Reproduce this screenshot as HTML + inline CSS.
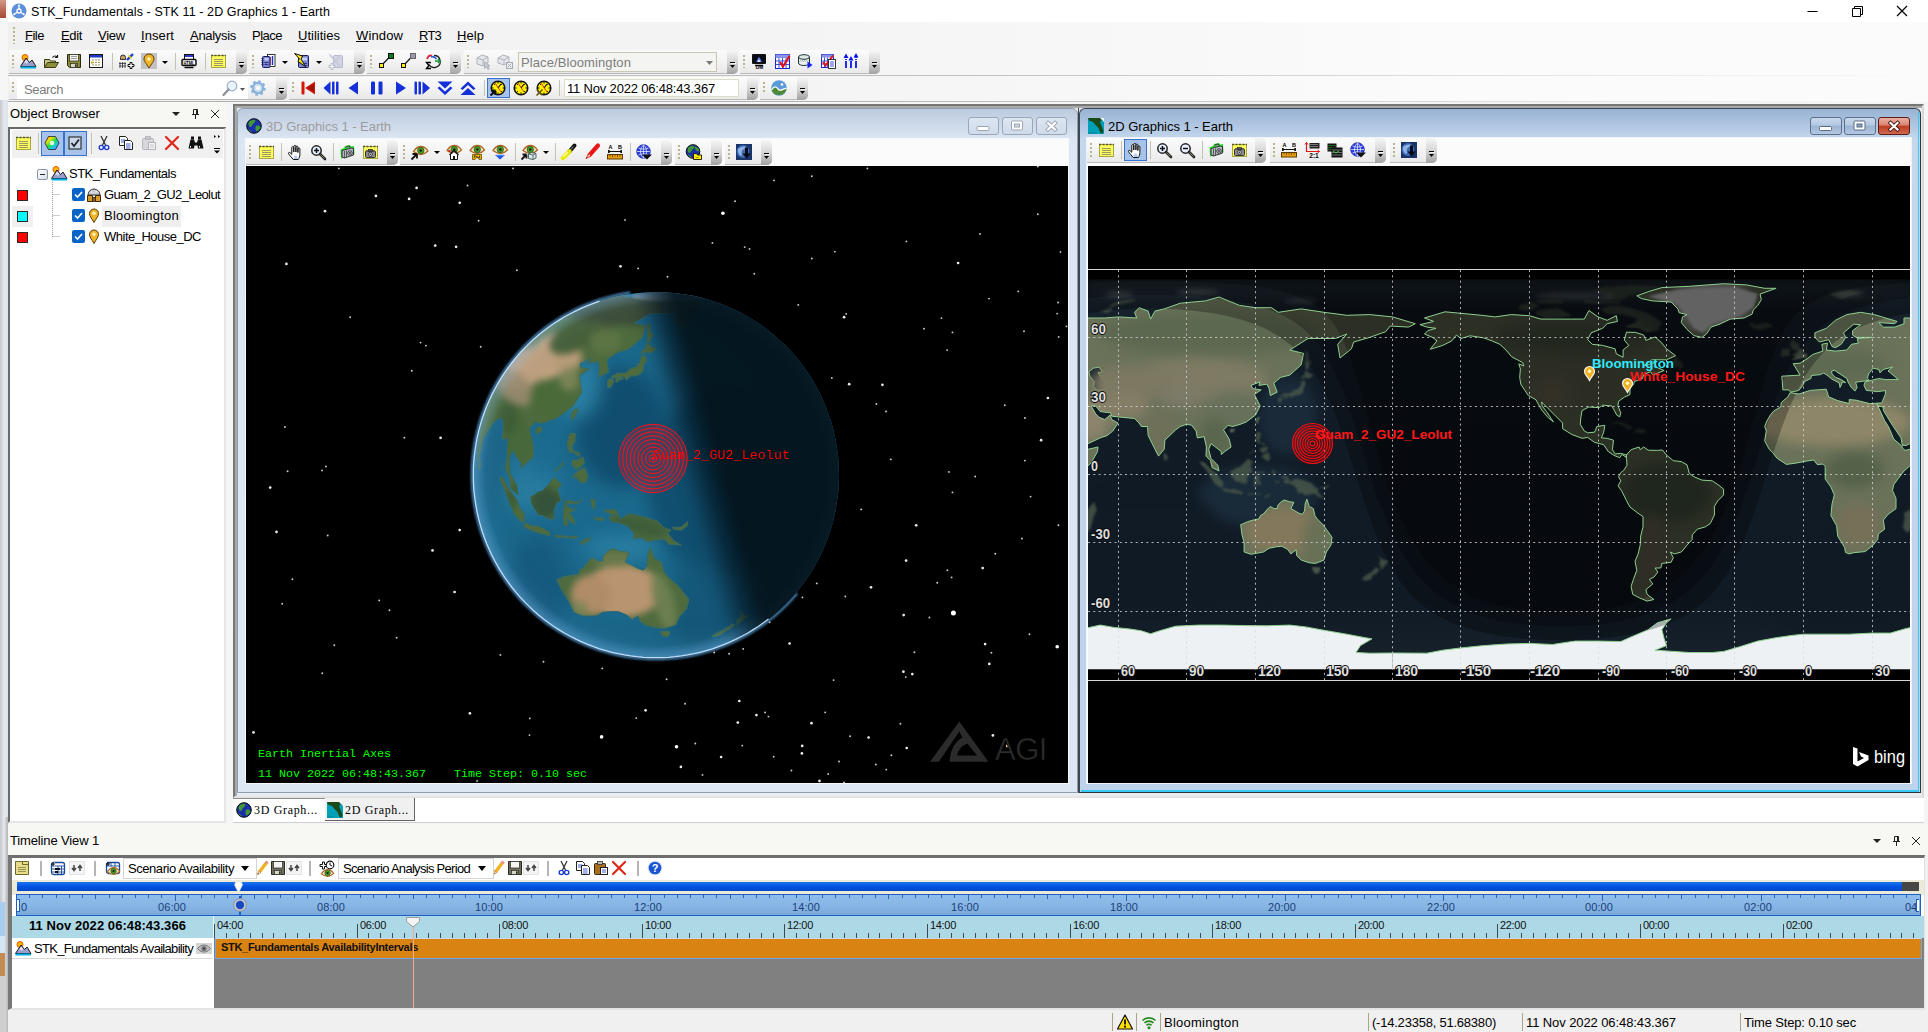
<!DOCTYPE html>
<html><head><meta charset="utf-8"><title>STK_Fundamentals - STK 11 - 2D Graphics 1 - Earth</title>
<style>
html,body{margin:0;padding:0;}
body{width:1928px;height:1032px;overflow:hidden;background:#f0f0f0;position:relative;font-family:"Liberation Sans",sans-serif;}
div,span.t,svg{position:absolute;box-sizing:border-box;}
span.t{white-space:pre;display:block;}
.tb{background:linear-gradient(#fbfbfb,#f1f1f1 60%,#e9e9e9);border-radius:0 5px 5px 0;border-bottom:1px solid #b9b9b9;}
.ov{background:linear-gradient(#f6f6f6,#d6d6d6 50%,#a2a2a2);border-radius:0 5px 5px 0;}
.sep{background:#c5c2b0;width:1px;}
.grip{width:2px;background:repeating-linear-gradient(#b7b48f 0 2px,transparent 2px 4px);}
u{text-decoration:underline;text-underline-offset:1px;}
</style></head>
<body>
<div style="left:0px;top:0px;width:8px;height:1032px;background:linear-gradient(90deg,#c4c6ca,#e4e8ee 50%,#dde3ec);"></div>
<div style="left:0px;top:0px;width:6px;height:18px;background:linear-gradient(#d09a88,#b9654f 60%,#a04a38);"></div>
<div style="left:0px;top:18px;width:8px;height:82px;background:#f6f6f6;"></div>
<div style="left:6px;top:0px;width:2px;height:18px;background:#f6f6f6;"></div>
<div style="left:0px;top:902px;width:5px;height:34px;background:#a8cdf0;"></div>
<div style="left:0px;top:936px;width:5px;height:17px;background:#d4e6f6;"></div>
<div style="left:0px;top:953px;width:5px;height:23px;background:#c48c54;"></div>
<div style="left:0px;top:976px;width:5px;height:56px;background:#cfcfcf;"></div>
<div style="left:5px;top:817px;width:3px;height:215px;background:linear-gradient(90deg,#d8d8d8,#b4b4b4);"></div>
<div style="left:8px;top:0px;width:1920px;height:22px;background:#fff;"></div>
<svg width="16" height="16" viewBox="0 0 16 16" style="left:11px;top:3px;overflow:visible"><circle cx="8" cy="8" r="7.500" fill="#5d8fdb"/><circle cx="8" cy="8" r="2" fill="none" stroke="#fff" stroke-width="1.300"/><path d="M8 6V2.500M9.700 9.200l3 2M6.300 9.200l-3 2" stroke="#fff" stroke-width="1.200"/><circle cx="8" cy="2.500" r="1" fill="#fff"/><circle cx="12.800" cy="11.300" r="1" fill="#fff"/><circle cx="3.200" cy="11.300" r="1" fill="#fff"/></svg>
<span id="title" class="t" style="left:31px;top:1.7px;line-height:20px;font-size:12.5px;color:#000;font-weight:normal;font-family:'Liberation Sans',sans-serif;letter-spacing:0.095px;">STK_Fundamentals - STK 11 - 2D Graphics 1 - Earth</span>
<svg width="140" height="22" style="left:1788px;top:0"><path d="M19.5 11.5h10" stroke="#000"/><path d="M64.5 8.5h8v8h-8zM66.5 8.5v-2h8v8h-2" fill="none" stroke="#000"/><path d="M109 6l10 10M119 6l-10 10" stroke="#000" stroke-width="1.2"/></svg>
<div style="left:8px;top:22px;width:1920px;height:27px;background:linear-gradient(90deg,#f0f0f0,#f4f4f4 40%,#fbfbfb 75%);"></div>
<div class="grip" style="left:13px;top:27px;width:2px;height:17px;"></div>
<span id="m_File" class="t" style="left:25px;top:25.5px;line-height:20px;font-size:13px;color:#000;font-weight:normal;font-family:'Liberation Sans',sans-serif;letter-spacing:-0.488px;"><u>F</u>ile</span>
<span id="m_Edit" class="t" style="left:61px;top:25.5px;line-height:20px;font-size:13px;color:#000;font-weight:normal;font-family:'Liberation Sans',sans-serif;letter-spacing:-0.356px;"><u>E</u>dit</span>
<span id="m_View" class="t" style="left:98px;top:25.5px;line-height:20px;font-size:13px;color:#000;font-weight:normal;font-family:'Liberation Sans',sans-serif;letter-spacing:-0.238px;"><u>V</u>iew</span>
<span id="m_Insert" class="t" style="left:141px;top:25.5px;line-height:20px;font-size:13px;color:#000;font-weight:normal;font-family:'Liberation Sans',sans-serif;letter-spacing:0.078px;"><u>I</u>nsert</span>
<span id="m_Analysis" class="t" style="left:190px;top:25.5px;line-height:20px;font-size:13px;color:#000;font-weight:normal;font-family:'Liberation Sans',sans-serif;letter-spacing:-0.303px;"><u>A</u>nalysis</span>
<span id="m_Place" class="t" style="left:252px;top:25.5px;line-height:20px;font-size:13px;color:#000;font-weight:normal;font-family:'Liberation Sans',sans-serif;letter-spacing:-0.509px;">P<u>l</u>ace</span>
<span id="m_Utilities" class="t" style="left:298px;top:25.5px;line-height:20px;font-size:13px;color:#000;font-weight:normal;font-family:'Liberation Sans',sans-serif;letter-spacing:0.010px;"><u>U</u>tilities</span>
<span id="m_Window" class="t" style="left:356px;top:25.5px;line-height:20px;font-size:13px;color:#000;font-weight:normal;font-family:'Liberation Sans',sans-serif;letter-spacing:0.125px;"><u>W</u>indow</span>
<span id="m_RT3" class="t" style="left:419px;top:25.5px;line-height:20px;font-size:13px;color:#000;font-weight:normal;font-family:'Liberation Sans',sans-serif;letter-spacing:-0.776px;"><u>R</u>T3</span>
<span id="m_Help" class="t" style="left:457px;top:25.5px;line-height:20px;font-size:13px;color:#000;font-weight:normal;font-family:'Liberation Sans',sans-serif;letter-spacing:0.062px;"><u>H</u>elp</span>
<div style="left:8px;top:49px;width:1920px;height:54px;background:linear-gradient(90deg,#efefef,#f4f4f4 40%,#fbfbfb 75%);"></div>
<div class="tb" style="left:9px;top:50px;width:238px;height:24px;"></div>
<div class="grip" style="left:12px;top:55px;width:2px;height:13px;"></div>
<div class="ov" style="left:236px;top:50px;width:11px;height:24px;"><svg width="11" height="24" style="left:0;top:0"><path d="M3 12.5h5" stroke="#000" stroke-width="1"/><path d="M3 15h5l-2.500 3z" fill="#000"/><path d="M4 13.5h5" stroke="#fff" stroke-width="1" opacity=".8"/></svg></div>
<svg width="16" height="16" viewBox="0 0 16 16" style="left:20px;top:53px;overflow:visible"><circle cx="5" cy="4.500" r="3" fill="#ffb400" stroke="#e85a00" stroke-width="1"/><path d="M0.500 13.500L6 5l3.500 4.500L12 7l4 6.500z" fill="#9a9ccc" stroke="#1a1a1a" stroke-width="1"/><path d="M6 6.500l-2 4 2-1 1 2 1-3z" fill="#fff" opacity=".7"/><rect x="0.500" y="13.500" width="15.500" height="2" fill="#00aee8"/></svg>
<svg width="16" height="16" viewBox="0 0 16 16" style="left:43px;top:53px;overflow:visible"><path d="M1.500 14.500v-8h5l1 1.500h5v2" fill="#c8c88a" stroke="#3c3c14" stroke-width="1"/><path d="M1.500 14.500l3-5h11l-3 5z" fill="#8e8e3c" stroke="#3c3c14" stroke-width="1"/><path d="M9.500 4.500c1.500-2 3.500-2 5 0M14.500 4.500v-2.500M14.500 4.500h-2.500" stroke="#111" stroke-width="1.200" fill="none"/></svg>
<svg width="16" height="16" viewBox="0 0 16 16" style="left:66px;top:53px;overflow:visible"><path d="M1.500 1.500h13v13h-11l-2-2z" fill="#8a8a3e" stroke="#2a2a10" stroke-width="1"/><rect x="3.500" y="1.500" width="9" height="6.500" fill="#f4f4f4" stroke="#2a2a10" stroke-width=".7"/><path d="M5 3.500h6M5 5.500h6" stroke="#888" stroke-width=".8"/><rect x="4.500" y="10.500" width="7" height="4" fill="#d8d8c8" stroke="#2a2a10" stroke-width=".7"/><rect x="9" y="11.300" width="1.700" height="2.600" fill="#2a2a10"/></svg>
<svg width="16" height="16" viewBox="0 0 16 16" style="left:88px;top:53px;overflow:visible"><rect x="1.500" y="1.500" width="13" height="13" fill="#fff" stroke="#1a1a1a" stroke-width="1"/><rect x="2" y="2" width="12" height="2.500" fill="#1c3cc8"/><path d="M4 7h8M4 9.500h8M4 12h8" stroke="#9a9a6a" stroke-width="1.200" stroke-dasharray="2 1"/><rect x="3" y="8.700" width="2" height="1.800" fill="#d8a800"/></svg>
<div class="sep" style="left:112px;top:53px;width:1px;height:17px;"></div>
<svg width="16" height="16" viewBox="0 0 16 16" style="left:118px;top:53px;overflow:visible"><path d="M2.500 6.500h5v-2a2.500 2.500 0 0 0-5 0z" fill="#c8a064" stroke="#222" stroke-width=".9"/><path d="M9 7l6-6" stroke="#1a3cd8" stroke-width="2.400"/><path d="M10.500 2.500l3 3" stroke="#e8d800" stroke-width="1.600"/><path d="M2 9v6M4.500 9v6M7 9v6M1 10.500h7M1 13h7" stroke="#444" stroke-width=".9"/><path d="M10 11.500h2v-2h2v2h2v2h-2v2h-2v-2h-2z" fill="#fff" stroke="#111" stroke-width="1"/></svg>
<svg width="16" height="16" viewBox="0 0 16 16" style="left:141px;top:53px;overflow:visible"><rect x="0" y="0" width="16" height="16" fill="#c2c2c2"/><path d="M8 15C5 10 3 8.500 3 6a5 5 0 0 1 10 0c0 2.500-2 4-5 9z" fill="#f0b428" stroke="#5a3c00" stroke-width="1"/><circle cx="8" cy="6" r="1.800" fill="#fff3c0"/></svg>
<svg width="6" height="3" style="left:162px;top:61px"><path d="M0 0h6L3 3z" fill="#000"/></svg>
<div class="sep" style="left:175px;top:53px;width:1px;height:17px;"></div>
<svg width="16" height="16" viewBox="0 0 16 16" style="left:181px;top:53px;overflow:visible"><rect x="3.500" y="1.500" width="9" height="6" fill="#fff" stroke="#111" stroke-width="1"/><rect x="4" y="2" width="8" height="2" fill="#2a3cc8"/><rect x="1" y="6.500" width="14" height="6" rx="1" fill="#fff" stroke="#111" stroke-width="1.500"/><text x="8" y="11.700" font-size="5.400" font-weight="bold" text-anchor="middle" textLength="11" lengthAdjust="spacingAndGlyphs" font-family="Liberation Sans,sans-serif" fill="#000">HTML</text><path d="M3.500 14.500h9" stroke="#111" stroke-width="1.500"/></svg>
<div class="sep" style="left:205px;top:53px;width:1px;height:17px;"></div>
<svg width="16" height="16" viewBox="0 0 16 16" style="left:210px;top:53px;overflow:visible"><rect x="1.500" y="2.500" width="14" height="12" fill="#ffff5a" stroke="#a8a846" stroke-width="1"/><path d="M1 2.500h15" stroke="#55552a" stroke-dasharray="2 1.500" stroke-width="1.600"/><path d="M4 6.500h9M4 8.500h9M4 10.500h9M4 12.500h9" stroke="#8e8e66" stroke-width=".9"/></svg>
<div class="tb" style="left:249px;top:50px;width:116px;height:24px;"></div>
<div class="grip" style="left:252px;top:55px;width:2px;height:13px;"></div>
<div class="ov" style="left:354px;top:50px;width:11px;height:24px;"><svg width="11" height="24" style="left:0;top:0"><path d="M3 12.5h5" stroke="#000" stroke-width="1"/><path d="M3 15h5l-2.500 3z" fill="#000"/><path d="M4 13.5h5" stroke="#fff" stroke-width="1" opacity=".8"/></svg></div>
<svg width="16" height="16" viewBox="0 0 16 16" style="left:260px;top:53px;overflow:visible"><rect x="7.500" y="1.500" width="7.500" height="12" fill="#fff" stroke="#222" stroke-width=".9"/><path d="M10 4v8" stroke="#e01818" stroke-width="1.400"/><path d="M12.500 3v9" stroke="#1830d0" stroke-width="1.400"/><rect x="2.500" y="3.500" width="7.500" height="11" rx="1" fill="#7a84d0" stroke="#1a1a5a" stroke-width="1"/><path d="M1.500 5.500h2M1.500 7.500h2M1.500 9.500h2M1.500 11.500h2" stroke="#1a1a5a" stroke-width=".9"/><rect x="4.500" y="5" width="4" height="2.500" fill="#c8d0ff"/><path d="M4.500 9.500h4M4.500 11.500h4" stroke="#2a2a7a" stroke-width=".9"/></svg>
<svg width="6" height="3" style="left:282px;top:61px"><path d="M0 0h6L3 3z" fill="#000"/></svg>
<svg width="16" height="16" viewBox="0 0 16 16" style="left:294px;top:53px;overflow:visible"><rect x="4.500" y="2.500" width="10" height="12" rx="1" fill="#7a84d0" stroke="#1a1a5a" stroke-width="1"/><rect x="8" y="4.500" width="5" height="3" fill="#c8d0ff"/><path d="M9 10.500h4M9 12.500h4" stroke="#2a2a7a" stroke-width=".9"/><path d="M0.500 0.500l8 2.500-1.500 3.200 4.500 7.300-7.500-5 1.300-2.800z" fill="#ffee00" stroke="#111" stroke-width="1" stroke-linejoin="round"/></svg>
<svg width="6" height="3" style="left:316px;top:61px"><path d="M0 0h6L3 3z" fill="#000"/></svg>
<svg width="16" height="16" viewBox="0 0 16 16" style="left:328px;top:53px;overflow:visible"><rect x="5.500" y="2.500" width="9" height="12" rx="1" fill="#d0d4e4" stroke="#b4b8cc" stroke-width="1"/><path d="M1.500 1.500l11 12M13 2L2.500 13" stroke="#c4c8d8" stroke-width="1.500"/><path d="M1 12.500h2v-2h2v2h2v2h-2v2h-2v-2h-2z" fill="#f4f4f4" stroke="#b4b8cc" stroke-width=".9"/></svg>
<div class="tb" style="left:367px;top:50px;width:94px;height:24px;"></div>
<div class="grip" style="left:370px;top:55px;width:2px;height:13px;"></div>
<div class="ov" style="left:450px;top:50px;width:11px;height:24px;"><svg width="11" height="24" style="left:0;top:0"><path d="M3 12.5h5" stroke="#000" stroke-width="1"/><path d="M3 15h5l-2.500 3z" fill="#000"/><path d="M4 13.5h5" stroke="#fff" stroke-width="1" opacity=".8"/></svg></div>
<svg width="16" height="16" viewBox="0 0 16 16" style="left:378px;top:53px;overflow:visible"><path d="M3.500 12.500L12.500 3" stroke="#111" stroke-width="1.200"/><rect x="1.500" y="10.500" width="4" height="4" fill="#ffee00" stroke="#111" stroke-width="1"/><rect x="10.500" y="0.500" width="5" height="5" fill="#0a7a1a" stroke="#111" stroke-width="1"/></svg>
<svg width="16" height="16" viewBox="0 0 16 16" style="left:400px;top:53px;overflow:visible"><path d="M3.500 12.500L12.500 3" stroke="#111" stroke-width="1.200"/><rect x="1.500" y="10.500" width="4" height="4" fill="#ffee00" stroke="#111" stroke-width="1"/><rect x="10.500" y="0.500" width="5" height="5" fill="#9a9aaa" stroke="#666" stroke-width="1"/></svg>
<svg width="16" height="16" viewBox="0 0 16 16" style="left:425px;top:53px;overflow:visible"><path d="M9 2.500a6 6 0 1 1-5 9" stroke="#222" stroke-width="1.300" fill="none"/><path d="M2 6c1-3 3-4 5-3.500" stroke="#e0203c" stroke-width="1.800" fill="none"/><path d="M6 4c2-1 4 0 5.500 2" stroke="#2a5ae0" stroke-width="1.600" fill="none"/><path d="M10 8h5l-2-2M15 8l-2 2" stroke="#1a9a3a" stroke-width="1.400" fill="none"/><path d="M6 9.500H1.500l2.500 3-2.500 3H6" stroke="#000" stroke-width="1.400" fill="none"/></svg>
<div class="tb" style="left:464px;top:50px;width:274px;height:24px;"></div>
<div class="grip" style="left:467px;top:55px;width:2px;height:13px;"></div>
<div class="ov" style="left:727px;top:50px;width:11px;height:24px;"><svg width="11" height="24" style="left:0;top:0"><path d="M3 12.5h5" stroke="#000" stroke-width="1"/><path d="M3 15h5l-2.500 3z" fill="#000"/><path d="M4 13.5h5" stroke="#fff" stroke-width="1" opacity=".8"/></svg></div>
<svg width="16" height="16" viewBox="0 0 16 16" style="left:475px;top:53px;overflow:visible"><path d="M2 5l5-3 6 2v6l-5 3-6-2z" fill="#e4e6ea" stroke="#b0b4bc" stroke-width="1"/><path d="M2 5l6 2 5-3M8 7v6" stroke="#b0b4bc" stroke-width="1" fill="none"/><path d="M9.500 8.500v7l2-1.500 1.500 2.500 1.200-.7-1.500-2.500 2.300-.3z" fill="#c4c8d0" stroke="#a0a4ac" stroke-width=".7"/></svg>
<svg width="16" height="16" viewBox="0 0 16 16" style="left:497px;top:53px;overflow:visible"><path d="M1 5l5-3 6 2v5l-5 3-6-2z" fill="#e4e6ea" stroke="#b0b4bc" stroke-width="1"/><path d="M1 5l6 2 5-3M7 7v5" stroke="#b0b4bc" stroke-width="1" fill="none"/><rect x="9.500" y="9.500" width="6" height="6" fill="#f0f0f4" stroke="#a8acb8" stroke-width="1"/><path d="M10.500 10.500l4 4M14.500 10.500l-4 4" stroke="#a8acb8" stroke-width=".9"/></svg>
<div style="left:518px;top:52px;width:199px;height:20px;background:#f4f4f2;border:1px solid #c9c7b4;"></div>
<span id="combo1" class="t" style="left:521px;top:52.5px;line-height:20px;font-size:13px;color:#7d7d7d;font-weight:normal;font-family:'Liberation Sans',sans-serif;letter-spacing:0.094px;">Place/Bloomington</span>
<svg width="7" height="4" style="left:706px;top:61px"><path d="M0 0h7L3.5 4z" fill="#7a7a7a"/></svg>
<div class="tb" style="left:740px;top:50px;width:140px;height:24px;"></div>
<div class="grip" style="left:743px;top:55px;width:2px;height:13px;"></div>
<div class="ov" style="left:869px;top:50px;width:11px;height:24px;"><svg width="11" height="24" style="left:0;top:0"><path d="M3 12.5h5" stroke="#000" stroke-width="1"/><path d="M3 15h5l-2.500 3z" fill="#000"/><path d="M4 13.5h5" stroke="#fff" stroke-width="1" opacity=".8"/></svg></div>
<svg width="16" height="16" viewBox="0 0 16 16" style="left:751px;top:53px;overflow:visible"><rect x="1" y="1" width="14" height="10" rx="1" fill="#111"/><rect x="2.500" y="2.500" width="11" height="7" fill="#0a0a1a"/><path d="M5 9l3-5.500L11 9z" fill="#5a7adc"/><path d="M6.500 9l1.500-3 1.500 3z" fill="#e8e8ff"/><path d="M4 12.500h8" stroke="#111" stroke-width="1.500"/><text x="8.500" y="16.200" font-size="4.800" font-weight="bold" text-anchor="middle" font-family="Liberation Sans,sans-serif" fill="#000">DM</text></svg>
<svg width="16" height="16" viewBox="0 0 16 16" style="left:774px;top:53px;overflow:visible"><rect x="1.500" y="1.500" width="14" height="14" fill="#fff" stroke="#1a2ac8" stroke-width="1"/><rect x="1.500" y="1.500" width="14" height="3.500" fill="#8a94e8"/><path d="M1.500 8h14M1.500 11.500h14M5 5v10.500M8.500 5v10.500M12 5v10.500" stroke="#2a3cd8" stroke-width=".9"/><path d="M6 9l3 4.500L15.500 3" stroke="#e81010" stroke-width="2.200" fill="none"/></svg>
<svg width="16" height="16" viewBox="0 0 16 16" style="left:797px;top:53px;overflow:visible"><path d="M1.500 4v6c0 1.500 2.500 2.500 5.500 2.500s5.500-1 5.500-2.500V4" fill="#f0f0f0" stroke="#1a3a3a" stroke-width="1"/><ellipse cx="7" cy="4" rx="5.500" ry="2.300" fill="#e0e8e8" stroke="#1a3a3a" stroke-width="1"/><path d="M2.500 8.500l1-1 1 1 1-1 1 1 1-1 1 1 1-1 1 1 1-1" stroke="#8a9a9a" stroke-width=".7" fill="none"/><path d="M10.500 8.500v7l5-3.500z" fill="#1020f0"/></svg>
<svg width="16" height="16" viewBox="0 0 16 16" style="left:820px;top:53px;overflow:visible"><rect x="1.500" y="1.500" width="12" height="13" fill="#fff" stroke="#1a2ac8" stroke-width="1"/><rect x="1.500" y="1.500" width="12" height="3" fill="#8a94e8"/><path d="M1.500 8h7M1.500 11h7M4.500 4.500v10M7.500 4.500v10" stroke="#2a3cd8" stroke-width=".9"/><path d="M3 9l2.500 3.500L13 2.500" stroke="#e81010" stroke-width="2" fill="none"/><rect x="8.500" y="6.500" width="7" height="9" fill="#fff" stroke="#222" stroke-width=".9"/><path d="M10 9h4M10 11h4M10 13h4" stroke="#2a3cd8" stroke-width=".9"/></svg>
<svg width="16" height="16" viewBox="0 0 16 16" style="left:843px;top:53px;overflow:visible"><path d="M3 15V4M8 15V6M13 15V3" stroke="#0a18e0" stroke-width="1.800" stroke-dasharray="7 1 1 1 1 1"/><path d="M0.500 5L3 0.500 5.500 5zM5.500 7.500L8 3l2.500 4.500zM10.500 4.500L13 0l2.500 4.500z" fill="#0a18e0"/></svg>
<div class="tb" style="left:9px;top:77px;width:278px;height:23px;"></div>
<div class="grip" style="left:12px;top:82px;width:2px;height:12px;"></div>
<div class="ov" style="left:276px;top:77px;width:11px;height:23px;"><svg width="11" height="23" style="left:0;top:0"><path d="M3 11.5h5" stroke="#000" stroke-width="1"/><path d="M3 14h5l-2.500 3z" fill="#000"/><path d="M4 12.5h5" stroke="#fff" stroke-width="1" opacity=".8"/></svg></div>
<div style="left:17px;top:78px;width:231px;height:21px;background:#fff;"></div>
<span id="search" class="t" style="left:24px;top:80.0px;line-height:20px;font-size:13px;color:#7d7d7d;font-weight:normal;font-family:'Liberation Sans',sans-serif;letter-spacing:-0.367px;">Search</span>
<svg width="16" height="16" viewBox="0 0 16 16" style="left:222px;top:80px;overflow:visible"><circle cx="10" cy="6" r="4.800" fill="#eaf3fc" stroke="#9ab0c8" stroke-width="1.200"/><path d="M6.500 9.500L1.500 15" stroke="#8a8f98" stroke-width="2.200" stroke-linecap="round"/></svg>
<svg width="5" height="3" style="left:240px;top:88px"><path d="M0 0h5L2.5 3z" fill="#555"/></svg>
<svg width="16" height="16" viewBox="0 0 16 16" style="left:250px;top:80px;overflow:visible"><circle cx="8" cy="8" r="5" fill="none" stroke="#8ab4dc" stroke-width="2.600"/><circle cx="8" cy="8" r="6.600" fill="none" stroke="#8ab4dc" stroke-width="2.400" stroke-dasharray="2.600 2.580"/><circle cx="8" cy="8" r="2.600" fill="#fbfbfb" stroke="#a8c8e8" stroke-width=".6"/></svg>
<div class="tb" style="left:289px;top:77px;width:469px;height:23px;"></div>
<div class="grip" style="left:292px;top:82px;width:2px;height:12px;"></div>
<div class="ov" style="left:747px;top:77px;width:11px;height:23px;"><svg width="11" height="23" style="left:0;top:0"><path d="M3 11.5h5" stroke="#000" stroke-width="1"/><path d="M3 14h5l-2.500 3z" fill="#000"/><path d="M4 12.5h5" stroke="#fff" stroke-width="1" opacity=".8"/></svg></div>
<svg width="16" height="16" viewBox="0 0 16 16" style="left:300px;top:80px;overflow:visible"><rect x="1.500" y="1.500" width="3" height="13" rx="1" fill="#d01808"/><path d="M15 1.500v13L5 8z" fill="#d01808"/><path d="M14 4v8L7.500 8z" fill="#a01004"/></svg>
<svg width="16" height="16" viewBox="0 0 16 16" style="left:323px;top:80px;overflow:visible"><path d="M7.500 1.500v13L0.500 8z" fill="#1430d8"/><rect x="9" y="1.500" width="2.500" height="13" rx="1" fill="#1430d8"/><rect x="13" y="1.500" width="2.500" height="13" rx="1" fill="#1430d8"/></svg>
<svg width="16" height="16" viewBox="0 0 16 16" style="left:346px;top:80px;overflow:visible"><path d="M12 1.500v13L2.500 8z" fill="#1430d8"/></svg>
<svg width="16" height="16" viewBox="0 0 16 16" style="left:369px;top:80px;overflow:visible"><rect x="2" y="1.500" width="4" height="13" rx="1.200" fill="#1430d8"/><rect x="9.500" y="1.500" width="4" height="13" rx="1.200" fill="#1430d8"/></svg>
<svg width="16" height="16" viewBox="0 0 16 16" style="left:392px;top:80px;overflow:visible"><path d="M4 1.500v13L14 8z" fill="#1430d8"/></svg>
<svg width="16" height="16" viewBox="0 0 16 16" style="left:414px;top:80px;overflow:visible"><path d="M8.500 1.500v13L16 8z" fill="#1430d8"/><rect x="0.500" y="1.500" width="2.500" height="13" rx="1" fill="#1430d8"/><rect x="4.500" y="1.500" width="2.500" height="13" rx="1" fill="#1430d8"/></svg>
<svg width="16" height="16" viewBox="0 0 16 16" style="left:437px;top:80px;overflow:visible"><path d="M0.500 1.500h15L8 8.500z" fill="#1430d8"/><path d="M0.500 8l2-1.500L8 11.500l5.500-5 2 1.500L8 15z" fill="#1430d8"/></svg>
<svg width="16" height="16" viewBox="0 0 16 16" style="left:460px;top:80px;overflow:visible"><path d="M0.500 15h15L8 8z" fill="#1430d8"/><path d="M0.500 8.500l2 1.500L8 5l5.500 5 2-1.500L8 1.500z" fill="#1430d8"/></svg>
<div class="sep" style="left:484px;top:80px;width:1px;height:16px;"></div>
<div style="left:487px;top:78px;width:23px;height:20px;background:#a8c3ea;border:1px solid #3a72d0;"></div>
<svg width="16" height="16" viewBox="0 0 16 16" style="left:490px;top:80px;overflow:visible"><circle cx="8" cy="8" r="6.800" fill="#fff200" stroke="#111" stroke-width="1.500"/><path d="M8 2v1.500M8 12.500V14M2 8h1.500M12.500 8H14M3.800 3.800l1 1M12.200 3.800l-1 1M3.800 12.200l1-1M12.200 12.200l-1-1" stroke="#111" stroke-width="1"/><path d="M8 8l3-4" stroke="#111" stroke-width="1.200"/><path d="M5 3l6 9" stroke="#e02020" stroke-width=".9"/><path d="M0.500 15.500l5-5M5.500 10.500v4M5.500 10.500h-4" stroke="#111" stroke-width="2" fill="none"/></svg>
<svg width="16" height="16" viewBox="0 0 16 16" style="left:513px;top:80px;overflow:visible"><circle cx="8" cy="8" r="6.800" fill="#fff200" stroke="#111" stroke-width="1.500"/><path d="M8 2v1.500M8 12.500V14M2 8h1.500M12.500 8H14M3.800 3.800l1 1M12.200 3.800l-1 1M3.800 12.200l1-1M12.200 12.200l-1-1" stroke="#111" stroke-width="1"/><path d="M8 8l3-4" stroke="#111" stroke-width="1.200"/><path d="M5 3l6 9" stroke="#e02020" stroke-width=".9"/></svg>
<svg width="16" height="16" viewBox="0 0 16 16" style="left:536px;top:80px;overflow:visible"><circle cx="8" cy="8" r="6.800" fill="#fff200" stroke="#111" stroke-width="1.500"/><path d="M8 2v1.500M8 12.500V14M2 8h1.500M12.500 8H14M3.800 3.800l1 1M12.200 3.800l-1 1M3.800 12.200l1-1M12.200 12.200l-1-1" stroke="#111" stroke-width="1"/><path d="M8 8l3-4" stroke="#111" stroke-width="1.200"/><path d="M5 3l6 9" stroke="#e02020" stroke-width=".9"/><path d="M0.500 15.500l6-6M1 10l5 5" stroke="#6a5a00" stroke-width="1.600" fill="none"/></svg>
<div class="sep" style="left:559px;top:80px;width:1px;height:16px;"></div>
<div style="left:564px;top:79px;width:175px;height:18px;background:#fff;border:1px solid #dcdcc8;"></div>
<span id="date1" class="t" style="left:567px;top:78.5px;line-height:20px;font-size:13px;color:#000;font-weight:normal;font-family:'Liberation Sans',sans-serif;letter-spacing:-0.178px;">11 Nov 2022 06:48:43.367</span>
<div class="tb" style="left:760px;top:77px;width:48px;height:23px;"></div>
<div class="grip" style="left:763px;top:82px;width:2px;height:12px;"></div>
<div class="ov" style="left:797px;top:77px;width:11px;height:23px;"><svg width="11" height="23" style="left:0;top:0"><path d="M3 11.5h5" stroke="#000" stroke-width="1"/><path d="M3 14h5l-2.500 3z" fill="#000"/><path d="M4 12.5h5" stroke="#fff" stroke-width="1" opacity=".8"/></svg></div>
<svg width="16" height="16" viewBox="0 0 16 16" style="left:771px;top:80px;overflow:visible"><circle cx="8" cy="8" r="7.800" fill="#5a9ad8"/><circle cx="11" cy="4.500" r="1.300" fill="#fff"/><path d="M0.500 10C3 6 5 6 7.500 9.500 10 12 12.500 8 15.500 8.500A7.800 7.800 0 0 1 0.500 10z" fill="#4e8a34"/><path d="M0.500 10C3 6 5 6 7.500 9.500 10 12 12.500 8 15.500 8.500" stroke="#fff" stroke-width="1.300" fill="none"/></svg>
<div style="left:8px;top:75px;width:1920px;height:1px;background:linear-gradient(90deg,#bdbdbd,#bdbdbd 46%,rgba(200,200,200,0))"></div>
<div style="left:8px;top:101px;width:1920px;height:1px;background:linear-gradient(90deg,#b0b0b0,#b0b0b0 42%,rgba(200,200,200,0))"></div>
<div style="left:8px;top:102px;width:225px;height:722px;background:#f7f7f3;"></div>
<span id="ob_cap" class="t" style="left:10px;top:103.5px;line-height:20px;font-size:13px;color:#000;font-weight:normal;font-family:'Liberation Sans',sans-serif;letter-spacing:0.081px;">Object Browser</span>
<svg width="60" height="14" style="left:168px;top:107px"><path d="M4 5h8l-4 4z" fill="#222"/><path d="M25.5 2.5h4v5h-4zM28.5 2.5v5M24 7.5h7M27.5 8v4" fill="none" stroke="#222"/><path d="M43 3l8 8M51 3l-8 8" stroke="#222" stroke-width="1"/></svg>
<div style="left:8px;top:127px;width:219px;height:696px;background:#fff;border:2px solid #9a9a9a;border-top-color:#6a6a6a;border-left-color:#6a6a6a;border-right:3px solid #e6e6e6;border-bottom:2px solid #e6e6e6;"></div>
<div style="left:12px;top:130px;width:211px;height:28px;background:#f0f0f0;"></div>
<div style="left:41px;top:131px;width:23px;height:25px;background:#a8c3ea;border:1px solid #3a72d0;"></div>
<div style="left:64px;top:131px;width:23px;height:25px;background:#a8c3ea;border:1px solid #3a72d0;"></div>
<svg width="16" height="16" viewBox="0 0 16 16" style="left:15px;top:135px;overflow:visible"><rect x="1.500" y="2.500" width="14" height="12" fill="#ffff5a" stroke="#a8a846" stroke-width="1"/><path d="M1 2.500h15" stroke="#55552a" stroke-dasharray="2 1.500" stroke-width="1.600"/><path d="M4 6.500h9M4 8.500h9M4 10.500h9M4 12.500h9" stroke="#8e8e66" stroke-width=".9"/></svg>
<svg width="16" height="16" viewBox="0 0 16 16" style="left:44px;top:135px;overflow:visible"><defs><linearGradient id="cw" x1="0" y1="0" x2="1" y2="1"><stop offset="0" stop-color="#ff2020"/><stop offset=".25" stop-color="#ffe000"/><stop offset=".5" stop-color="#20e040"/><stop offset=".75" stop-color="#20c0ff"/><stop offset="1" stop-color="#c020ff"/></linearGradient></defs><path d="M4.500 1.500h7l3.500 6.500-3.500 6.500h-7L1 8z" fill="url(#cw)" stroke="#222" stroke-width=".8"/><circle cx="8" cy="8" r="2.300" fill="#fff" opacity=".85"/></svg>
<svg width="16" height="16" viewBox="0 0 16 16" style="left:67px;top:135px;overflow:visible"><rect x="2" y="2" width="12" height="12" fill="#c9d6ec" stroke="#333" stroke-width="1.200"/><path d="M4.500 8l2.500 3L12 4.500" stroke="#222" stroke-width="1.800" fill="none"/></svg>
<svg width="16" height="16" viewBox="0 0 16 16" style="left:96px;top:135px;overflow:visible"><path d="M5 1l4.500 9M11 1L6.500 10" stroke="#333" stroke-width="1.300"/><circle cx="5.300" cy="12.500" r="2.100" fill="none" stroke="#1a3ad0" stroke-width="1.400"/><circle cx="10.700" cy="12.500" r="2.100" fill="none" stroke="#1a3ad0" stroke-width="1.400"/></svg>
<svg width="16" height="16" viewBox="0 0 16 16" style="left:118px;top:135px;overflow:visible"><path d="M1.500 1.500h6l2 2v7h-8z" fill="#fff" stroke="#222" stroke-width="1"/><path d="M3 5h4.500M3 7h4.500" stroke="#2a4ad0" stroke-width=".9"/><path d="M6.500 5.500h6l2 2v7h-8z" fill="#fff" stroke="#222" stroke-width="1"/><path d="M8 9h4.500M8 11h4.500M8 13h4.500" stroke="#2a4ad0" stroke-width=".9"/></svg>
<svg width="16" height="16" viewBox="0 0 16 16" style="left:141px;top:135px;overflow:visible"><rect x="1.500" y="3.500" width="11" height="11" rx="1" fill="#d8d8dc" stroke="#b4b4bc" stroke-width="1"/><rect x="4.500" y="1.500" width="5" height="3" fill="#c4c4cc" stroke="#b4b4bc" stroke-width=".8"/><rect x="7.500" y="7.500" width="7" height="7" fill="#f2f2f4" stroke="#b4b4bc" stroke-width="1"/><path d="M9 10h4M9 12h4" stroke="#c0c0c8" stroke-width=".9"/></svg>
<svg width="16" height="16" viewBox="0 0 16 16" style="left:164px;top:135px;overflow:visible"><path d="M2 2l12 12M14 2L2 14" stroke="#e02818" stroke-width="2.200" stroke-linecap="round"/></svg>
<svg width="16" height="16" viewBox="0 0 16 16" style="left:188px;top:135px;overflow:visible"><path d="M2.500 4.500h3.500l1 3h2l1-3h3.500l2 9h-5.500l-.5-3h-3l-.5 3H0.500z" fill="#111"/><rect x="3" y="1.500" width="3" height="3" fill="#111"/><rect x="10" y="1.500" width="3" height="3" fill="#111"/><path d="M2.500 11v1.500M11.500 11v1.500" stroke="#fff" stroke-width="1"/></svg>
<div class="sep" style="left:38px;top:133px;width:1px;height:21px;"></div>
<div class="sep" style="left:91px;top:133px;width:1px;height:21px;"></div>
<svg width="8" height="22" style="left:214px;top:133px"><path d="M0 2l2 1.5L0 5zM4 2l2 1.5L4 5z" fill="#000"/><path d="M0 15.500h6" stroke="#000"/><path d="M0 17.5h6l-3 3z" fill="#000"/></svg>
<div style="left:12px;top:206px;width:21px;height:21px;background:#f0f0f0;"></div>
<div style="left:102px;top:206px;width:79px;height:21px;background:#efefef;"></div>
<svg width="20" height="70" style="left:45px;top:176px"><path d="M7.500 6v55M7.500 18.500h8M7.500 39.500h8M7.500 60.500h8" stroke="#9a9a9a" stroke-dasharray="1 1" fill="none"/></svg>
<div style="left:37px;top:169px;width:11px;height:11px;background:linear-gradient(135deg,#fff,#d8dde6);border:1px solid #8a96a8;border-radius:2px;"><div style="left:2px;top:4px;width:5px;height:1px;background:#223;"></div></div>
<svg width="16" height="16" viewBox="0 0 16 16" style="left:51px;top:165px;overflow:visible"><circle cx="5" cy="4.500" r="3" fill="#ffb400" stroke="#e85a00" stroke-width="1"/><path d="M0.500 13.500L6 5l3.500 4.500L12 7l4 6.500z" fill="#9a9ccc" stroke="#1a1a1a" stroke-width="1"/><path d="M6 6.500l-2 4 2-1 1 2 1-3z" fill="#fff" opacity=".7"/><rect x="0.500" y="13.500" width="15.500" height="2" fill="#00aee8"/></svg>
<span id="tr0" class="t" style="left:69px;top:163.5px;line-height:20px;font-size:13px;color:#000;font-weight:normal;font-family:'Liberation Sans',sans-serif;letter-spacing:-0.494px;">STK_Fundamentals</span>
<div style="left:17px;top:190px;width:11px;height:11px;background:#f00;border:1px solid #2a2a2a;"></div>
<div style="left:72px;top:188px;width:13px;height:13px;background:#0a64c8;border-radius:2px;"><svg width="13" height="13" style="left:0;top:0"><path d="M3 6.5l2.500 2.500L10 4" stroke="#fff" stroke-width="1.6" fill="none"/></svg></div>
<svg width="16" height="16" viewBox="0 0 16 16" style="left:86px;top:186px;overflow:visible"><path d="M2 9a6 6 0 0 1 12 0z" fill="#c8ccd4" stroke="#333" stroke-width="1"/><path d="M5 5l2 1-1 2zM10 4l1 2-2 1z" fill="#eee"/><path d="M1.500 9.500h5v6h-5zM9.500 9.500h5v6h-5z" fill="#d89a28" stroke="#3a2608" stroke-width="1"/><path d="M6.500 11.500h3v4h-3z" fill="#8a5a14" stroke="#3a2608" stroke-width=".8"/></svg>
<span id="tr1" class="t" style="left:104px;top:184.5px;line-height:20px;font-size:13px;color:#000;font-weight:normal;font-family:'Liberation Sans',sans-serif;letter-spacing:-0.616px;">Guam_2_GU2_Leolut</span>
<div style="left:17px;top:211px;width:11px;height:11px;background:#0ff;border:1px solid #2a2a2a;"></div>
<div style="left:72px;top:209px;width:13px;height:13px;background:#0a64c8;border-radius:2px;"><svg width="13" height="13" style="left:0;top:0"><path d="M3 6.5l2.500 2.500L10 4" stroke="#fff" stroke-width="1.6" fill="none"/></svg></div>
<svg width="16" height="16" viewBox="0 0 16 16" style="left:86px;top:207px;overflow:visible"><path d="M8 15.500C5.500 11 3.500 9 3.500 6.500a4.500 4.500 0 0 1 9 0c0 2.500-2 4.500-4.500 9z" fill="#f0b428" stroke="#5a3c00" stroke-width="1"/><circle cx="8" cy="6.300" r="1.700" fill="#fff3c0"/></svg>
<span id="tr2" class="t" style="left:104px;top:205.5px;line-height:20px;font-size:13px;color:#000;font-weight:normal;font-family:'Liberation Sans',sans-serif;letter-spacing:0.247px;">Bloomington</span>
<div style="left:17px;top:232px;width:11px;height:11px;background:#f00;border:1px solid #2a2a2a;"></div>
<div style="left:72px;top:230px;width:13px;height:13px;background:#0a64c8;border-radius:2px;"><svg width="13" height="13" style="left:0;top:0"><path d="M3 6.5l2.500 2.500L10 4" stroke="#fff" stroke-width="1.6" fill="none"/></svg></div>
<svg width="16" height="16" viewBox="0 0 16 16" style="left:86px;top:228px;overflow:visible"><path d="M8 15.500C5.500 11 3.500 9 3.500 6.500a4.500 4.500 0 0 1 9 0c0 2.500-2 4.500-4.500 9z" fill="#f0b428" stroke="#5a3c00" stroke-width="1"/><circle cx="8" cy="6.300" r="1.700" fill="#fff3c0"/></svg>
<span id="tr3" class="t" style="left:104px;top:226.5px;line-height:20px;font-size:13px;color:#000;font-weight:normal;font-family:'Liberation Sans',sans-serif;letter-spacing:-0.504px;">White_House_DC</span>
<div style="left:226px;top:102px;width:1702px;height:722px;background:#f5f5f5;"></div>
<div style="left:233px;top:104px;width:1691px;height:694px;background:#e9edf2;border:2px solid #8a8a8a;border-top-color:#777;border-left-color:#777;border-right-color:#d8d8d8;border-bottom-color:#e4e4e4;"></div>
<div style="left:235px;top:106px;width:1687px;height:2px;background:#a9a9a9;"></div>
<div style="left:235px;top:106px;width:2px;height:690px;background:#a9a9a9;"></div>
<div style="left:237px;top:108px;width:841px;height:685px;background:linear-gradient(#bccbdf,#dce6f3 30px,#dde7f3);border:1px solid #8f9db0;border-radius:6px 6px 0 0;"></div>
<div style="left:245px;top:138px;width:824px;height:646px;background:#fff;border:1px solid #f4f7fb;"></div>
<svg width="16" height="16" viewBox="0 0 16 16" style="left:246px;top:118px;overflow:visible"><circle cx="8" cy="8" r="7.300" fill="#1a2ea8" stroke="#0a0a0a" stroke-width="1"/><path d="M3 4c2-2 4-2.500 6-2 1 2-1 3-2 4s-1 3-3 3c-1-1-2-3-1-5zM10 8c2-1 4 0 4.500 1-.5 2-2 4-4 4.500-1-1-1.500-4-.5-5.500z" fill="#3f9a34"/><path d="M2 11c1 1 3 2 4 3-2 0-3.500-1.500-4-3z" fill="#3f9a34"/></svg>
<span id="w3d" class="t" style="left:266px;top:116.5px;line-height:20px;font-size:13px;color:#9c9c9c;font-weight:normal;font-family:'Liberation Sans',sans-serif;letter-spacing:-0.034px;">3D Graphics 1 - Earth</span>
<div style="left:968px;top:117px;width:31px;height:18px;background:linear-gradient(#dde6f1,#d0dbea);border:1px solid #9aa7ba;border-radius:3px;"><svg width="31" height="18" style="left:-1px;top:-1px"><rect x="9.0" y="9.5" width="12" height="4" rx="1" fill="#fff" stroke="#9aa4b2"/></svg></div>
<div style="left:1002px;top:117px;width:31px;height:18px;background:linear-gradient(#dde6f1,#d0dbea);border:1px solid #9aa7ba;border-radius:3px;"><svg width="31" height="18" style="left:-1px;top:-1px"><rect x="9.5" y="4.0" width="11" height="9" rx="1" fill="#fff" stroke="#9aa4b2"/><rect x="12.5" y="7.0" width="5" height="3" fill="#cfd9e6" stroke="#9aa4b2"/></svg></div>
<div style="left:1036px;top:117px;width:31px;height:18px;background:linear-gradient(#dde6f1,#d0dbea);border:1px solid #9aa7ba;border-radius:3px;"><svg width="31" height="18" style="left:-1px;top:-1px"><path d=" M12.0 6.0l7 6.5M19.0 6.0l-7 6.5" stroke="#9aa4b2" stroke-width="4" stroke-linecap="square"/><path d=" M12.0 6.0l7 6.5M19.0 6.0l-7 6.5" stroke="#fff" stroke-width="2.2" stroke-linecap="square"/></svg></div>
<div style="left:246px;top:139px;width:822px;height:27px;background:#fbfbfb;"></div>
<div class="tb" style="left:246px;top:140px;width:152px;height:25px;"></div>
<div class="grip" style="left:249px;top:145px;width:2px;height:14px;"></div>
<div class="ov" style="left:387px;top:140px;width:11px;height:25px;"><svg width="11" height="25" style="left:0;top:0"><path d="M3 13.5h5" stroke="#000" stroke-width="1"/><path d="M3 16h5l-2.500 3z" fill="#000"/><path d="M4 14.5h5" stroke="#fff" stroke-width="1" opacity=".8"/></svg></div>
<svg width="16" height="16" viewBox="0 0 16 16" style="left:258px;top:144px;overflow:visible"><rect x="1.500" y="2.500" width="14" height="12" fill="#ffff5a" stroke="#a8a846" stroke-width="1"/><path d="M1 2.500h15" stroke="#55552a" stroke-dasharray="2 1.500" stroke-width="1.600"/><path d="M4 6.500h9M4 8.500h9M4 10.500h9M4 12.500h9" stroke="#8e8e66" stroke-width=".9"/></svg>
<div class="sep" style="left:281px;top:143px;width:1px;height:18px;"></div>
<svg width="16" height="16" viewBox="0 0 16 16" style="left:287px;top:144px;overflow:visible"><path d="M4.800 10.300V3.600c0-1.400 2-1.400 2 0V8V2.400c0-1.400 2.100-1.400 2.100 0V8V3.100c0-1.400 2-1.400 2 0V8.500V4.900c0-1.300 2-1.300 2 0V10.500c0 2.200-.8 3.600-1.600 5H6.200C5 13.800 3.200 12 1.600 9.900c-.7-1 .5-2 1.500-1.200z" fill="#fff" stroke="#111" stroke-width="1" stroke-linejoin="round"/><path d="M6.500 15c0-2 .8-3.200 2.500-3.800 1.200.8 1.700 2 1.700 3.800z" fill="#b4ccf0"/></svg>
<svg width="16" height="16" viewBox="0 0 16 16" style="left:310px;top:144px;overflow:visible"><circle cx="6.500" cy="6.500" r="4.700" fill="#e6f0ff" stroke="#222" stroke-width="1.500"/><path d="M10 10l5 5" stroke="#222" stroke-width="2.600" stroke-linecap="round"/><path d="M10.500 10.500l4 4" stroke="#8a8a6a" stroke-width="1"/><path d="M4 6.500h5M6.500 4v5" stroke="#111" stroke-width="1.500"/></svg>
<div class="sep" style="left:333px;top:143px;width:1px;height:18px;"></div>
<svg width="16" height="16" viewBox="0 0 16 16" style="left:339px;top:144px;overflow:visible"><path d="M1.500 5.500l3.500-1.500 1-2 5-1 1 1.500 3-.5.5 8-4.500 2.500-9 2z" fill="#28e028"/><path d="M3 6.500l9-2.500 2.500.5v6.500l-9 3-2.500-1z" fill="#b4b8c4" stroke="#222" stroke-width=".9"/><path d="M5.500 7v7M7.500 6.500v7" stroke="#444" stroke-width=".8"/><circle cx="11" cy="9" r="2.200" fill="#e4e8f0" stroke="#222" stroke-width=".9"/><circle cx="11" cy="9" r=".9" fill="#222"/><path d="M6.500 4l1-1.500 3-.5.500 1.500" fill="#9498a4" stroke="#222" stroke-width=".8"/></svg>
<svg width="16" height="16" viewBox="0 0 16 16" style="left:362px;top:144px;overflow:visible"><rect x="1.500" y="2.500" width="14" height="12" fill="#ffff5a" stroke="#a8a846" stroke-width="1"/><path d="M1 2.500h15" stroke="#55552a" stroke-dasharray="2 1.500" stroke-width="1.600"/><path d="M4 6.500h9M4 8.500h9M4 10.500h9M4 12.500h9" stroke="#8e8e66" stroke-width=".9"/><rect x="3.500" y="7" width="10" height="6.500" rx="1" fill="#8c8c94" stroke="#222" stroke-width=".9"/><rect x="6.500" y="5.300" width="4" height="2" fill="#55555c" stroke="#222" stroke-width=".6"/><circle cx="8.500" cy="10.300" r="2" fill="#d8d8e0" stroke="#222" stroke-width=".8"/><circle cx="8.500" cy="10.300" r=".8" fill="#222"/></svg>
<div class="tb" style="left:400px;top:140px;width:272px;height:25px;"></div>
<div class="grip" style="left:403px;top:145px;width:2px;height:14px;"></div>
<div class="ov" style="left:661px;top:140px;width:11px;height:25px;"><svg width="11" height="25" style="left:0;top:0"><path d="M3 13.5h5" stroke="#000" stroke-width="1"/><path d="M3 16h5l-2.500 3z" fill="#000"/><path d="M4 14.5h5" stroke="#fff" stroke-width="1" opacity=".8"/></svg></div>
<svg width="16" height="16" viewBox="0 0 16 16" style="left:411px;top:144px;overflow:visible"><g transform="translate(1.500,0)"><path d="M1 7.500C3.500 3.500 6 2.500 8.500 2.500S13.500 4 15.500 7C13 9.500 11 10.500 8.500 10.500S3.500 9.500 1 7.500z" fill="#f0e6c8" stroke="#b0641e" stroke-width="1.3"/><circle cx="8.300" cy="6.500" r="3.200" fill="#4e9a2a" stroke="#2c5c14" stroke-width=".8"/><circle cx="8.300" cy="6.500" r="1.300" fill="#142808"/></g><path d="M0.500 15.500l5.500-5.500M6 10v4.500M6 10h-4.500" stroke="#111" stroke-width="1.800" fill="none"/></svg>
<svg width="6" height="3" style="left:434px;top:151px"><path d="M0 0h6L3 3z" fill="#000"/></svg>
<svg width="16" height="16" viewBox="0 0 16 16" style="left:446px;top:144px;overflow:visible"><g transform="translate(0,-1)"><path d="M1 7.500C3.500 3.500 6 2.500 8.500 2.500S13.500 4 15.500 7C13 9.500 11 10.500 8.500 10.500S3.500 9.500 1 7.500z" fill="#f0e6c8" stroke="#b0641e" stroke-width="1.3"/><circle cx="8.300" cy="6.500" r="3.200" fill="#4e9a2a" stroke="#2c5c14" stroke-width=".8"/><circle cx="8.300" cy="6.500" r="1.300" fill="#142808"/></g><path d="M3.500 11L8 6.500l4.500 4.500" stroke="#111" stroke-width="1.300" fill="none"/><path d="M4.500 10.500v5h7v-5L8 7.500z" fill="#fff" stroke="#111" stroke-width="1"/><rect x="7" y="12" width="2" height="3.500" fill="#111"/><rect x="2.500" y="6" width="2" height="2" fill="#d01818"/></svg>
<svg width="16" height="16" viewBox="0 0 16 16" style="left:469px;top:144px;overflow:visible"><g transform="translate(0,-1)"><path d="M1 7.500C3.500 3.500 6 2.500 8.500 2.500S13.500 4 15.500 7C13 9.500 11 10.500 8.500 10.500S3.500 9.500 1 7.500z" fill="#f0e6c8" stroke="#b0641e" stroke-width="1.3"/><circle cx="8.300" cy="6.500" r="3.200" fill="#4e9a2a" stroke="#2c5c14" stroke-width=".8"/><circle cx="8.300" cy="6.500" r="1.300" fill="#142808"/></g><path d="M3.500 10.500h9v5h-2.500l-2-2.500-2 2.500h-2.500z" fill="#e8b400" stroke="#6a4a00" stroke-width=".8"/><path d="M5.500 14v-2.500l5 2.500v-2.500" stroke="#6a4a00" stroke-width="1" fill="none"/></svg>
<svg width="16" height="16" viewBox="0 0 16 16" style="left:492px;top:144px;overflow:visible"><g transform="translate(0,-1)"><path d="M1 7.500C3.500 3.500 6 2.500 8.500 2.500S13.500 4 15.500 7C13 9.500 11 10.500 8.500 10.500S3.500 9.500 1 7.500z" fill="#f0e6c8" stroke="#b0641e" stroke-width="1.3"/><circle cx="8.300" cy="6.500" r="3.200" fill="#4e9a2a" stroke="#2c5c14" stroke-width=".8"/><circle cx="8.300" cy="6.500" r="1.300" fill="#142808"/></g><path d="M3 11h10l-5 4.500z" fill="#1a56e8"/><path d="M4 11h8" stroke="#8ab4ff" stroke-width="1"/></svg>
<div class="sep" style="left:515px;top:143px;width:1px;height:18px;"></div>
<svg width="16" height="16" viewBox="0 0 16 16" style="left:521px;top:144px;overflow:visible"><g transform="translate(1,-1)"><path d="M1 7.500C3.500 3.500 6 2.500 8.500 2.500S13.500 4 15.500 7C13 9.500 11 10.500 8.500 10.500S3.500 9.500 1 7.500z" fill="#f0e6c8" stroke="#b0641e" stroke-width="1.3"/><circle cx="8.300" cy="6.500" r="3.200" fill="#4e9a2a" stroke="#2c5c14" stroke-width=".8"/><circle cx="8.300" cy="6.500" r="1.300" fill="#142808"/></g><path d="M0.500 15.500l5-5M5.500 10.500v4M5.500 10.500h-4" stroke="#111" stroke-width="1.800" fill="none"/><path d="M7.500 10l3-1.500 4.500 1v4.500l-3 1.500-4.500-1z" fill="#dfe8e8" stroke="#3a5a5a" stroke-width=".9"/><path d="M7.500 10l4.500 1 3-1.500M12 11v4.500" stroke="#3a5a5a" stroke-width=".8" fill="none"/></svg>
<svg width="6" height="3" style="left:543px;top:151px"><path d="M0 0h6L3 3z" fill="#000"/></svg>
<div class="sep" style="left:555px;top:143px;width:1px;height:18px;"></div>
<svg width="16" height="16" viewBox="0 0 16 16" style="left:560px;top:144px;overflow:visible"><path d="M14.500 1.500L9 8" stroke="#111" stroke-width="4" stroke-linecap="round"/><path d="M13.500 2.500L10 6.500" stroke="#666" stroke-width="1.200"/><path d="M9.500 7.500L3 14" stroke="#e8e800" stroke-width="4.500" stroke-linecap="round"/><path d="M8 8l-5 5" stroke="#ffff90" stroke-width="1.500"/></svg>
<svg width="16" height="16" viewBox="0 0 16 16" style="left:584px;top:144px;overflow:visible"><path d="M14 1.500L5.500 11" stroke="#e81818" stroke-width="4.200" stroke-linecap="round"/><path d="M5 9.500L2 14.500l5-2.500z" fill="#f0c8a0" stroke="#e81818" stroke-width=".8"/><path d="M2 14.500l1.500-.7-.8-.8z" fill="#111"/></svg>
<svg width="16" height="16" viewBox="0 0 16 16" style="left:607px;top:144px;overflow:visible"><text x="3.500" y="5" font-size="5.500" font-weight="bold" text-anchor="middle" font-family="Liberation Sans,sans-serif" fill="#000">A</text><text x="13" y="5" font-size="5.500" font-weight="bold" text-anchor="middle" font-family="Liberation Sans,sans-serif" fill="#000">B</text><path d="M1.500 7.500h13M1.500 6v3M14.500 6v3M3 6.500l-1.500 1 1.500 1M13 6.500l1.500 1-1.500 1" stroke="#111" stroke-width="1" fill="none"/><rect x="0.500" y="10.500" width="15" height="4.500" fill="#e8a010" stroke="#5a3c00" stroke-width="1"/><path d="M3 10.500v2M5.500 10.500v2.500M8 10.500v2M10.500 10.500v2.500M13 10.500v2" stroke="#5a3c00" stroke-width=".8"/></svg>
<div class="sep" style="left:630px;top:143px;width:1px;height:18px;"></div>
<svg width="16" height="16" viewBox="0 0 16 16" style="left:636px;top:144px;overflow:visible"><circle cx="7.500" cy="7.500" r="6.800" fill="#2a3cdc" stroke="#1a2aa8" stroke-width=".8"/><path d="M1 7.500h13M7.500 1v13M2.500 4c3 1.500 7 1.500 10 0M2.500 11c3-1.500 7-1.500 10 0M7.500 1c-4 3-4 10 0 13M7.500 1c4 3 4 10 0 13" stroke="#dfe6ff" stroke-width=".8" fill="none"/><path d="M6 10.500h10l-5 5z" fill="#111"/></svg>
<div class="tb" style="left:675px;top:140px;width:47px;height:25px;"></div>
<div class="grip" style="left:678px;top:145px;width:2px;height:14px;"></div>
<div class="ov" style="left:711px;top:140px;width:11px;height:25px;"><svg width="11" height="25" style="left:0;top:0"><path d="M3 13.5h5" stroke="#000" stroke-width="1"/><path d="M3 16h5l-2.500 3z" fill="#000"/><path d="M4 14.5h5" stroke="#fff" stroke-width="1" opacity=".8"/></svg></div>
<svg width="16" height="16" viewBox="0 0 16 16" style="left:686px;top:144px;overflow:visible"><circle cx="7" cy="7.500" r="6.800" fill="#1a2ea8" stroke="#0a0a0a" stroke-width="1"/><path d="M2 4c2-2 4-2.500 6-2 1 2-1 3-2 4s-1 3-3 3c-1-1-2-3-1-5zM9 2.500c2 .5 4 2 4.500 4-1 1-3 1-4-1-.5-1-1-2-.5-3zM2 10c1 1 3 2 4 3.500-2 0-3.500-1.500-4-3.500z" fill="#3f9a34"/><path d="M7.500 9.500h3l1 1.500h4v4.500h-8z" fill="#ffee00" stroke="#111" stroke-width=".9"/><path d="M9.500 13l1 1 1-1 1 1" stroke="#7a6a00" stroke-width=".7" fill="none"/></svg>
<div class="tb" style="left:725px;top:140px;width:47px;height:25px;"></div>
<div class="grip" style="left:728px;top:145px;width:2px;height:14px;"></div>
<div class="ov" style="left:761px;top:140px;width:11px;height:25px;"><svg width="11" height="25" style="left:0;top:0"><path d="M3 13.5h5" stroke="#000" stroke-width="1"/><path d="M3 16h5l-2.500 3z" fill="#000"/><path d="M4 14.5h5" stroke="#fff" stroke-width="1" opacity=".8"/></svg></div>
<svg width="16" height="16" viewBox="0 0 16 16" style="left:736px;top:144px;overflow:visible"><rect x="0" y="0" width="16" height="16" fill="#1a3468"/><circle cx="7" cy="7.500" r="6.500" fill="#3a6ab8"/><path d="M2 5c2-2 5-3 8-2-1 2-3 2-4 4s1 4-1 5c-2-1-3.500-4-3-7z" fill="#a8c4e8" opacity=".8"/><path d="M9 3.500h3v6h2.500l-4 5-4-5H9z" fill="#0a0a14"/></svg>
<svg width="822" height="617" viewBox="0 0 822 617" style="left:246px;top:166px;background:#000"><defs><clipPath id="gclip"><circle cx="410.0" cy="309.0" r="183.0"/></clipPath><filter id="gb1" filterUnits="userSpaceOnUse" x="0" y="0" width="822" height="617"><feGaussianBlur stdDeviation="9" color-interpolation-filters="sRGB"/></filter><filter id="gb2" filterUnits="userSpaceOnUse" x="0" y="0" width="822" height="617"><feGaussianBlur stdDeviation="3.500" color-interpolation-filters="sRGB"/></filter><filter id="gb4" filterUnits="userSpaceOnUse" x="0" y="0" width="822" height="617"><feGaussianBlur stdDeviation="6" color-interpolation-filters="sRGB"/></filter><filter id="gb3" filterUnits="userSpaceOnUse" x="0" y="0" width="822" height="617"><feGaussianBlur stdDeviation="1.200" color-interpolation-filters="sRGB"/></filter><radialGradient id="gocean" cx="370.0" cy="309.0" r="233.0" gradientUnits="userSpaceOnUse"><stop offset="0" stop-color="#1b6a8e"/><stop offset=".6" stop-color="#1a688c"/><stop offset="1" stop-color="#155a7c"/></radialGradient><radialGradient id="glimb" cx="410.0" cy="309.0" r="183.0" gradientUnits="userSpaceOnUse"><stop offset="0" stop-color="#000" stop-opacity="0"/><stop offset=".8" stop-color="#000" stop-opacity="0"/><stop offset=".93" stop-color="#8cc8ff" stop-opacity=".04"/><stop offset="1" stop-color="#8cc8ff" stop-opacity=".38"/></radialGradient></defs><circle cx="92.8" cy="2.4" r="0.95" fill="#fff" opacity="0.8"/><circle cx="267.0" cy="2.4" r="0.95" fill="#fff" opacity="0.8"/><circle cx="170.6" cy="21.9" r="1.35" fill="#fff" opacity="0.92"/><circle cx="221.5" cy="19.5" r="0.95" fill="#fff" opacity="0.8"/><circle cx="129.9" cy="29.9" r="1.35" fill="#fff" opacity="0.92"/><circle cx="163.1" cy="32.9" r="1.35" fill="#fff" opacity="0.92"/><circle cx="213.7" cy="36.8" r="1.35" fill="#fff" opacity="0.92"/><circle cx="79.0" cy="45.2" r="1.35" fill="#fff" opacity="0.92"/><circle cx="232.6" cy="54.8" r="0.95" fill="#fff" opacity="0.8"/><circle cx="379.0" cy="53.9" r="0.95" fill="#fff" opacity="0.8"/><circle cx="189.2" cy="79.6" r="1.35" fill="#fff" opacity="0.92"/><circle cx="210.1" cy="80.8" r="1.35" fill="#fff" opacity="0.92"/><circle cx="40.4" cy="97.9" r="1.35" fill="#fff" opacity="0.92"/><circle cx="270.9" cy="104.2" r="0.95" fill="#fff" opacity="0.8"/><circle cx="374.5" cy="100.3" r="1.35" fill="#fff" opacity="0.92"/><circle cx="392.1" cy="102.4" r="0.95" fill="#fff" opacity="0.8"/><circle cx="104.2" cy="151.2" r="0.95" fill="#fff" opacity="0.8"/><circle cx="174.5" cy="176.6" r="0.95" fill="#fff" opacity="0.8"/><circle cx="179.9" cy="179.6" r="0.95" fill="#fff" opacity="0.8"/><circle cx="234.7" cy="180.8" r="0.95" fill="#fff" opacity="0.8"/><circle cx="165.8" cy="204.8" r="0.95" fill="#fff" opacity="0.8"/><circle cx="38.9" cy="261.0" r="0.95" fill="#fff" opacity="0.8"/><circle cx="158.4" cy="271.8" r="0.95" fill="#fff" opacity="0.8"/><circle cx="194.6" cy="271.8" r="1.35" fill="#fff" opacity="0.92"/><circle cx="79.9" cy="300.5" r="0.95" fill="#fff" opacity="0.8"/><circle cx="76.0" cy="304.4" r="0.95" fill="#fff" opacity="0.8"/><circle cx="41.6" cy="305.3" r="0.95" fill="#fff" opacity="0.8"/><circle cx="621.4" cy="2.4" r="0.95" fill="#fff" opacity="0.8"/><circle cx="791.8" cy="0.6" r="0.95" fill="#fff" opacity="0.8"/><circle cx="528.0" cy="14.4" r="0.95" fill="#fff" opacity="0.8"/><circle cx="565.8" cy="10.2" r="0.95" fill="#fff" opacity="0.8"/><circle cx="489.1" cy="35.3" r="0.95" fill="#fff" opacity="0.8"/><circle cx="476.9" cy="47.3" r="1.8" fill="#fff" opacity="1"/><circle cx="791.8" cy="48.2" r="0.95" fill="#fff" opacity="0.8"/><circle cx="734.0" cy="68.0" r="0.95" fill="#fff" opacity="0.8"/><circle cx="660.4" cy="75.4" r="0.95" fill="#fff" opacity="0.8"/><circle cx="466.4" cy="76.9" r="0.95" fill="#fff" opacity="0.8"/><circle cx="498.7" cy="81.1" r="0.95" fill="#fff" opacity="0.8"/><circle cx="503.5" cy="82.9" r="0.95" fill="#fff" opacity="0.8"/><circle cx="588.8" cy="85.6" r="0.95" fill="#fff" opacity="0.8"/><circle cx="565.8" cy="92.5" r="0.95" fill="#fff" opacity="0.8"/><circle cx="814.5" cy="85.9" r="0.95" fill="#fff" opacity="0.8"/><circle cx="712.1" cy="97.0" r="1.35" fill="#fff" opacity="0.92"/><circle cx="508.3" cy="107.8" r="0.95" fill="#fff" opacity="0.8"/><circle cx="421.5" cy="110.8" r="0.95" fill="#fff" opacity="0.8"/><circle cx="772.3" cy="125.4" r="0.95" fill="#fff" opacity="0.8"/><circle cx="743.0" cy="132.6" r="0.95" fill="#fff" opacity="0.8"/><circle cx="552.3" cy="138.9" r="0.95" fill="#fff" opacity="0.8"/><circle cx="812.1" cy="136.5" r="0.95" fill="#fff" opacity="0.8"/><circle cx="600.2" cy="147.9" r="0.95" fill="#fff" opacity="0.8"/><circle cx="598.1" cy="151.2" r="1.35" fill="#fff" opacity="0.92"/><circle cx="811.2" cy="147.6" r="0.95" fill="#fff" opacity="0.8"/><circle cx="695.4" cy="152.1" r="0.95" fill="#fff" opacity="0.8"/><circle cx="678.0" cy="162.8" r="0.95" fill="#fff" opacity="0.8"/><circle cx="706.5" cy="166.4" r="0.95" fill="#fff" opacity="0.8"/><circle cx="778.0" cy="165.2" r="0.95" fill="#fff" opacity="0.8"/><circle cx="820.5" cy="160.4" r="0.95" fill="#fff" opacity="0.8"/><circle cx="812.7" cy="170.9" r="0.95" fill="#fff" opacity="0.8"/><circle cx="701.1" cy="184.1" r="0.95" fill="#fff" opacity="0.8"/><circle cx="585.8" cy="211.9" r="0.95" fill="#fff" opacity="0.8"/><circle cx="603.2" cy="218.2" r="1.35" fill="#fff" opacity="0.92"/><circle cx="636.4" cy="218.8" r="1.35" fill="#fff" opacity="0.92"/><circle cx="630.4" cy="238.0" r="0.95" fill="#fff" opacity="0.8"/><circle cx="640.0" cy="245.5" r="0.95" fill="#fff" opacity="0.8"/><circle cx="801.9" cy="232.0" r="1.35" fill="#fff" opacity="0.92"/><circle cx="758.8" cy="239.2" r="0.95" fill="#fff" opacity="0.8"/><circle cx="778.9" cy="252.0" r="0.95" fill="#fff" opacity="0.8"/><circle cx="795.1" cy="274.2" r="1.35" fill="#fff" opacity="0.92"/><circle cx="644.8" cy="293.4" r="0.95" fill="#fff" opacity="0.8"/><circle cx="778.9" cy="294.6" r="0.95" fill="#fff" opacity="0.8"/><circle cx="702.9" cy="305.9" r="0.95" fill="#fff" opacity="0.8"/><circle cx="24.2" cy="321.6" r="1.35" fill="#fff" opacity="0.92"/><circle cx="30.5" cy="365.9" r="1.35" fill="#fff" opacity="0.92"/><circle cx="81.7" cy="369.5" r="0.95" fill="#fff" opacity="0.8"/><circle cx="213.7" cy="364.1" r="1.35" fill="#fff" opacity="0.92"/><circle cx="186.5" cy="384.4" r="1.35" fill="#fff" opacity="0.92"/><circle cx="46.4" cy="413.2" r="0.95" fill="#fff" opacity="0.8"/><circle cx="208.6" cy="426.0" r="1.35" fill="#fff" opacity="0.92"/><circle cx="36.2" cy="437.7" r="0.95" fill="#fff" opacity="0.8"/><circle cx="133.2" cy="434.4" r="0.95" fill="#fff" opacity="0.8"/><circle cx="143.4" cy="444.3" r="0.95" fill="#fff" opacity="0.8"/><circle cx="150.6" cy="471.8" r="0.95" fill="#fff" opacity="0.8"/><circle cx="88.3" cy="479.3" r="0.95" fill="#fff" opacity="0.8"/><circle cx="254.4" cy="488.9" r="0.95" fill="#fff" opacity="0.8"/><circle cx="297.5" cy="495.8" r="0.95" fill="#fff" opacity="0.8"/><circle cx="356.2" cy="502.4" r="0.95" fill="#fff" opacity="0.8"/><circle cx="76.3" cy="507.2" r="0.95" fill="#fff" opacity="0.8"/><circle cx="223.9" cy="547.3" r="1.35" fill="#fff" opacity="0.92"/><circle cx="283.8" cy="552.4" r="0.95" fill="#fff" opacity="0.8"/><circle cx="399.6" cy="544.3" r="1.35" fill="#fff" opacity="0.92"/><circle cx="390.3" cy="552.1" r="0.95" fill="#fff" opacity="0.8"/><circle cx="7.5" cy="566.4" r="1.35" fill="#fff" opacity="0.92"/><circle cx="283.5" cy="569.1" r="0.95" fill="#fff" opacity="0.8"/><circle cx="355.6" cy="570.9" r="1.8" fill="#fff" opacity="1"/><circle cx="231.1" cy="614.9" r="0.95" fill="#fff" opacity="0.8"/><circle cx="729.2" cy="310.5" r="0.95" fill="#fff" opacity="0.8"/><circle cx="706.5" cy="326.4" r="0.95" fill="#fff" opacity="0.8"/><circle cx="784.6" cy="330.6" r="0.95" fill="#fff" opacity="0.8"/><circle cx="615.2" cy="343.4" r="0.95" fill="#fff" opacity="0.8"/><circle cx="670.2" cy="359.3" r="1.35" fill="#fff" opacity="0.92"/><circle cx="812.4" cy="359.3" r="0.95" fill="#fff" opacity="0.8"/><circle cx="775.9" cy="372.5" r="0.95" fill="#fff" opacity="0.8"/><circle cx="749.3" cy="387.7" r="0.95" fill="#fff" opacity="0.8"/><circle cx="660.1" cy="394.6" r="1.35" fill="#fff" opacity="0.92"/><circle cx="736.7" cy="402.1" r="1.35" fill="#fff" opacity="0.92"/><circle cx="701.4" cy="404.2" r="0.95" fill="#fff" opacity="0.8"/><circle cx="705.6" cy="411.4" r="0.95" fill="#fff" opacity="0.8"/><circle cx="691.2" cy="416.8" r="0.95" fill="#fff" opacity="0.8"/><circle cx="570.8" cy="417.4" r="0.95" fill="#fff" opacity="0.8"/><circle cx="625.0" cy="421.3" r="1.35" fill="#fff" opacity="0.92"/><circle cx="599.3" cy="430.5" r="0.95" fill="#fff" opacity="0.8"/><circle cx="556.5" cy="431.4" r="0.95" fill="#fff" opacity="0.8"/><circle cx="707.4" cy="447.0" r="2.5" fill="#fff" opacity="1"/><circle cx="657.7" cy="449.1" r="1.35" fill="#fff" opacity="0.92"/><circle cx="683.4" cy="451.5" r="0.95" fill="#fff" opacity="0.8"/><circle cx="523.6" cy="456.3" r="0.95" fill="#fff" opacity="0.8"/><circle cx="783.4" cy="468.3" r="0.95" fill="#fff" opacity="0.8"/><circle cx="543.6" cy="477.5" r="1.35" fill="#fff" opacity="0.92"/><circle cx="739.1" cy="478.1" r="1.35" fill="#fff" opacity="0.92"/><circle cx="811.2" cy="480.8" r="1.8" fill="#fff" opacity="1"/><circle cx="497.2" cy="482.9" r="0.95" fill="#fff" opacity="0.8"/><circle cx="483.1" cy="487.7" r="0.95" fill="#fff" opacity="0.8"/><circle cx="468.2" cy="486.5" r="0.95" fill="#fff" opacity="0.8"/><circle cx="668.4" cy="486.2" r="0.95" fill="#fff" opacity="0.8"/><circle cx="745.4" cy="486.8" r="0.95" fill="#fff" opacity="0.8"/><circle cx="743.3" cy="497.9" r="1.35" fill="#fff" opacity="0.92"/><circle cx="657.4" cy="505.7" r="1.35" fill="#fff" opacity="0.92"/><circle cx="666.3" cy="508.1" r="1.35" fill="#fff" opacity="0.92"/><circle cx="659.8" cy="511.1" r="0.95" fill="#fff" opacity="0.8"/><circle cx="587.6" cy="514.1" r="0.95" fill="#fff" opacity="0.8"/><circle cx="420.6" cy="513.2" r="0.95" fill="#fff" opacity="0.8"/><circle cx="493.3" cy="535.0" r="1.35" fill="#fff" opacity="0.92"/><circle cx="439.1" cy="537.7" r="0.95" fill="#fff" opacity="0.8"/><circle cx="579.2" cy="546.4" r="0.95" fill="#fff" opacity="0.8"/><circle cx="519.1" cy="546.4" r="0.95" fill="#fff" opacity="0.8"/><circle cx="522.4" cy="550.6" r="0.95" fill="#fff" opacity="0.8"/><circle cx="510.4" cy="549.1" r="1.35" fill="#fff" opacity="0.92"/><circle cx="491.8" cy="556.6" r="1.35" fill="#fff" opacity="0.92"/><circle cx="565.5" cy="557.2" r="1.35" fill="#fff" opacity="0.92"/><circle cx="654.4" cy="557.8" r="0.95" fill="#fff" opacity="0.8"/><circle cx="604.1" cy="570.3" r="0.95" fill="#fff" opacity="0.8"/><circle cx="622.6" cy="571.5" r="1.35" fill="#fff" opacity="0.92"/><circle cx="746.9" cy="569.4" r="1.35" fill="#fff" opacity="0.92"/><circle cx="430.5" cy="580.8" r="1.8" fill="#fff" opacity="1"/><circle cx="449.3" cy="577.5" r="0.95" fill="#fff" opacity="0.8"/><circle cx="496.3" cy="579.6" r="0.95" fill="#fff" opacity="0.8"/><circle cx="556.2" cy="579.9" r="1.35" fill="#fff" opacity="0.92"/><circle cx="761.2" cy="579.9" r="1.35" fill="#fff" opacity="0.92"/><circle cx="660.7" cy="582.0" r="1.35" fill="#fff" opacity="0.92"/><circle cx="555.9" cy="587.4" r="1.35" fill="#fff" opacity="0.92"/><circle cx="475.1" cy="591.0" r="1.35" fill="#fff" opacity="0.92"/><circle cx="527.7" cy="590.7" r="0.95" fill="#fff" opacity="0.8"/><circle cx="645.4" cy="589.2" r="0.95" fill="#fff" opacity="0.8"/><circle cx="593.0" cy="595.5" r="0.95" fill="#fff" opacity="0.8"/><circle cx="629.8" cy="598.5" r="0.95" fill="#fff" opacity="0.8"/><circle cx="434.9" cy="600.9" r="1.35" fill="#fff" opacity="0.92"/><circle cx="640.3" cy="603.6" r="0.95" fill="#fff" opacity="0.8"/><circle cx="545.4" cy="604.5" r="0.95" fill="#fff" opacity="0.8"/><circle cx="456.5" cy="608.9" r="0.95" fill="#fff" opacity="0.8"/><circle cx="582.2" cy="608.0" r="0.95" fill="#fff" opacity="0.8"/><circle cx="573.5" cy="614.9" r="1.35" fill="#fff" opacity="0.92"/><circle cx="598.1" cy="616.4" r="0.95" fill="#fff" opacity="0.8"/><path fill-rule="evenodd" fill="#2b2b2b" d="M684.100 595.700L713.300 555.400L742.400 595.700ZM692.800 595.700L713.300 565.600L716.500 571.500Q704.500 578 703.600 595.700ZM711 589.600Q713 581 721.300 577.600L731 589.600Z"/><path d="M384.4 126.8L378.0 127.8L371.7 129.0L365.5 130.5L359.3 132.1L353.1 134.0L347.1 136.1L341.1 138.4L335.2 140.9L329.3 143.6L323.6 146.5L318.0 149.7L312.5 153.0L307.1 156.5L301.8 160.1L296.7 164.0L291.7 168.0L286.9 172.3L282.2 176.6L277.6 181.2L273.3 185.9L269.0 190.7L265.0 195.7L261.1 200.8L257.5 206.1L254.0 211.5L250.7 217.0L247.5 222.6L244.6 228.3L241.9 234.2L239.4 240.1L237.1 246.1L235.0 252.1L233.1 258.3L231.5 264.5L230.0 270.7L228.8 277.0L227.8 283.4L227.0 289.8L226.4 296.2L226.1 302.6L226.0 309.0L226.1 315.4L226.4 321.8L227.0 328.2L227.8 334.6L228.8 341.0L230.0 347.3L231.5 353.5L233.1 359.7L235.0 365.9L237.1 371.9L239.4 377.9L241.9 383.8L244.6 389.7L247.5 395.4L250.7 401.0L254.0 406.5L257.5 411.9L261.1 417.2L265.0 422.3L269.0 427.3L273.3 432.1L277.6 436.8L282.2 441.4L286.9 445.7L291.7 450.0L296.7 454.0L301.8 457.9L307.1 461.5L312.5 465.0L318.0 468.3L323.6 471.5L329.3 474.4L335.2 477.1L341.1 479.6L347.1 481.9L353.1 484.0L359.3 485.9L365.5 487.5L371.7 489.0L378.0 490.2L384.4 491.2L390.8 492.0L397.2 492.6L403.6 492.9L410.0 493.0L416.4 492.9L422.8 492.6L429.2 492.0L435.6 491.2L442.0 490.2L448.3 489.0L454.5 487.5L460.7 485.9L466.9 484.0L472.9 481.9L478.9 479.6L484.8 477.1L490.7 474.4L496.4 471.5L502.0 468.3L507.5 465.0L512.9 461.5L518.2 457.9L523.3 454.0L528.3 450.0L533.1 445.7L537.8 441.4L542.4 436.8L546.7 432.1L551.0 427.3" fill="none" stroke="#5aa6e6" stroke-width="2.500" opacity=".8" filter="url(#gb3)"/><g clip-path="url(#gclip)"><circle cx="410.0" cy="309.0" r="185.0" fill="url(#gocean)"/><g filter="url(#gb1)"><ellipse cx="375" cy="262" rx="45" ry="60" fill="#0f4a6c" opacity="0.9" transform="rotate(0 375 262)"/><ellipse cx="471" cy="318" rx="70" ry="90" fill="#0e4868" opacity="0.8" transform="rotate(0 471 318)"/><ellipse cx="336" cy="226" rx="18" ry="30" fill="#2b83a6" opacity="0.9" transform="rotate(20 336 226)"/><ellipse cx="282" cy="317" rx="30" ry="30" fill="#2a80a3" opacity="0.8" transform="rotate(0 282 317)"/><ellipse cx="296" cy="284" rx="22" ry="26" fill="#1b6b8e" opacity="0.8" transform="rotate(0 296 284)"/><ellipse cx="376" cy="382" rx="40" ry="14" fill="#2a80a3" opacity="0.85" transform="rotate(0 376 382)"/><ellipse cx="246" cy="293" rx="20" ry="50" fill="#1b6488" opacity="0.8" transform="rotate(0 246 293)"/><ellipse cx="293" cy="418" rx="30" ry="50" fill="#14587c" opacity="0.8" transform="rotate(0 293 418)"/><ellipse cx="463" cy="439" rx="40" ry="50" fill="#135474" opacity="0.8" transform="rotate(0 463 439)"/></g><clipPath id="glclip"><path d="M321.5 145.4L326.0 143.1L330.3 140.9L334.5 139.0L330.4 140.9L326.5 142.8L322.8 144.7L319.3 146.6L327.2 142.4L334.9 138.9L330.0 141.1L329.1 141.5L329.4 141.4L327.9 142.1L326.7 142.7L333.9 139.3L332.1 140.1L326.0 143.1L323.1 144.6L320.3 146.1L318.3 147.2L316.4 148.2L320.7 145.9L319.5 146.5L324.8 143.6L323.7 144.3L322.6 144.8L321.7 145.3L323.1 144.5L324.7 143.7L326.5 142.8L330.1 141.0L335.1 138.7L339.1 137.0L341.8 135.9L338.7 137.2L335.8 138.4L330.1 141.0L324.8 143.7L323.8 144.2L326.5 142.8L335.0 138.8L336.0 138.3L337.2 137.8L343.8 135.2L348.0 133.6L347.5 133.8L347.2 133.9L349.4 133.2L351.8 132.3L353.0 132.0L354.4 131.5L354.1 131.6L353.8 131.7L353.6 131.7L351.7 132.4L349.9 133.0L348.1 133.6L345.5 134.5L343.0 135.5L340.6 136.4L338.2 137.4L335.8 138.4L333.3 139.6L334.6 139.0L336.0 138.4L337.5 137.7L331.0 140.6L330.0 141.1L329.0 141.5L330.5 140.9L332.1 140.1L339.3 136.9L338.9 137.1L338.5 137.3L338.2 137.4L338.0 137.5L337.8 137.6L338.2 137.4L338.7 137.2L339.3 137.0L339.0 137.1L338.9 137.1L338.7 137.2L338.7 137.2L346.2 134.3L352.7 132.1L351.7 135.5L350.0 136.1L339.9 140.1L350.8 135.9L353.0 135.3L355.2 134.6L358.5 133.7L361.8 132.8L365.1 131.9L366.6 131.6L368.1 131.3L369.7 131.0L371.3 130.8L373.0 130.5L375.4 130.0L377.7 129.5L380.0 129.1L379.3 129.6L378.8 130.0L378.6 130.6L378.6 131.1L379.9 131.3L381.3 131.4L382.9 131.6L385.0 131.5L387.1 131.4L389.3 131.3L390.5 132.9L392.9 132.5L395.2 132.2L397.5 131.8L399.8 131.5L401.9 131.2L404.0 131.4L406.1 131.6L408.2 131.8L410.5 132.1L412.8 132.3L415.2 132.5L417.6 132.7L420.0 132.9L422.5 133.2L425.1 133.4L427.3 133.4L429.5 133.3L431.6 133.3L433.7 133.3L435.7 133.2L438.1 133.5L440.5 133.7L442.8 133.9L445.2 134.2L447.5 134.5L450.7 135.2L453.9 135.9L457.1 136.6L460.4 137.4L463.6 138.2L464.2 140.0L461.9 139.8L459.4 139.5L457.0 139.3L454.4 139.1L456.7 142.4L455.0 143.6L453.1 144.8L450.8 146.1L448.1 147.2L445.0 148.3L441.8 149.5L443.2 155.1L440.0 159.2L436.3 163.6L434.0 159.2L431.8 155.2L429.7 151.3L431.6 147.4L433.0 143.7L429.7 145.3L426.1 147.0L422.5 147.0L418.9 147.1L415.3 147.1L411.6 147.2L407.9 147.2L404.3 147.3L400.4 149.6L396.3 151.9L391.8 154.4L387.2 157.0L391.2 157.9L395.3 158.9L399.6 159.8L398.0 165.4L396.4 171.4L389.4 177.2L381.9 183.4L376.3 184.9L370.7 186.4L360.8 193.8L361.5 199.7L362.4 205.9L352.6 210.9L353.4 201.4L352.3 195.4L342.5 197.1L345.3 192.6L339.4 194.9L333.6 197.3L334.5 201.7L343.3 203.1L333.2 209.5L334.6 219.2L335.9 226.0L331.4 232.9L326.9 240.0L319.8 245.3L312.8 250.6L304.9 254.1L294.6 257.5L289.8 255.5L283.2 262.5L284.9 269.9L286.9 277.5L287.4 290.8L279.2 297.8L275.0 302.3L275.4 297.4L270.2 289.4L266.5 283.4L263.1 292.4L263.5 299.9L264.0 307.4L270.6 319.4L271.9 328.8L264.8 322.3L263.4 311.0L259.6 303.1L260.4 295.8L261.5 288.5L261.7 280.2L262.2 272.0L256.3 273.1L257.8 262.5L257.0 253.5L254.5 251.5L249.4 254.4L245.5 259.1L241.0 266.2L237.1 273.3L235.6 280.0L234.4 286.8L231.3 296.2L231.6 285.5L232.2 278.5L233.0 271.6L234.2 264.8L235.9 258.3L237.9 251.8L237.1 251.3L238.5 246.4L240.7 239.9L238.2 237.6L238.8 236.4L239.3 235.1L239.9 233.8L242.0 229.2L242.7 227.8L243.4 226.3L247.5 218.4L248.0 217.6L242.4 228.4L240.1 233.4L238.4 237.3L240.6 232.1L238.0 238.2L235.9 243.6L232.4 253.6L230.9 258.9L230.4 260.8L229.7 263.2L229.2 265.5L228.6 267.7L228.9 266.8L231.7 256.1L234.8 246.6L238.4 237.1L241.7 229.9L245.2 222.7L249.1 215.7L251.6 211.5L253.5 208.4L255.7 205.1L254.9 206.3L260.9 197.8L264.1 193.6L264.6 193.0L265.3 192.2L266.7 190.4L269.3 187.3L274.6 181.5L277.4 178.6L277.0 178.9L276.8 179.2L276.6 179.4L273.9 182.3L272.5 183.7L271.3 185.1L279.4 176.6L281.6 174.4L284.5 171.7L284.4 171.8L284.3 171.9L281.8 174.2L285.5 170.8L288.2 168.4L284.0 172.2L279.9 176.1L277.6 178.4L278.8 177.2L279.8 176.2L280.6 175.4L274.8 181.2L272.5 183.7L277.0 179.0L283.8 172.4L287.6 169.0L293.3 164.2L299.2 159.6L301.9 157.6L302.2 157.4L299.3 159.5L294.1 163.5L290.3 166.6L284.1 172.1L286.3 170.1L283.6 172.6L281.9 174.1L286.6 169.8L294.1 163.5L300.9 158.3L305.0 155.5L305.2 155.3L307.7 153.7L310.4 151.9L308.0 153.5L309.7 152.3L307.5 153.8L305.8 154.9L311.3 151.3L315.7 148.7ZM310.9 413.4L313.6 419.5L316.4 425.3L320.0 431.0L323.6 436.5L326.0 441.5L328.4 446.3L337.2 449.8L343.8 449.6L350.8 449.2L356.4 445.8L364.8 445.0L372.2 444.9L380.6 448.4L386.1 453.2L392.4 449.2L393.8 455.0L400.3 459.4L410.6 461.8L418.6 462.2L429.5 458.7L433.3 450.7L440.4 443.0L443.0 433.7L435.5 424.2L430.5 418.4L421.7 410.9L418.0 406.1L415.3 396.1L408.5 392.8L404.3 381.5L401.5 389.4L401.2 399.7L397.7 404.8L392.1 403.1L384.4 399.0L378.6 396.2L382.8 386.6L376.0 385.7L366.4 382.7L361.2 386.1L357.3 390.4L356.9 395.5L351.6 395.3L345.9 391.6L341.5 396.4L337.5 402.0L333.7 403.9L332.5 408.5L325.1 409.3L318.2 410.6L313.4 412.9ZM414.1 465.6L423.7 465.5L423.8 467.7L421.5 470.4L417.6 470.5L415.5 468.3ZM494.1 444.4L496.2 447.9L498.1 449.8L503.3 449.0L497.5 453.6L490.9 458.6L490.1 458.3L492.5 455.6L490.7 454.7L494.7 451.5L495.6 448.8ZM486.7 457.7L488.6 459.3L483.0 463.3L478.5 465.4L474.9 468.6L469.9 470.3L466.2 470.1L471.5 466.7L478.6 463.4L483.8 460.0ZM358.5 343.6L370.0 343.9L374.2 353.5L383.7 347.8L397.6 350.9L411.5 355.3L417.6 361.6L424.7 364.1L421.5 367.2L427.4 374.4L435.1 379.2L423.6 378.2L417.7 372.9L408.0 374.2L402.2 375.7L394.3 371.4L387.4 372.8L388.3 367.6L382.2 360.1L372.4 356.2L366.6 356.1L362.6 351.4L369.4 349.3L360.5 346.4ZM426.6 361.4L435.2 361.0L441.8 355.8L441.0 360.0L435.2 364.1L427.4 363.2ZM284.9 330.4L287.7 329.6L291.9 326.2L296.4 325.1L302.5 318.7L308.3 311.3L315.3 318.7L311.4 323.1L314.8 334.8L310.6 336.5L307.7 343.8L307.7 353.1L302.1 352.6L297.3 349.2L292.9 349.1L288.2 341.9L285.1 336.0ZM253.2 310.9L257.4 313.0L262.6 323.0L270.9 334.2L273.7 341.9L277.9 347.2L278.3 356.1L275.1 355.6L268.4 348.1L264.2 338.5L259.8 326.2L256.3 319.1ZM277.3 359.5L280.2 357.1L285.8 360.0L292.0 360.2L297.8 363.0L303.5 366.1L304.0 369.7L293.5 367.1L285.0 364.1L280.3 362.0ZM318.5 359.5L321.9 359.8L320.5 350.4L324.9 356.3L329.1 357.7L327.0 351.5L323.3 346.8L330.0 343.0L324.1 342.7L319.5 337.8L322.2 337.2L330.9 338.0L336.1 334.0L334.4 335.9L327.3 335.6L321.5 334.1L318.2 337.0L318.1 342.7L317.2 350.9ZM333.9 378.0L336.9 374.2L345.4 371.8L343.8 373.9L337.3 377.8ZM308.4 369.1L318.0 370.0L324.6 370.3L331.3 370.6L329.8 372.3L318.1 371.4L311.2 371.5ZM345.2 332.4L348.9 334.5L349.0 340.3L347.3 343.3L345.3 338.2ZM347.7 351.8L358.1 352.1L357.1 354.7L349.6 353.7ZM323.9 267.6L329.4 267.7L328.9 275.3L325.7 281.0L327.0 284.9L333.7 287.0L333.4 290.9L328.6 286.9L323.6 286.0L322.2 282.9L321.1 277.1ZM325.6 312.2L331.0 305.7L338.2 301.6L341.6 308.8L340.4 315.4L337.8 317.3L332.5 314.4L329.8 310.4ZM326.4 293.5L330.4 294.7L336.9 291.0L338.4 296.9L334.7 300.7L330.4 303.3L327.7 300.5L326.1 298.5ZM309.8 305.6L317.7 298.2L317.9 295.1L314.3 300.0L309.3 304.4ZM329.4 242.8L332.3 243.6L326.7 254.5L325.1 250.8L326.6 246.1ZM289.8 263.9L292.6 260.7L296.4 261.9L294.1 266.7L290.0 267.2ZM398.9 188.9L400.8 194.4L397.7 199.0L396.8 205.3L394.2 207.9L390.1 209.6L384.7 210.0L380.3 213.7L378.4 210.5L370.5 211.6L365.8 212.3L366.1 210.3L371.1 207.4L380.3 206.9L384.7 202.4L390.0 201.4L394.2 196.1L395.0 191.6ZM395.2 188.7L398.1 185.8L404.3 187.1L410.7 183.3L407.3 181.5L400.4 177.6L399.6 183.0L396.3 184.5L395.3 187.3ZM362.4 214.0L365.7 212.6L367.8 215.6L364.4 221.3L361.9 221.7L361.4 216.6ZM370.3 212.9L375.8 211.2L377.2 212.8L373.3 214.1L370.8 216.2L369.5 214.2ZM401.9 157.1L404.0 159.7L404.6 166.4L407.6 168.7L403.8 173.7L404.6 175.7L401.2 176.3L401.4 171.3L401.6 165.3L401.3 160.9ZM233.8 291.2L234.7 299.4L233.6 303.9L232.7 303.6L233.0 297.0Z"/></clipPath><path d="M321.5 145.4L326.0 143.1L330.3 140.9L334.5 139.0L330.4 140.9L326.5 142.8L322.8 144.7L319.3 146.6L327.2 142.4L334.9 138.9L330.0 141.1L329.1 141.5L329.4 141.4L327.9 142.1L326.7 142.7L333.9 139.3L332.1 140.1L326.0 143.1L323.1 144.6L320.3 146.1L318.3 147.2L316.4 148.2L320.7 145.9L319.5 146.5L324.8 143.6L323.7 144.3L322.6 144.8L321.7 145.3L323.1 144.5L324.7 143.7L326.5 142.8L330.1 141.0L335.1 138.7L339.1 137.0L341.8 135.9L338.7 137.2L335.8 138.4L330.1 141.0L324.8 143.7L323.8 144.2L326.5 142.8L335.0 138.8L336.0 138.3L337.2 137.8L343.8 135.2L348.0 133.6L347.5 133.8L347.2 133.9L349.4 133.2L351.8 132.3L353.0 132.0L354.4 131.5L354.1 131.6L353.8 131.7L353.6 131.7L351.7 132.4L349.9 133.0L348.1 133.6L345.5 134.5L343.0 135.5L340.6 136.4L338.2 137.4L335.8 138.4L333.3 139.6L334.6 139.0L336.0 138.4L337.5 137.7L331.0 140.6L330.0 141.1L329.0 141.5L330.5 140.9L332.1 140.1L339.3 136.9L338.9 137.1L338.5 137.3L338.2 137.4L338.0 137.5L337.8 137.6L338.2 137.4L338.7 137.2L339.3 137.0L339.0 137.1L338.9 137.1L338.7 137.2L338.7 137.2L346.2 134.3L352.7 132.1L351.7 135.5L350.0 136.1L339.9 140.1L350.8 135.9L353.0 135.3L355.2 134.6L358.5 133.7L361.8 132.8L365.1 131.9L366.6 131.6L368.1 131.3L369.7 131.0L371.3 130.8L373.0 130.5L375.4 130.0L377.7 129.5L380.0 129.1L379.3 129.6L378.8 130.0L378.6 130.6L378.6 131.1L379.9 131.3L381.3 131.4L382.9 131.6L385.0 131.5L387.1 131.4L389.3 131.3L390.5 132.9L392.9 132.5L395.2 132.2L397.5 131.8L399.8 131.5L401.9 131.2L404.0 131.4L406.1 131.6L408.2 131.8L410.5 132.1L412.8 132.3L415.2 132.5L417.6 132.7L420.0 132.9L422.5 133.2L425.1 133.4L427.3 133.4L429.5 133.3L431.6 133.3L433.7 133.3L435.7 133.2L438.1 133.5L440.5 133.7L442.8 133.9L445.2 134.2L447.5 134.5L450.7 135.2L453.9 135.9L457.1 136.6L460.4 137.4L463.6 138.2L464.2 140.0L461.9 139.8L459.4 139.5L457.0 139.3L454.4 139.1L456.7 142.4L455.0 143.6L453.1 144.8L450.8 146.1L448.1 147.2L445.0 148.3L441.8 149.5L443.2 155.1L440.0 159.2L436.3 163.6L434.0 159.2L431.8 155.2L429.7 151.3L431.6 147.4L433.0 143.7L429.7 145.3L426.1 147.0L422.5 147.0L418.9 147.1L415.3 147.1L411.6 147.2L407.9 147.2L404.3 147.3L400.4 149.6L396.3 151.9L391.8 154.4L387.2 157.0L391.2 157.9L395.3 158.9L399.6 159.8L398.0 165.4L396.4 171.4L389.4 177.2L381.9 183.4L376.3 184.9L370.7 186.4L360.8 193.8L361.5 199.7L362.4 205.9L352.6 210.9L353.4 201.4L352.3 195.4L342.5 197.1L345.3 192.6L339.4 194.9L333.6 197.3L334.5 201.7L343.3 203.1L333.2 209.5L334.6 219.2L335.9 226.0L331.4 232.9L326.9 240.0L319.8 245.3L312.8 250.6L304.9 254.1L294.6 257.5L289.8 255.5L283.2 262.5L284.9 269.9L286.9 277.5L287.4 290.8L279.2 297.8L275.0 302.3L275.4 297.4L270.2 289.4L266.5 283.4L263.1 292.4L263.5 299.9L264.0 307.4L270.6 319.4L271.9 328.8L264.8 322.3L263.4 311.0L259.6 303.1L260.4 295.8L261.5 288.5L261.7 280.2L262.2 272.0L256.3 273.1L257.8 262.5L257.0 253.5L254.5 251.5L249.4 254.4L245.5 259.1L241.0 266.2L237.1 273.3L235.6 280.0L234.4 286.8L231.3 296.2L231.6 285.5L232.2 278.5L233.0 271.6L234.2 264.8L235.9 258.3L237.9 251.8L237.1 251.3L238.5 246.4L240.7 239.9L238.2 237.6L238.8 236.4L239.3 235.1L239.9 233.8L242.0 229.2L242.7 227.8L243.4 226.3L247.5 218.4L248.0 217.6L242.4 228.4L240.1 233.4L238.4 237.3L240.6 232.1L238.0 238.2L235.9 243.6L232.4 253.6L230.9 258.9L230.4 260.8L229.7 263.2L229.2 265.5L228.6 267.7L228.9 266.8L231.7 256.1L234.8 246.6L238.4 237.1L241.7 229.9L245.2 222.7L249.1 215.7L251.6 211.5L253.5 208.4L255.7 205.1L254.9 206.3L260.9 197.8L264.1 193.6L264.6 193.0L265.3 192.2L266.7 190.4L269.3 187.3L274.6 181.5L277.4 178.6L277.0 178.9L276.8 179.2L276.6 179.4L273.9 182.3L272.5 183.7L271.3 185.1L279.4 176.6L281.6 174.4L284.5 171.7L284.4 171.8L284.3 171.9L281.8 174.2L285.5 170.8L288.2 168.4L284.0 172.2L279.9 176.1L277.6 178.4L278.8 177.2L279.8 176.2L280.6 175.4L274.8 181.2L272.5 183.7L277.0 179.0L283.8 172.4L287.6 169.0L293.3 164.2L299.2 159.6L301.9 157.6L302.2 157.4L299.3 159.5L294.1 163.5L290.3 166.6L284.1 172.1L286.3 170.1L283.6 172.6L281.9 174.1L286.6 169.8L294.1 163.5L300.9 158.3L305.0 155.5L305.2 155.3L307.7 153.7L310.4 151.9L308.0 153.5L309.7 152.3L307.5 153.8L305.8 154.9L311.3 151.3L315.7 148.7ZM310.9 413.4L313.6 419.5L316.4 425.3L320.0 431.0L323.6 436.5L326.0 441.5L328.4 446.3L337.2 449.8L343.8 449.6L350.8 449.2L356.4 445.8L364.8 445.0L372.2 444.9L380.6 448.4L386.1 453.2L392.4 449.2L393.8 455.0L400.3 459.4L410.6 461.8L418.6 462.2L429.5 458.7L433.3 450.7L440.4 443.0L443.0 433.7L435.5 424.2L430.5 418.4L421.7 410.9L418.0 406.1L415.3 396.1L408.5 392.8L404.3 381.5L401.5 389.4L401.2 399.7L397.7 404.8L392.1 403.1L384.4 399.0L378.6 396.2L382.8 386.6L376.0 385.7L366.4 382.7L361.2 386.1L357.3 390.4L356.9 395.5L351.6 395.3L345.9 391.6L341.5 396.4L337.5 402.0L333.7 403.9L332.5 408.5L325.1 409.3L318.2 410.6L313.4 412.9ZM414.1 465.6L423.7 465.5L423.8 467.7L421.5 470.4L417.6 470.5L415.5 468.3ZM494.1 444.4L496.2 447.9L498.1 449.8L503.3 449.0L497.5 453.6L490.9 458.6L490.1 458.3L492.5 455.6L490.7 454.7L494.7 451.5L495.6 448.8ZM486.7 457.7L488.6 459.3L483.0 463.3L478.5 465.4L474.9 468.6L469.9 470.3L466.2 470.1L471.5 466.7L478.6 463.4L483.8 460.0ZM358.5 343.6L370.0 343.9L374.2 353.5L383.7 347.8L397.6 350.9L411.5 355.3L417.6 361.6L424.7 364.1L421.5 367.2L427.4 374.4L435.1 379.2L423.6 378.2L417.7 372.9L408.0 374.2L402.2 375.7L394.3 371.4L387.4 372.8L388.3 367.6L382.2 360.1L372.4 356.2L366.6 356.1L362.6 351.4L369.4 349.3L360.5 346.4ZM426.6 361.4L435.2 361.0L441.8 355.8L441.0 360.0L435.2 364.1L427.4 363.2ZM284.9 330.4L287.7 329.6L291.9 326.2L296.4 325.1L302.5 318.7L308.3 311.3L315.3 318.7L311.4 323.1L314.8 334.8L310.6 336.5L307.7 343.8L307.7 353.1L302.1 352.6L297.3 349.2L292.9 349.1L288.2 341.9L285.1 336.0ZM253.2 310.9L257.4 313.0L262.6 323.0L270.9 334.2L273.7 341.9L277.9 347.2L278.3 356.1L275.1 355.6L268.4 348.1L264.2 338.5L259.8 326.2L256.3 319.1ZM277.3 359.5L280.2 357.1L285.8 360.0L292.0 360.2L297.8 363.0L303.5 366.1L304.0 369.7L293.5 367.1L285.0 364.1L280.3 362.0ZM318.5 359.5L321.9 359.8L320.5 350.4L324.9 356.3L329.1 357.7L327.0 351.5L323.3 346.8L330.0 343.0L324.1 342.7L319.5 337.8L322.2 337.2L330.9 338.0L336.1 334.0L334.4 335.9L327.3 335.6L321.5 334.1L318.2 337.0L318.1 342.7L317.2 350.9ZM333.9 378.0L336.9 374.2L345.4 371.8L343.8 373.9L337.3 377.8ZM308.4 369.1L318.0 370.0L324.6 370.3L331.3 370.6L329.8 372.3L318.1 371.4L311.2 371.5ZM345.2 332.4L348.9 334.5L349.0 340.3L347.3 343.3L345.3 338.2ZM347.7 351.8L358.1 352.1L357.1 354.7L349.6 353.7ZM323.9 267.6L329.4 267.7L328.9 275.3L325.7 281.0L327.0 284.9L333.7 287.0L333.4 290.9L328.6 286.9L323.6 286.0L322.2 282.9L321.1 277.1ZM325.6 312.2L331.0 305.7L338.2 301.6L341.6 308.8L340.4 315.4L337.8 317.3L332.5 314.4L329.8 310.4ZM326.4 293.5L330.4 294.7L336.9 291.0L338.4 296.9L334.7 300.7L330.4 303.3L327.7 300.5L326.1 298.5ZM309.8 305.6L317.7 298.2L317.9 295.1L314.3 300.0L309.3 304.4ZM329.4 242.8L332.3 243.6L326.7 254.5L325.1 250.8L326.6 246.1ZM289.8 263.9L292.6 260.7L296.4 261.9L294.1 266.7L290.0 267.2ZM398.9 188.9L400.8 194.4L397.7 199.0L396.8 205.3L394.2 207.9L390.1 209.6L384.7 210.0L380.3 213.7L378.4 210.5L370.5 211.6L365.8 212.3L366.1 210.3L371.1 207.4L380.3 206.9L384.7 202.4L390.0 201.4L394.2 196.1L395.0 191.6ZM395.2 188.7L398.1 185.8L404.3 187.1L410.7 183.3L407.3 181.5L400.4 177.6L399.6 183.0L396.3 184.5L395.3 187.3ZM362.4 214.0L365.7 212.6L367.8 215.6L364.4 221.3L361.9 221.7L361.4 216.6ZM370.3 212.9L375.8 211.2L377.2 212.8L373.3 214.1L370.8 216.2L369.5 214.2ZM401.9 157.1L404.0 159.7L404.6 166.4L407.6 168.7L403.8 173.7L404.6 175.7L401.2 176.3L401.4 171.3L401.6 165.3L401.3 160.9ZM233.8 291.2L234.7 299.4L233.6 303.9L232.7 303.6L233.0 297.0Z" fill="#4e6b3e" stroke="#3d6a5c" stroke-width="1.200" stroke-linejoin="round"/><g clip-path="url(#glclip)"><g filter="url(#gb2)"><ellipse cx="307" cy="189" rx="34" ry="20" fill="#c2a381" opacity="1" transform="rotate(-35 307 189)"/><ellipse cx="281" cy="201" rx="26" ry="18" fill="#bfa07e" opacity="1" transform="rotate(-40 281 201)"/><ellipse cx="321" cy="195" rx="16" ry="12" fill="#b89b78" opacity="0.9" transform="rotate(-30 321 195)"/><ellipse cx="269" cy="222" rx="14" ry="22" fill="#9a8a6e" opacity="0.9" transform="rotate(-50 269 222)"/><ellipse cx="339" cy="164" rx="40" ry="16" fill="#47603a" opacity="1" transform="rotate(-30 339 164)"/><ellipse cx="359" cy="175" rx="16" ry="12" fill="#5e7545" opacity="0.9" transform="rotate(0 359 175)"/><ellipse cx="306" cy="233" rx="22" ry="18" fill="#4a6a3a" opacity="1" transform="rotate(0 306 233)"/><ellipse cx="323" cy="213" rx="10" ry="12" fill="#7d8658" opacity="0.9" transform="rotate(0 323 213)"/><ellipse cx="271" cy="275" rx="14" ry="24" fill="#46683a" opacity="1" transform="rotate(0 271 275)"/><ellipse cx="262" cy="252" rx="10" ry="16" fill="#3e5e36" opacity="1" transform="rotate(0 262 252)"/><ellipse cx="376" cy="425" rx="40" ry="26" fill="#b99470" opacity="1" transform="rotate(0 376 425)"/><ellipse cx="345" cy="429" rx="20" ry="20" fill="#b08c68" opacity="1" transform="rotate(0 345 429)"/><ellipse cx="418" cy="436" rx="10" ry="30" fill="#6e8050" opacity="0.95" transform="rotate(-15 418 436)"/><ellipse cx="369" cy="393" rx="22" ry="8" fill="#6a7a4a" opacity="0.9" transform="rotate(0 369 393)"/><ellipse cx="334" cy="443" rx="8" ry="8" fill="#7d8658" opacity="0.9" transform="rotate(0 334 443)"/><ellipse cx="300" cy="337" rx="16" ry="16" fill="#35533a" opacity="1" transform="rotate(0 300 337)"/><ellipse cx="394" cy="360" rx="30" ry="9" fill="#3e5e3a" opacity="1" transform="rotate(12 394 360)"/><ellipse cx="265" cy="333" rx="8" ry="26" fill="#3e5e3a" opacity="1" transform="rotate(40 265 333)"/><ellipse cx="393" cy="139" rx="80" ry="20" fill="#3c4c38" opacity="1" transform="rotate(0 393 139)"/></g></g><ellipse cx="424" cy="130.5" rx="38" ry="4.500" fill="#8a9294" opacity=".75" filter="url(#gb3)"/><circle cx="410.0" cy="309.0" r="184.0" fill="url(#glimb)"/><g filter="url(#gb1)"><path d="M372.5 47.8L512.1 553.5L822 553.5L822 47.8Z" fill="#04141e" opacity=".45"/><path d="M386.5 47.8L526.1 553.5L822 553.5L822 47.8Z" fill="#04141e" opacity=".6"/></g><g filter="url(#gb4)"><path d="M400.5 47.8L540.1 553.5L822 553.5L822 47.8Z" fill="#04121a" opacity=".7"/></g></g><path d="M353.5 135.2L347.5 137.3L341.6 139.6L335.7 142.1L329.9 144.8L324.2 147.7L318.6 150.8L313.2 154.1L307.8 157.5L302.6 161.2L297.5 165.0L292.6 169.0L287.7 173.2L283.1 177.6L278.6 182.1L274.2 186.7L270.0 191.6L266.0 196.5L262.2 201.6L258.5 206.8L255.1 212.2L251.8 217.6L248.7 223.2L245.8 228.9L243.1 234.7L240.6 240.6L238.3 246.5L236.2 252.5L234.4 258.6L232.7 264.8L231.3 271.0L230.1 277.3L229.1 283.6L228.3 289.9L227.7 296.3L227.4 302.6L227.3 309.0L227.4 315.4L227.7 321.7L228.3 328.1L229.1 334.4L230.1 340.7L231.3 347.0L232.7 353.2L234.4 359.4L236.2 365.5L238.3 371.5L240.6 377.4L243.1 383.3L245.8 389.1L248.7 394.8L251.8 400.3L255.1 405.8L258.5 411.2L262.2 416.4L266.0 421.5L270.0 426.4L274.2 431.3L278.6 435.9L283.1 440.4L287.7 444.8L292.6 449.0L297.5 453.0L302.6 456.8L307.8 460.5L313.2 463.9L318.7 467.2L324.2 470.3L329.9 473.2L335.7 475.9L341.6 478.4L347.5 480.7L353.5 482.8L359.6 484.6L365.8 486.3L372.0 487.7L378.3 488.9L384.6 489.9L390.9 490.7L397.3 491.3L403.6 491.6L410.0 491.7L416.4 491.6L422.7 491.3L429.1 490.7L435.4 489.9L441.7 488.9L448.0 487.7L454.2 486.3L460.4 484.6L466.5 482.8L472.5 480.7L478.4 478.4L484.3 475.9L490.1 473.2L495.8 470.3L501.4 467.2L506.8 463.9L512.2 460.5L517.4 456.8L522.5 453.0" fill="none" stroke="#c4e4ff" stroke-width="1.300" opacity=".95"/><circle cx="407.0" cy="292.5" r="34" fill="#ff1020" opacity=".22"/><circle cx="407.0" cy="292.5" r="3.8" fill="none" stroke="#ff1018" stroke-width="1"/><circle cx="407.0" cy="292.5" r="7.6" fill="none" stroke="#ff1018" stroke-width="1"/><circle cx="407.0" cy="292.5" r="11.4" fill="none" stroke="#ff1018" stroke-width="1"/><circle cx="407.0" cy="292.5" r="15.2" fill="none" stroke="#ff1018" stroke-width="1"/><circle cx="407.0" cy="292.5" r="19.0" fill="none" stroke="#ff1018" stroke-width="1"/><circle cx="407.0" cy="292.5" r="22.8" fill="none" stroke="#ff1018" stroke-width="1"/><circle cx="407.0" cy="292.5" r="26.6" fill="none" stroke="#ff1018" stroke-width="1"/><circle cx="407.0" cy="292.5" r="30.4" fill="none" stroke="#ff1018" stroke-width="1"/><circle cx="407.0" cy="292.5" r="34.2" fill="none" stroke="#ff1018" stroke-width="1"/><circle cx="407.0" cy="292.5" r="1.500" fill="#ff1018"/></svg>
<span id="g1" class="t" style="left:258px;top:745.0px;line-height:18px;font-size:11.7px;color:#0f0;font-weight:normal;font-family:'Liberation Mono',monospace;letter-spacing:-0.014px;">Earth Inertial Axes</span>
<span id="g2" class="t" style="left:258px;top:765.0px;line-height:18px;font-size:11.7px;color:#0f0;font-weight:normal;font-family:'Liberation Mono',monospace;letter-spacing:-0.014px;">11 Nov 2022 06:48:43.367</span>
<span id="g3" class="t" style="left:454px;top:765.0px;line-height:18px;font-size:11.7px;color:#0f0;font-weight:normal;font-family:'Liberation Mono',monospace;letter-spacing:-0.014px;">Time Step: 0.10 sec</span>
<span id="g4" class="t" style="left:653px;top:445.0px;line-height:21px;font-size:13.4px;color:#f00;font-weight:normal;font-family:'Liberation Mono',monospace;letter-spacing:0.023px;">Guam_2_GU2_Leolut</span>
<span id="agi" class="t" style="left:995px;top:725.0px;line-height:49px;font-size:31px;color:#2c2c2c;font-weight:normal;font-family:'Liberation Sans',sans-serif;letter-spacing:-0.469px;-webkit-text-stroke:.55px #000;">AGI</span>
<div style="left:1078px;top:108px;width:1px;height:685px;background:#444;"></div>
<div style="left:1079px;top:108px;width:842px;height:685px;background:linear-gradient(#98b3d4,#c4d7ec 30px,#bdd3eb);border:1px solid #3c4654;border-right:1px solid #333;border-bottom:1px solid #333;border-radius:6px 6px 0 0;"></div>
<div style="left:1918px;top:112px;width:1px;height:680px;background:#30ccfa;"></div>
<div style="left:1081px;top:790px;width:838px;height:2px;background:#36c8f6;"></div>
<div style="left:1086px;top:137px;width:826px;height:647px;background:#fff;border:1px solid #eef3f9;"></div>
<svg width="16" height="16" viewBox="0 0 16 16" style="left:1088px;top:118px;overflow:visible"><rect x="0" y="0" width="16" height="16" fill="#00a0b8"/><path d="M0 0h16v2.500h-3L12 4l2 5 1.500 4-1 2.500-2-.5-2-5-3-3L5 4 1 2.500z" fill="#1a4a1a"/><path d="M12 0h4v4z" fill="#e8f0ff"/><path d="M0 14h8l-2 2H0z" fill="#0090a8"/></svg>
<span id="w2d" class="t" style="left:1108px;top:116.5px;line-height:20px;font-size:13px;color:#000;font-weight:normal;font-family:'Liberation Sans',sans-serif;letter-spacing:-0.034px;">2D Graphics 1 - Earth</span>
<div style="left:1810px;top:117px;width:32px;height:18px;background:linear-gradient(#c9d9ec,#b4c8e2 45%,#9bb3d2 50%,#b3c8e3);border:1px solid #5d6f8a;border-radius:3px;"><svg width="32" height="18" style="left:-1px;top:-1px"><rect x="9.5" y="9.5" width="12" height="4" rx="1" fill="#fff" stroke="#5a6a80"/></svg></div>
<div style="left:1844px;top:117px;width:32px;height:18px;background:linear-gradient(#c9d9ec,#b4c8e2 45%,#9bb3d2 50%,#b3c8e3);border:1px solid #5d6f8a;border-radius:3px;"><svg width="32" height="18" style="left:-1px;top:-1px"><rect x="10.0" y="4.0" width="11" height="9" rx="1" fill="#fff" stroke="#5a6a80"/><rect x="13.0" y="7.0" width="5" height="3" fill="#8aa4c8" stroke="#5a6a80"/></svg></div>
<div style="left:1878px;top:117px;width:32px;height:18px;background:linear-gradient(#e9b0a4,#d9836f 45%,#c03a20 50%,#cf6a50);border:1px solid #5a1c14;border-radius:3px;"><svg width="32" height="18" style="left:-1px;top:-1px"><path d=" M12.5 6.0l7 6.5M19.5 6.0l-7 6.5" stroke="#4a1a14" stroke-width="4" stroke-linecap="square"/><path d=" M12.5 6.0l7 6.5M19.5 6.0l-7 6.5" stroke="#fff" stroke-width="2.2" stroke-linecap="square"/></svg></div>
<div style="left:1087px;top:138px;width:824px;height:28px;background:#fbfbfb;"></div>
<div class="tb" style="left:1087px;top:138px;width:179px;height:25px;"></div>
<div class="grip" style="left:1090px;top:143px;width:2px;height:14px;"></div>
<div class="ov" style="left:1255px;top:138px;width:11px;height:25px;"><svg width="11" height="25" style="left:0;top:0"><path d="M3 13.5h5" stroke="#000" stroke-width="1"/><path d="M3 16h5l-2.500 3z" fill="#000"/><path d="M4 14.5h5" stroke="#fff" stroke-width="1" opacity=".8"/></svg></div>
<svg width="16" height="16" viewBox="0 0 16 16" style="left:1098px;top:142px;overflow:visible"><rect x="1.500" y="2.500" width="14" height="12" fill="#ffff5a" stroke="#a8a846" stroke-width="1"/><path d="M1 2.500h15" stroke="#55552a" stroke-dasharray="2 1.500" stroke-width="1.600"/><path d="M4 6.500h9M4 8.500h9M4 10.500h9M4 12.500h9" stroke="#8e8e66" stroke-width=".9"/></svg>
<div class="sep" style="left:1121px;top:141px;width:1px;height:18px;"></div>
<div style="left:1124px;top:139px;width:23px;height:22px;background:#a8c3ea;border:1px solid #3a72d0;"></div>
<svg width="16" height="16" viewBox="0 0 16 16" style="left:1127px;top:142px;overflow:visible"><path d="M4.800 10.300V3.600c0-1.400 2-1.400 2 0V8V2.400c0-1.400 2.100-1.400 2.100 0V8V3.100c0-1.400 2-1.400 2 0V8.500V4.900c0-1.300 2-1.300 2 0V10.500c0 2.200-.8 3.600-1.600 5H6.200C5 13.800 3.200 12 1.600 9.900c-.7-1 .5-2 1.500-1.200z" fill="#fff" stroke="#111" stroke-width="1" stroke-linejoin="round"/><path d="M6.500 15c0-2 .8-3.200 2.500-3.800 1.200.8 1.700 2 1.700 3.800z" fill="#b4ccf0"/></svg>
<div class="sep" style="left:1150px;top:141px;width:1px;height:18px;"></div>
<svg width="16" height="16" viewBox="0 0 16 16" style="left:1156px;top:142px;overflow:visible"><circle cx="6.500" cy="6.500" r="4.700" fill="#e6f0ff" stroke="#222" stroke-width="1.500"/><path d="M10 10l5 5" stroke="#222" stroke-width="2.600" stroke-linecap="round"/><path d="M10.500 10.500l4 4" stroke="#8a8a6a" stroke-width="1"/><path d="M4 6.500h5M6.500 4v5" stroke="#111" stroke-width="1.500"/></svg>
<svg width="16" height="16" viewBox="0 0 16 16" style="left:1179px;top:142px;overflow:visible"><circle cx="6.500" cy="6.500" r="4.700" fill="#e6f0ff" stroke="#222" stroke-width="1.500"/><path d="M10 10l5 5" stroke="#222" stroke-width="2.600" stroke-linecap="round"/><path d="M10.500 10.500l4 4" stroke="#8a8a6a" stroke-width="1"/><path d="M4 6.500h5" stroke="#111" stroke-width="1.500"/></svg>
<div class="sep" style="left:1202px;top:141px;width:1px;height:18px;"></div>
<svg width="16" height="16" viewBox="0 0 16 16" style="left:1208px;top:142px;overflow:visible"><path d="M1.500 5.500l3.500-1.500 1-2 5-1 1 1.500 3-.5.5 8-4.500 2.500-9 2z" fill="#28e028"/><path d="M3 6.500l9-2.500 2.500.5v6.500l-9 3-2.500-1z" fill="#b4b8c4" stroke="#222" stroke-width=".9"/><path d="M5.500 7v7M7.500 6.500v7" stroke="#444" stroke-width=".8"/><circle cx="11" cy="9" r="2.200" fill="#e4e8f0" stroke="#222" stroke-width=".9"/><circle cx="11" cy="9" r=".9" fill="#222"/><path d="M6.500 4l1-1.500 3-.5.500 1.500" fill="#9498a4" stroke="#222" stroke-width=".8"/></svg>
<svg width="16" height="16" viewBox="0 0 16 16" style="left:1231px;top:142px;overflow:visible"><rect x="1.500" y="2.500" width="14" height="12" fill="#ffff5a" stroke="#a8a846" stroke-width="1"/><path d="M1 2.500h15" stroke="#55552a" stroke-dasharray="2 1.500" stroke-width="1.600"/><path d="M4 6.500h9M4 8.500h9M4 10.500h9M4 12.500h9" stroke="#8e8e66" stroke-width=".9"/><rect x="3.500" y="7" width="10" height="6.500" rx="1" fill="#8c8c94" stroke="#222" stroke-width=".9"/><rect x="6.500" y="5.300" width="4" height="2" fill="#55555c" stroke="#222" stroke-width=".6"/><circle cx="8.500" cy="10.300" r="2" fill="#d8d8e0" stroke="#222" stroke-width=".8"/><circle cx="8.500" cy="10.300" r=".8" fill="#222"/></svg>
<div class="tb" style="left:1270px;top:138px;width:116px;height:25px;"></div>
<div class="grip" style="left:1273px;top:143px;width:2px;height:14px;"></div>
<div class="ov" style="left:1375px;top:138px;width:11px;height:25px;"><svg width="11" height="25" style="left:0;top:0"><path d="M3 13.5h5" stroke="#000" stroke-width="1"/><path d="M3 16h5l-2.500 3z" fill="#000"/><path d="M4 14.5h5" stroke="#fff" stroke-width="1" opacity=".8"/></svg></div>
<svg width="16" height="16" viewBox="0 0 16 16" style="left:1281px;top:142px;overflow:visible"><text x="3.500" y="5" font-size="5.500" font-weight="bold" text-anchor="middle" font-family="Liberation Sans,sans-serif" fill="#000">A</text><text x="13" y="5" font-size="5.500" font-weight="bold" text-anchor="middle" font-family="Liberation Sans,sans-serif" fill="#000">B</text><path d="M1.500 7.500h13M1.500 6v3M14.500 6v3M3 6.500l-1.500 1 1.500 1M13 6.500l1.500 1-1.500 1" stroke="#111" stroke-width="1" fill="none"/><rect x="0.500" y="10.500" width="15" height="4.500" fill="#e8a010" stroke="#5a3c00" stroke-width="1"/><path d="M3 10.500v2M5.500 10.500v2.500M8 10.500v2M10.500 10.500v2.500M13 10.500v2" stroke="#5a3c00" stroke-width=".8"/></svg>
<svg width="16" height="16" viewBox="0 0 16 16" style="left:1304px;top:142px;overflow:visible"><path d="M2.500 0.500v9h13" stroke="#e01818" stroke-width="1.200" fill="none"/><path d="M1 2.500l1.500-2 1.500 2M13.500 8l2 1.500-2 1.500" stroke="#e01818" stroke-width="1" fill="none"/><rect x="5.500" y="1" width="10" height="5.500" fill="#222"/><path d="M6.500 2.500h8M6.500 4.500h8" stroke="#ddd" stroke-width=".9" stroke-dasharray="1 1"/><text x="10" y="16" font-size="6.500" font-weight="bold" text-anchor="middle" font-family="Liberation Sans,sans-serif" fill="#000">2:1</text></svg>
<svg width="16" height="16" viewBox="0 0 16 16" style="left:1327px;top:142px;overflow:visible"><rect x="0.500" y="1.500" width="9" height="8" fill="#111"/><path d="M1.500 3.500h7M1.500 5.500h7M1.500 7.500h7" stroke="#3ad03a" stroke-width=".9" stroke-dasharray="1 1"/><rect x="4.500" y="5.500" width="11" height="10" fill="#111"/><path d="M5.500 8h9M5.500 10.500h9M5.500 13h9" stroke="#e8e8e8" stroke-width=".9" stroke-dasharray="1 1"/><path d="M6 9l3 2 3-2" stroke="#3ad03a" stroke-width="1" fill="none"/></svg>
<svg width="16" height="16" viewBox="0 0 16 16" style="left:1350px;top:142px;overflow:visible"><circle cx="7.500" cy="7.500" r="6.800" fill="#2a3cdc" stroke="#1a2aa8" stroke-width=".8"/><path d="M1 7.500h13M7.500 1v13M2.500 4c3 1.500 7 1.500 10 0M2.500 11c3-1.500 7-1.500 10 0M7.500 1c-4 3-4 10 0 13M7.500 1c4 3 4 10 0 13" stroke="#dfe6ff" stroke-width=".8" fill="none"/><path d="M6 10.500h10l-5 5z" fill="#111"/></svg>
<div class="tb" style="left:1390px;top:138px;width:47px;height:25px;"></div>
<div class="grip" style="left:1393px;top:143px;width:2px;height:14px;"></div>
<div class="ov" style="left:1426px;top:138px;width:11px;height:25px;"><svg width="11" height="25" style="left:0;top:0"><path d="M3 13.5h5" stroke="#000" stroke-width="1"/><path d="M3 16h5l-2.500 3z" fill="#000"/><path d="M4 14.5h5" stroke="#fff" stroke-width="1" opacity=".8"/></svg></div>
<svg width="16" height="16" viewBox="0 0 16 16" style="left:1401px;top:142px;overflow:visible"><rect x="0" y="0" width="16" height="16" fill="#1a3468"/><circle cx="7" cy="7.500" r="6.500" fill="#3a6ab8"/><path d="M2 5c2-2 5-3 8-2-1 2-3 2-4 4s1 4-1 5c-2-1-3.500-4-3-7z" fill="#a8c4e8" opacity=".8"/><path d="M9 3.500h3v6h2.500l-4 5-4-5H9z" fill="#0a0a14"/></svg>
<svg width="822" height="617" viewBox="0 0 822 617" style="left:1088px;top:166px;background:#000"><defs><clipPath id="mclip"><rect x="0" y="113.800" width="822" height="389.400"/></clipPath><filter id="mb" filterUnits="userSpaceOnUse" x="0" y="0" width="822" height="617"><feGaussianBlur stdDeviation="6" color-interpolation-filters="sRGB"/></filter><filter id="mb3" filterUnits="userSpaceOnUse" x="0" y="0" width="822" height="617"><feGaussianBlur stdDeviation="1.200" color-interpolation-filters="sRGB"/></filter><filter id="mb2" filterUnits="userSpaceOnUse" x="0" y="0" width="822" height="617"><feGaussianBlur stdDeviation="2.500" color-interpolation-filters="sRGB"/></filter><linearGradient id="ocean" x1="0" y1="0" x2="0" y2="1"><stop offset="0" stop-color="#1a2630"/><stop offset=".25" stop-color="#121c27"/><stop offset=".8" stop-color="#101a25"/><stop offset="1" stop-color="#18242e"/></linearGradient><clipPath id="landclip"><path d="M-127.0 223.9L-128.2 210.2L-109.9 209.1L-116.8 197.7L-109.9 197.2L-101.9 192.0L-97.4 188.5L-87.1 185.1L-88.2 178.3L-82.5 177.1L-83.7 184.0L-74.5 185.1L-63.1 184.0L-58.5 178.3L-51.7 177.1L-52.8 172.5L-38.0 171.4L-54.0 171.4L-57.4 169.1L-57.4 164.6L-49.4 158.8L-56.3 158.2L-66.5 166.8L-64.3 171.4L-68.8 178.3L-74.5 181.7L-78.0 180.5L-81.4 173.7L-90.5 176.0L-95.1 171.4L-95.1 166.8L-83.7 162.3L-74.5 154.3L-63.1 148.6L-49.4 146.3L-35.7 148.6L-12.9 155.4L-15.2 157.7L-31.1 156.6L-26.6 161.1L-15.2 161.1L-6.0 157.7L-6.0 152.0L16.8 152.0L30.5 150.9L48.8 152.0L46.5 146.3L51.1 141.7L60.2 145.1L62.5 153.1L67.0 145.1L76.2 142.9L92.2 137.2L117.3 134.9L131.0 131.0L151.5 139.4L167.5 141.7L183.5 141.7L190.3 146.3L213.2 142.9L236.0 146.3L258.8 149.3L281.7 148.6L304.5 150.9L327.3 157.7L320.5 161.1L302.2 160.0L297.7 165.7L281.7 171.4L265.7 176.0L263.4 182.8L252.0 192.0L249.7 178.3L258.8 168.0L247.4 172.5L220.0 172.5L201.8 184.0L215.5 187.4L213.2 198.8L201.8 209.1L192.6 211.4L185.8 217.1L189.2 226.2L182.3 229.6L181.2 222.8L178.9 218.2L170.9 219.4L172.1 215.9L162.9 219.4L165.2 222.8L173.2 223.9L166.4 228.5L169.8 235.3L172.1 239.9L167.5 249.0L158.4 255.9L152.7 258.2L144.7 260.5L140.1 259.3L135.5 263.9L141.2 273.0L143.1 281.0L136.7 285.6L133.3 288.5L133.3 285.6L127.5 281.0L123.0 277.6L120.7 283.3L123.0 292.4L129.8 299.3L131.0 305.0L124.1 301.6L122.5 294.7L118.0 290.1L118.4 281.0L116.1 270.7L109.3 271.9L108.1 265.0L103.6 259.3L99.0 258.2L92.2 260.5L87.6 263.9L76.9 274.2L76.2 283.3L70.5 290.1L67.0 283.3L60.2 269.6L59.5 260.5L53.3 260.5L51.1 257.0L46.5 252.5L33.9 251.3L23.7 250.2L22.5 246.8L12.2 245.6L7.7 239.9L3.1 239.9L7.7 247.9L11.1 251.3L16.8 253.6L22.1 249.0L23.7 253.6L30.0 257.0L24.8 265.0L19.1 269.6L12.2 271.9L-3.7 279.4L-7.6 279.4L-9.0 271.9L-17.4 259.3L-26.6 244.5L-26.8 241.0L-32.3 239.9L-32.7 237.2L-28.2 236.9L-24.8 228.5L-24.3 224.6L-33.4 225.7L-36.9 225.1L-43.7 224.4L-46.0 219.4L-44.8 215.9L-40.3 214.8L-31.1 212.5L-24.3 213.6L-11.7 213.6L-19.7 206.8L-22.0 205.0L-17.4 201.1L-26.6 203.4L-30.0 206.8L-31.1 203.4L-36.9 202.2L-41.4 207.9L-42.6 212.5L-40.7 214.3L-47.1 215.2L-51.7 215.9L-54.4 216.2L-52.8 221.6L-55.1 225.1L-58.5 221.6L-62.0 215.9L-63.1 212.5L-73.4 205.7L-75.7 204.1L-78.4 205.2L-78.0 207.9L-74.5 211.4L-70.0 213.0L-64.3 216.6L-67.7 215.9L-68.8 219.4L-70.0 221.6L-70.6 217.1L-78.0 213.2L-83.0 209.1L-86.4 207.0L-89.4 208.6L-98.5 209.5L-99.2 212.5L-105.4 215.5L-107.2 219.4L-111.1 224.4L-119.1 226.2L-121.3 223.9ZM694.9 223.9L693.8 210.2L712.1 209.1L705.2 197.7L712.1 197.2L720.1 192.0L724.6 188.5L734.9 185.1L733.8 178.3L739.5 177.1L738.3 184.0L747.5 185.1L758.9 184.0L763.4 178.3L770.3 177.1L769.2 172.5L784.0 171.4L768.0 171.4L764.6 169.1L764.6 164.6L772.6 158.8L765.7 158.2L755.5 166.8L757.7 171.4L753.2 178.3L747.5 181.7L744.0 180.5L740.6 173.7L731.5 176.0L726.9 171.4L726.9 166.8L738.3 162.3L747.5 154.3L758.9 148.6L772.6 146.3L786.3 148.6L809.1 155.4L806.8 157.7L790.8 156.6L795.4 161.1L806.8 161.1L816.0 157.7L816.0 152.0L838.8 152.0L852.5 150.9L870.8 152.0L868.5 146.3L873.0 141.7L882.2 145.1L884.5 153.1L889.0 145.1L898.2 142.9L914.1 137.2L939.3 134.9L953.0 131.0L973.5 139.4L989.5 141.7L1005.5 141.7L1012.3 146.3L1035.2 142.9L1058.0 146.3L1080.8 149.3L1103.7 148.6L1126.5 150.9L1149.3 157.7L1142.5 161.1L1124.2 160.0L1119.6 165.7L1103.7 171.4L1087.7 176.0L1085.4 182.8L1074.0 192.0L1071.7 178.3L1080.8 168.0L1069.4 172.5L1042.0 172.5L1023.7 184.0L1037.4 187.4L1035.2 198.8L1023.7 209.1L1014.6 211.4L1007.8 217.1L1011.2 226.2L1004.3 229.6L1003.2 222.8L1000.9 218.2L992.9 219.4L994.1 215.9L984.9 219.4L987.2 222.8L995.2 223.9L988.3 228.5L991.8 235.3L994.1 239.9L989.5 249.0L980.4 255.9L974.6 258.2L966.7 260.5L962.1 259.3L957.5 263.9L963.2 273.0L965.1 281.0L958.7 285.6L955.2 288.5L955.2 285.6L949.5 281.0L945.0 277.6L942.7 283.3L945.0 292.4L951.8 299.3L953.0 305.0L946.1 301.6L944.5 294.7L939.9 290.1L940.4 281.0L938.1 270.7L931.3 271.9L930.1 265.0L925.6 259.3L921.0 258.2L914.1 260.5L909.6 263.9L898.8 274.2L898.2 283.3L892.5 290.1L889.0 283.3L882.2 269.6L881.5 260.5L875.3 260.5L873.0 257.0L868.5 252.5L855.9 251.3L845.6 250.2L844.5 246.8L834.2 245.6L829.7 239.9L825.1 239.9L829.7 247.9L833.1 251.3L838.8 253.6L844.0 249.0L845.6 253.6L852.0 257.0L846.8 265.0L841.1 269.6L834.2 271.9L818.2 279.4L814.4 279.4L813.0 271.9L804.5 259.3L795.4 244.5L795.2 241.0L789.7 239.9L789.2 237.2L793.8 236.9L797.2 228.5L797.7 224.6L788.6 225.7L785.1 225.1L778.3 224.4L776.0 219.4L777.1 215.9L781.7 214.8L790.8 212.5L797.7 213.6L810.3 213.6L802.3 206.8L800.0 205.0L804.5 201.1L795.4 203.4L792.0 206.8L790.8 203.4L785.1 202.2L780.6 207.9L779.4 212.5L781.3 214.3L774.9 215.2L770.3 215.9L767.6 216.2L769.2 221.6L766.9 225.1L763.4 221.6L760.0 215.9L758.9 212.5L748.6 205.7L746.3 204.1L743.6 205.2L744.0 207.9L747.5 211.4L752.0 213.0L757.7 216.6L754.3 215.9L753.2 219.4L752.0 221.6L751.3 217.1L744.0 213.2L739.0 209.1L735.6 207.0L732.6 208.6L723.5 209.5L722.8 212.5L716.6 215.5L714.8 219.4L710.9 224.4L702.9 226.2L700.7 223.9ZM-120.0 226.7L-111.1 228.0L-99.6 224.4L-83.7 223.2L-81.4 230.8L-72.2 234.6L-60.8 237.6L-60.8 233.5L-54.0 234.2L-40.3 237.6L-32.7 237.2L-32.3 239.9L-28.9 246.8L-25.4 254.7L-21.6 260.5L-18.6 267.3L-16.3 273.0L-8.3 279.9L-7.6 282.1L-4.9 284.4L10.0 281.0L9.5 285.6L3.1 297.0L-6.0 305.0L-11.7 312.5L-16.3 318.7L-17.4 324.4L-14.0 332.4L-14.0 342.6L-22.0 348.4L-26.6 354.1L-25.4 363.2L-31.6 367.8L-32.3 373.5L-36.9 379.2L-44.8 385.6L-56.3 386.7L-60.8 387.9L-64.5 386.5L-65.4 381.5L-72.2 370.0L-73.4 359.8L-79.1 349.5L-78.0 338.1L-75.7 328.9L-79.1 321.0L-84.8 313.0L-84.8 300.4L-87.1 298.1L-92.8 298.6L-96.2 294.0L-104.2 295.2L-113.3 297.0L-123.6 298.4L-132.8 292.4L-137.3 286.7L-140.7 283.3L-145.3 274.8L-143.7 265.0L-145.3 260.5L-143.0 254.7L-139.6 249.0L-136.2 244.9L-129.3 241.0L-128.6 236.5L-122.0 230.8ZM702.0 226.7L710.9 228.0L722.3 224.4L738.3 223.2L740.6 230.8L749.7 234.6L761.2 237.6L761.2 233.5L768.0 234.2L781.7 237.6L789.2 237.2L789.7 239.9L793.1 246.8L796.6 254.7L800.4 260.5L803.4 267.3L805.7 273.0L813.7 279.9L814.4 282.1L817.1 284.4L831.9 281.0L831.5 285.6L825.1 297.0L816.0 305.0L810.3 312.5L805.7 318.7L804.5 324.4L808.0 332.4L808.0 342.6L800.0 348.4L795.4 354.1L796.6 363.2L790.4 367.8L789.7 373.5L785.1 379.2L777.1 385.6L765.7 386.7L761.2 387.9L757.5 386.5L756.6 381.5L749.7 370.0L748.6 359.8L742.9 349.5L744.0 338.1L746.3 328.9L742.9 321.0L737.2 313.0L737.2 300.4L734.9 298.1L729.2 298.6L725.8 294.0L717.8 295.2L708.6 297.0L698.4 298.4L689.2 292.4L684.7 286.7L681.2 283.3L676.7 274.8L678.3 265.0L676.7 260.5L679.0 254.7L682.4 249.0L685.8 244.9L692.7 241.0L693.3 236.5L700.0 230.8ZM6.1 335.8L8.8 343.8L5.4 351.8L2.0 364.3L-3.7 366.6L-7.2 360.9L-5.3 354.1L-6.0 347.2L-0.3 343.8L3.1 339.2ZM828.1 335.8L830.8 343.8L827.4 351.8L824.0 364.3L818.2 366.6L814.8 360.9L816.6 354.1L816.0 347.2L821.7 343.8L825.1 339.2ZM152.7 358.6L153.8 367.8L156.1 376.9L156.1 386.0L162.9 388.3L175.5 386.0L181.2 382.2L188.1 380.8L193.8 380.3L199.5 383.3L202.9 387.9L208.1 383.7L208.6 389.5L213.2 394.0L221.2 396.8L227.6 397.4L236.0 394.0L238.3 386.0L242.9 379.2L244.0 371.2L238.3 363.2L234.9 358.6L229.2 352.9L226.9 349.5L225.3 342.6L221.2 340.4L218.9 333.1L217.1 338.1L216.6 344.9L214.3 348.4L210.9 347.2L206.3 344.5L202.9 342.6L205.9 336.3L201.8 335.8L196.0 334.0L192.6 336.3L189.9 339.2L189.2 342.6L185.8 342.6L182.3 340.4L178.9 343.8L175.5 347.9L172.5 349.5L170.9 352.9L165.2 354.1L159.5 355.7L154.9 357.9ZM223.9 401.3L231.9 401.6L232.1 404.3L230.3 407.7L226.9 407.7L225.0 404.8ZM287.8 386.9L291.9 391.3L295.4 394.0L301.1 394.5L297.7 398.6L293.8 403.4L292.4 402.7L293.1 399.7L290.3 398.1L292.6 395.2L291.9 392.2ZM287.8 400.9L291.5 403.6L288.1 407.7L284.4 409.6L282.8 413.4L278.2 414.8L273.7 413.4L277.1 409.6L282.8 406.6L286.2 403.2ZM192.6 310.2L199.5 310.2L201.8 315.9L207.5 312.5L215.5 314.3L223.4 317.1L226.9 321.0L231.0 322.6L229.2 324.4L232.6 328.9L237.1 332.1L230.3 331.2L226.9 327.8L221.2 328.5L217.7 329.4L213.2 326.7L209.1 327.6L209.7 324.4L206.3 319.8L200.6 317.5L197.2 317.5L194.9 314.8L199.0 313.4L193.8 311.8ZM232.1 321.0L237.1 321.0L241.0 318.0L240.6 320.5L237.1 322.8L232.6 322.1ZM142.4 305.0L144.7 304.3L148.1 302.0L151.5 301.1L156.1 297.0L160.2 292.4L165.2 296.5L162.5 299.3L164.8 306.1L161.8 307.3L159.5 311.8L159.1 317.5L154.9 317.5L151.5 315.7L148.1 315.9L144.7 311.8L142.4 308.4ZM111.1 295.6L116.1 296.5L121.8 302.2L129.8 308.4L132.1 313.0L135.5 315.9L135.1 321.6L132.1 321.6L126.4 317.5L123.0 311.8L118.9 304.5L115.0 300.4ZM133.7 323.9L136.7 322.1L141.2 323.5L146.5 323.0L150.8 324.4L154.9 326.0L154.9 328.3L147.0 327.4L140.1 326.2L136.2 325.3ZM166.4 321.0L168.6 321.0L168.2 315.2L170.9 318.7L173.7 319.4L172.5 315.7L170.2 313.0L174.8 310.5L170.9 310.5L168.0 307.7L169.8 307.3L175.5 307.5L178.9 305.0L177.8 306.1L173.2 306.1L169.3 305.4L167.0 307.3L166.8 310.7L165.9 315.7ZM175.5 331.9L177.8 329.4L183.5 327.6L182.3 328.9L177.8 331.7ZM158.4 327.6L165.2 327.6L174.4 327.4L173.2 328.5L165.2 328.5L160.2 328.9ZM184.6 303.8L186.9 305.0L186.9 308.4L185.8 310.2L184.6 307.3ZM185.8 315.2L192.2 315.2L191.5 316.8L186.9 316.4ZM168.6 266.2L172.5 266.2L172.8 270.7L170.9 274.2L172.1 276.4L176.6 277.6L176.6 279.9L173.2 277.6L169.8 277.1L168.6 275.3L167.5 271.9ZM172.1 292.4L175.5 288.5L180.1 286.0L182.3 290.1L181.7 294.0L180.1 295.2L176.6 293.6L174.8 291.3ZM172.1 281.5L174.8 282.1L178.9 279.9L180.1 283.3L177.8 285.6L175.0 287.2L173.2 285.6L172.1 284.4ZM161.1 289.0L166.4 284.4L166.4 282.6L164.1 285.6L160.7 288.3ZM169.8 250.9L172.1 251.3L169.3 258.2L167.7 255.9L168.2 252.9ZM141.7 264.6L143.5 262.5L147.0 263.2L145.8 266.2L142.4 266.6ZM216.1 213.9L217.7 218.2L215.5 221.6L215.0 226.2L213.2 228.0L210.2 229.2L206.3 229.4L203.4 231.9L201.8 229.6L196.0 230.3L192.6 230.8L192.6 229.4L196.0 227.3L202.9 227.1L205.9 223.9L209.7 223.2L212.7 219.4L213.2 215.9ZM213.2 213.6L215.5 211.4L220.5 212.5L225.7 209.5L223.0 207.9L217.1 204.5L216.6 209.1L213.9 210.2L213.2 212.5ZM190.3 231.9L192.6 231.0L194.4 233.1L192.6 236.9L190.8 237.2L189.9 233.7ZM196.0 231.2L199.9 230.1L201.1 231.2L198.3 232.1L196.7 233.5L195.6 232.1ZM217.7 184.4L220.0 187.4L220.7 194.2L223.4 196.5L220.0 201.1L220.7 202.9L217.7 203.4L217.7 198.8L217.7 193.1L217.3 188.5ZM76.2 286.3L80.3 291.3L78.5 294.5L76.2 294.5L75.7 290.1ZM702.9 194.2L708.6 192.9L718.5 191.5L719.4 188.1L716.0 187.4L715.0 184.4L711.8 181.7L710.5 180.5L711.4 177.1L706.4 176.9L708.2 174.6L704.1 174.6L701.8 177.6L702.9 181.0L704.5 183.3L708.6 184.6L708.2 186.7L705.2 186.9L705.9 189.0L703.6 190.1L708.2 191.0L705.7 191.7ZM701.8 189.2L701.3 185.1L702.7 183.7L700.7 182.4L696.8 182.4L692.7 184.6L693.8 186.9L692.0 189.7L693.6 190.8L697.2 190.1ZM664.1 162.5L672.6 163.6L681.7 161.6L684.4 159.5L681.2 157.2L674.4 157.2L667.5 158.8L663.0 157.0L660.7 158.8L665.3 160.0L661.2 160.4L665.3 161.6ZM548.8 129.8L560.2 125.7L573.9 121.6L601.3 120.3L635.6 117.7L658.4 118.9L676.7 122.3L688.1 122.3L672.1 128.0L673.3 133.7L669.8 139.4L665.3 144.0L664.1 148.1L656.1 152.0L642.4 153.1L631.0 158.4L623.0 161.1L618.5 168.0L613.9 171.4L605.9 169.6L599.0 163.4L593.3 156.6L594.5 150.9L599.0 148.6L591.1 146.7L589.9 142.9L583.1 136.0L564.8 134.9L553.4 132.6ZM331.9 158.6L341.0 156.6L345.6 155.4L336.5 152.0L357.0 145.8L393.5 149.3L407.2 150.9L423.2 148.6L441.5 149.7L452.9 153.1L466.6 153.1L482.6 153.1L496.3 153.1L500.9 144.5L510.0 150.9L519.1 154.3L528.3 149.7L529.4 155.4L519.1 157.7L514.6 162.3L503.1 166.8L499.7 173.7L504.3 178.3L514.6 179.4L527.1 182.8L528.3 187.8L535.1 191.3L535.1 184.0L540.8 179.4L536.3 174.1L538.5 166.2L547.7 166.4L555.7 169.1L557.9 174.4L567.1 170.9L573.9 177.1L578.5 182.8L587.6 189.7L578.5 193.8L563.7 193.8L555.7 199.9L567.1 196.5L568.2 201.1L576.2 204.5L564.8 209.1L562.5 205.7L555.7 208.6L554.5 212.5L546.5 215.5L545.4 218.7L542.0 221.6L542.0 228.5L536.3 231.2L530.5 235.3L529.9 239.9L532.8 246.8L531.7 250.9L528.7 249.0L526.4 244.5L523.7 239.9L514.6 239.2L511.1 241.7L500.9 241.0L494.0 244.5L492.9 251.3L492.2 258.2L496.3 265.0L499.7 266.8L506.6 266.2L508.9 260.5L516.8 259.3L515.7 266.2L513.4 271.9L519.1 272.3L525.5 274.2L524.4 283.3L527.1 287.9L532.8 287.4L538.5 289.0L537.9 291.3L534.0 288.3L531.7 291.7L526.0 289.4L520.3 285.6L515.7 278.7L506.6 276.4L499.7 271.4L494.0 272.3L483.7 268.4L474.6 262.7L474.6 257.0L466.6 249.0L458.6 241.0L453.6 236.0L454.1 239.9L458.6 245.6L463.2 252.5L465.5 255.9L459.8 251.3L454.1 244.5L450.6 238.8L447.9 233.7L440.4 229.6L436.9 224.4L432.8 218.2L431.7 211.4L432.4 202.9L430.8 197.9L435.8 199.9L434.6 196.5L430.1 194.2L423.7 190.8L418.0 184.0L411.8 178.3L403.8 174.8L395.8 171.9L382.1 169.8L373.0 172.5L368.4 169.1L363.9 174.8L354.7 179.4L342.2 183.3L349.0 174.8L344.5 171.4L336.5 168.0L339.9 164.6L347.9 162.3L338.8 161.1ZM532.8 140.1L542.0 141.7L560.2 147.4L573.9 155.9L569.4 164.6L559.1 166.2L551.1 162.3L537.4 161.1L547.7 156.6L548.8 152.0L535.1 148.6L519.1 147.9L512.3 142.9L521.4 139.9ZM448.3 145.1L468.9 141.7L478.0 146.3L483.7 149.7L471.2 151.3L457.5 152.0L448.3 148.6ZM510.0 133.7L532.8 134.2L542.0 129.2L567.1 123.5L573.9 120.0L544.2 118.9L514.6 121.2L505.4 124.6L519.1 129.2ZM430.1 144.0L441.5 145.1L450.6 140.6L446.1 136.0L432.4 138.3ZM496.3 137.2L510.0 138.1L532.8 137.8L531.7 135.6L510.0 134.9L496.3 133.7ZM450.6 137.2L473.5 137.6L475.7 134.9L464.3 133.7L448.3 134.4ZM580.1 199.5L587.6 201.5L594.5 201.8L595.2 199.5L592.7 195.4L588.3 190.8L584.7 193.1L581.9 196.5ZM521.9 258.4L527.1 255.7L534.0 256.3L543.1 261.1L546.1 262.3L538.5 263.0L537.4 261.1L531.7 258.2L528.3 257.3ZM545.6 266.4L548.8 263.0L555.7 263.2L559.3 265.9L554.5 266.8L551.1 266.8ZM538.5 289.0L543.1 283.7L551.1 281.0L552.2 283.7L555.7 281.0L560.2 284.2L569.4 284.4L574.4 284.0L578.5 289.0L585.3 294.7L593.3 295.6L599.0 298.8L601.3 307.3L605.9 310.7L613.9 314.1L624.2 314.8L631.0 319.4L635.6 323.2L635.6 328.9L629.9 334.7L626.4 340.4L626.4 349.0L622.3 357.5L617.3 360.9L609.3 363.2L604.3 368.9L604.1 373.5L599.0 379.2L593.3 386.0L586.5 387.9L582.4 386.0L585.3 391.7L583.1 396.3L573.9 397.4L572.8 402.0L567.1 402.0L569.8 406.1L565.9 411.1L561.4 413.4L564.8 418.0L557.9 423.7L559.1 428.3L565.9 433.5L559.1 435.1L551.1 431.7L544.7 428.3L543.1 420.3L545.4 413.4L548.8 404.3L547.0 395.2L550.0 388.3L552.2 379.2L552.7 370.0L555.0 360.9L555.0 350.6L550.0 347.2L542.0 341.1L538.5 334.7L534.0 325.5L530.1 319.8L532.8 314.8L530.5 310.7L532.8 306.6L535.6 304.5L539.0 299.3L538.5 292.4ZM11.1 145.1L19.1 147.0L24.8 144.0L21.4 139.4L30.5 134.9L48.8 132.6L44.2 136.0L28.2 139.4L19.1 142.9ZM740.6 126.9L747.5 131.4L754.3 133.3L763.4 129.2L777.1 125.7L761.2 124.6L747.5 125.7Z"/></clipPath></defs><g clip-path="url(#mclip)"><rect x="0" y="104" width="822" height="412" fill="url(#ocean)"/><g filter="url(#mb)" opacity=".55"><ellipse cx="170" cy="330" rx="60" ry="30" fill="#22384a"/><ellipse cx="200" cy="250" rx="30" ry="40" fill="#22384a"/><ellipse cx="60" cy="380" rx="80" ry="60" fill="#101b26"/><ellipse cx="760" cy="430" rx="80" ry="50" fill="#101a24"/><rect x="0" y="112" width="822" height="22" fill="#2a3640"/></g><path d="M-127.0 223.9L-128.2 210.2L-109.9 209.1L-116.8 197.7L-109.9 197.2L-101.9 192.0L-97.4 188.5L-87.1 185.1L-88.2 178.3L-82.5 177.1L-83.7 184.0L-74.5 185.1L-63.1 184.0L-58.5 178.3L-51.7 177.1L-52.8 172.5L-38.0 171.4L-54.0 171.4L-57.4 169.1L-57.4 164.6L-49.4 158.8L-56.3 158.2L-66.5 166.8L-64.3 171.4L-68.8 178.3L-74.5 181.7L-78.0 180.5L-81.4 173.7L-90.5 176.0L-95.1 171.4L-95.1 166.8L-83.7 162.3L-74.5 154.3L-63.1 148.6L-49.4 146.3L-35.7 148.6L-12.9 155.4L-15.2 157.7L-31.1 156.6L-26.6 161.1L-15.2 161.1L-6.0 157.7L-6.0 152.0L16.8 152.0L30.5 150.9L48.8 152.0L46.5 146.3L51.1 141.7L60.2 145.1L62.5 153.1L67.0 145.1L76.2 142.9L92.2 137.2L117.3 134.9L131.0 131.0L151.5 139.4L167.5 141.7L183.5 141.7L190.3 146.3L213.2 142.9L236.0 146.3L258.8 149.3L281.7 148.6L304.5 150.9L327.3 157.7L320.5 161.1L302.2 160.0L297.7 165.7L281.7 171.4L265.7 176.0L263.4 182.8L252.0 192.0L249.7 178.3L258.8 168.0L247.4 172.5L220.0 172.5L201.8 184.0L215.5 187.4L213.2 198.8L201.8 209.1L192.6 211.4L185.8 217.1L189.2 226.2L182.3 229.6L181.2 222.8L178.9 218.2L170.9 219.4L172.1 215.9L162.9 219.4L165.2 222.8L173.2 223.9L166.4 228.5L169.8 235.3L172.1 239.9L167.5 249.0L158.4 255.9L152.7 258.2L144.7 260.5L140.1 259.3L135.5 263.9L141.2 273.0L143.1 281.0L136.7 285.6L133.3 288.5L133.3 285.6L127.5 281.0L123.0 277.6L120.7 283.3L123.0 292.4L129.8 299.3L131.0 305.0L124.1 301.6L122.5 294.7L118.0 290.1L118.4 281.0L116.1 270.7L109.3 271.9L108.1 265.0L103.6 259.3L99.0 258.2L92.2 260.5L87.6 263.9L76.9 274.2L76.2 283.3L70.5 290.1L67.0 283.3L60.2 269.6L59.5 260.5L53.3 260.5L51.1 257.0L46.5 252.5L33.9 251.3L23.7 250.2L22.5 246.8L12.2 245.6L7.7 239.9L3.1 239.9L7.7 247.9L11.1 251.3L16.8 253.6L22.1 249.0L23.7 253.6L30.0 257.0L24.8 265.0L19.1 269.6L12.2 271.9L-3.7 279.4L-7.6 279.4L-9.0 271.9L-17.4 259.3L-26.6 244.5L-26.8 241.0L-32.3 239.9L-32.7 237.2L-28.2 236.9L-24.8 228.5L-24.3 224.6L-33.4 225.7L-36.9 225.1L-43.7 224.4L-46.0 219.4L-44.8 215.9L-40.3 214.8L-31.1 212.5L-24.3 213.6L-11.7 213.6L-19.7 206.8L-22.0 205.0L-17.4 201.1L-26.6 203.4L-30.0 206.8L-31.1 203.4L-36.9 202.2L-41.4 207.9L-42.6 212.5L-40.7 214.3L-47.1 215.2L-51.7 215.9L-54.4 216.2L-52.8 221.6L-55.1 225.1L-58.5 221.6L-62.0 215.9L-63.1 212.5L-73.4 205.7L-75.7 204.1L-78.4 205.2L-78.0 207.9L-74.5 211.4L-70.0 213.0L-64.3 216.6L-67.7 215.9L-68.8 219.4L-70.0 221.6L-70.6 217.1L-78.0 213.2L-83.0 209.1L-86.4 207.0L-89.4 208.6L-98.5 209.5L-99.2 212.5L-105.4 215.5L-107.2 219.4L-111.1 224.4L-119.1 226.2L-121.3 223.9ZM694.9 223.9L693.8 210.2L712.1 209.1L705.2 197.7L712.1 197.2L720.1 192.0L724.6 188.5L734.9 185.1L733.8 178.3L739.5 177.1L738.3 184.0L747.5 185.1L758.9 184.0L763.4 178.3L770.3 177.1L769.2 172.5L784.0 171.4L768.0 171.4L764.6 169.1L764.6 164.6L772.6 158.8L765.7 158.2L755.5 166.8L757.7 171.4L753.2 178.3L747.5 181.7L744.0 180.5L740.6 173.7L731.5 176.0L726.9 171.4L726.9 166.8L738.3 162.3L747.5 154.3L758.9 148.6L772.6 146.3L786.3 148.6L809.1 155.4L806.8 157.7L790.8 156.6L795.4 161.1L806.8 161.1L816.0 157.7L816.0 152.0L838.8 152.0L852.5 150.9L870.8 152.0L868.5 146.3L873.0 141.7L882.2 145.1L884.5 153.1L889.0 145.1L898.2 142.9L914.1 137.2L939.3 134.9L953.0 131.0L973.5 139.4L989.5 141.7L1005.5 141.7L1012.3 146.3L1035.2 142.9L1058.0 146.3L1080.8 149.3L1103.7 148.6L1126.5 150.9L1149.3 157.7L1142.5 161.1L1124.2 160.0L1119.6 165.7L1103.7 171.4L1087.7 176.0L1085.4 182.8L1074.0 192.0L1071.7 178.3L1080.8 168.0L1069.4 172.5L1042.0 172.5L1023.7 184.0L1037.4 187.4L1035.2 198.8L1023.7 209.1L1014.6 211.4L1007.8 217.1L1011.2 226.2L1004.3 229.6L1003.2 222.8L1000.9 218.2L992.9 219.4L994.1 215.9L984.9 219.4L987.2 222.8L995.2 223.9L988.3 228.5L991.8 235.3L994.1 239.9L989.5 249.0L980.4 255.9L974.6 258.2L966.7 260.5L962.1 259.3L957.5 263.9L963.2 273.0L965.1 281.0L958.7 285.6L955.2 288.5L955.2 285.6L949.5 281.0L945.0 277.6L942.7 283.3L945.0 292.4L951.8 299.3L953.0 305.0L946.1 301.6L944.5 294.7L939.9 290.1L940.4 281.0L938.1 270.7L931.3 271.9L930.1 265.0L925.6 259.3L921.0 258.2L914.1 260.5L909.6 263.9L898.8 274.2L898.2 283.3L892.5 290.1L889.0 283.3L882.2 269.6L881.5 260.5L875.3 260.5L873.0 257.0L868.5 252.5L855.9 251.3L845.6 250.2L844.5 246.8L834.2 245.6L829.7 239.9L825.1 239.9L829.7 247.9L833.1 251.3L838.8 253.6L844.0 249.0L845.6 253.6L852.0 257.0L846.8 265.0L841.1 269.6L834.2 271.9L818.2 279.4L814.4 279.4L813.0 271.9L804.5 259.3L795.4 244.5L795.2 241.0L789.7 239.9L789.2 237.2L793.8 236.9L797.2 228.5L797.7 224.6L788.6 225.7L785.1 225.1L778.3 224.4L776.0 219.4L777.1 215.9L781.7 214.8L790.8 212.5L797.7 213.6L810.3 213.6L802.3 206.8L800.0 205.0L804.5 201.1L795.4 203.4L792.0 206.8L790.8 203.4L785.1 202.2L780.6 207.9L779.4 212.5L781.3 214.3L774.9 215.2L770.3 215.9L767.6 216.2L769.2 221.6L766.9 225.1L763.4 221.6L760.0 215.9L758.9 212.5L748.6 205.7L746.3 204.1L743.6 205.2L744.0 207.9L747.5 211.4L752.0 213.0L757.7 216.6L754.3 215.9L753.2 219.4L752.0 221.6L751.3 217.1L744.0 213.2L739.0 209.1L735.6 207.0L732.6 208.6L723.5 209.5L722.8 212.5L716.6 215.5L714.8 219.4L710.9 224.4L702.9 226.2L700.7 223.9ZM-120.0 226.7L-111.1 228.0L-99.6 224.4L-83.7 223.2L-81.4 230.8L-72.2 234.6L-60.8 237.6L-60.8 233.5L-54.0 234.2L-40.3 237.6L-32.7 237.2L-32.3 239.9L-28.9 246.8L-25.4 254.7L-21.6 260.5L-18.6 267.3L-16.3 273.0L-8.3 279.9L-7.6 282.1L-4.9 284.4L10.0 281.0L9.5 285.6L3.1 297.0L-6.0 305.0L-11.7 312.5L-16.3 318.7L-17.4 324.4L-14.0 332.4L-14.0 342.6L-22.0 348.4L-26.6 354.1L-25.4 363.2L-31.6 367.8L-32.3 373.5L-36.9 379.2L-44.8 385.6L-56.3 386.7L-60.8 387.9L-64.5 386.5L-65.4 381.5L-72.2 370.0L-73.4 359.8L-79.1 349.5L-78.0 338.1L-75.7 328.9L-79.1 321.0L-84.8 313.0L-84.8 300.4L-87.1 298.1L-92.8 298.6L-96.2 294.0L-104.2 295.2L-113.3 297.0L-123.6 298.4L-132.8 292.4L-137.3 286.7L-140.7 283.3L-145.3 274.8L-143.7 265.0L-145.3 260.5L-143.0 254.7L-139.6 249.0L-136.2 244.9L-129.3 241.0L-128.6 236.5L-122.0 230.8ZM702.0 226.7L710.9 228.0L722.3 224.4L738.3 223.2L740.6 230.8L749.7 234.6L761.2 237.6L761.2 233.5L768.0 234.2L781.7 237.6L789.2 237.2L789.7 239.9L793.1 246.8L796.6 254.7L800.4 260.5L803.4 267.3L805.7 273.0L813.7 279.9L814.4 282.1L817.1 284.4L831.9 281.0L831.5 285.6L825.1 297.0L816.0 305.0L810.3 312.5L805.7 318.7L804.5 324.4L808.0 332.4L808.0 342.6L800.0 348.4L795.4 354.1L796.6 363.2L790.4 367.8L789.7 373.5L785.1 379.2L777.1 385.6L765.7 386.7L761.2 387.9L757.5 386.5L756.6 381.5L749.7 370.0L748.6 359.8L742.9 349.5L744.0 338.1L746.3 328.9L742.9 321.0L737.2 313.0L737.2 300.4L734.9 298.1L729.2 298.6L725.8 294.0L717.8 295.2L708.6 297.0L698.4 298.4L689.2 292.4L684.7 286.7L681.2 283.3L676.7 274.8L678.3 265.0L676.7 260.5L679.0 254.7L682.4 249.0L685.8 244.9L692.7 241.0L693.3 236.5L700.0 230.8ZM152.7 358.6L153.8 367.8L156.1 376.9L156.1 386.0L162.9 388.3L175.5 386.0L181.2 382.2L188.1 380.8L193.8 380.3L199.5 383.3L202.9 387.9L208.1 383.7L208.6 389.5L213.2 394.0L221.2 396.8L227.6 397.4L236.0 394.0L238.3 386.0L242.9 379.2L244.0 371.2L238.3 363.2L234.9 358.6L229.2 352.9L226.9 349.5L225.3 342.6L221.2 340.4L218.9 333.1L217.1 338.1L216.6 344.9L214.3 348.4L210.9 347.2L206.3 344.5L202.9 342.6L205.9 336.3L201.8 335.8L196.0 334.0L192.6 336.3L189.9 339.2L189.2 342.6L185.8 342.6L182.3 340.4L178.9 343.8L175.5 347.9L172.5 349.5L170.9 352.9L165.2 354.1L159.5 355.7L154.9 357.9ZM548.8 129.8L560.2 125.7L573.9 121.6L601.3 120.3L635.6 117.7L658.4 118.9L676.7 122.3L688.1 122.3L672.1 128.0L673.3 133.7L669.8 139.4L665.3 144.0L664.1 148.1L656.1 152.0L642.4 153.1L631.0 158.4L623.0 161.1L618.5 168.0L613.9 171.4L605.9 169.6L599.0 163.4L593.3 156.6L594.5 150.9L599.0 148.6L591.1 146.7L589.9 142.9L583.1 136.0L564.8 134.9L553.4 132.6ZM331.9 158.6L341.0 156.6L345.6 155.4L336.5 152.0L357.0 145.8L393.5 149.3L407.2 150.9L423.2 148.6L441.5 149.7L452.9 153.1L466.6 153.1L482.6 153.1L496.3 153.1L500.9 144.5L510.0 150.9L519.1 154.3L528.3 149.7L529.4 155.4L519.1 157.7L514.6 162.3L503.1 166.8L499.7 173.7L504.3 178.3L514.6 179.4L527.1 182.8L528.3 187.8L535.1 191.3L535.1 184.0L540.8 179.4L536.3 174.1L538.5 166.2L547.7 166.4L555.7 169.1L557.9 174.4L567.1 170.9L573.9 177.1L578.5 182.8L587.6 189.7L578.5 193.8L563.7 193.8L555.7 199.9L567.1 196.5L568.2 201.1L576.2 204.5L564.8 209.1L562.5 205.7L555.7 208.6L554.5 212.5L546.5 215.5L545.4 218.7L542.0 221.6L542.0 228.5L536.3 231.2L530.5 235.3L529.9 239.9L532.8 246.8L531.7 250.9L528.7 249.0L526.4 244.5L523.7 239.9L514.6 239.2L511.1 241.7L500.9 241.0L494.0 244.5L492.9 251.3L492.2 258.2L496.3 265.0L499.7 266.8L506.6 266.2L508.9 260.5L516.8 259.3L515.7 266.2L513.4 271.9L519.1 272.3L525.5 274.2L524.4 283.3L527.1 287.9L532.8 287.4L538.5 289.0L537.9 291.3L534.0 288.3L531.7 291.7L526.0 289.4L520.3 285.6L515.7 278.7L506.6 276.4L499.7 271.4L494.0 272.3L483.7 268.4L474.6 262.7L474.6 257.0L466.6 249.0L458.6 241.0L453.6 236.0L454.1 239.9L458.6 245.6L463.2 252.5L465.5 255.9L459.8 251.3L454.1 244.5L450.6 238.8L447.9 233.7L440.4 229.6L436.9 224.4L432.8 218.2L431.7 211.4L432.4 202.9L430.8 197.9L435.8 199.9L434.6 196.5L430.1 194.2L423.7 190.8L418.0 184.0L411.8 178.3L403.8 174.8L395.8 171.9L382.1 169.8L373.0 172.5L368.4 169.1L363.9 174.8L354.7 179.4L342.2 183.3L349.0 174.8L344.5 171.4L336.5 168.0L339.9 164.6L347.9 162.3L338.8 161.1ZM538.5 289.0L543.1 283.7L551.1 281.0L552.2 283.7L555.7 281.0L560.2 284.2L569.4 284.4L574.4 284.0L578.5 289.0L585.3 294.7L593.3 295.6L599.0 298.8L601.3 307.3L605.9 310.7L613.9 314.1L624.2 314.8L631.0 319.4L635.6 323.2L635.6 328.9L629.9 334.7L626.4 340.4L626.4 349.0L622.3 357.5L617.3 360.9L609.3 363.2L604.3 368.9L604.1 373.5L599.0 379.2L593.3 386.0L586.5 387.9L582.4 386.0L585.3 391.7L583.1 396.3L573.9 397.4L572.8 402.0L567.1 402.0L569.8 406.1L565.9 411.1L561.4 413.4L564.8 418.0L557.9 423.7L559.1 428.3L565.9 433.5L559.1 435.1L551.1 431.7L544.7 428.3L543.1 420.3L545.4 413.4L548.8 404.3L547.0 395.2L550.0 388.3L552.2 379.2L552.7 370.0L555.0 360.9L555.0 350.6L550.0 347.2L542.0 341.1L538.5 334.7L534.0 325.5L530.1 319.8L532.8 314.8L530.5 310.7L532.8 306.6L535.6 304.5L539.0 299.3L538.5 292.4Z" fill="#6a7259"/><path d="M6.1 335.8L8.8 343.8L5.4 351.8L2.0 364.3L-3.7 366.6L-7.2 360.9L-5.3 354.1L-6.0 347.2L-0.3 343.8L3.1 339.2ZM828.1 335.8L830.8 343.8L827.4 351.8L824.0 364.3L818.2 366.6L814.8 360.9L816.6 354.1L816.0 347.2L821.7 343.8L825.1 339.2ZM223.9 401.3L231.9 401.6L232.1 404.3L230.3 407.7L226.9 407.7L225.0 404.8ZM287.8 386.9L291.9 391.3L295.4 394.0L301.1 394.5L297.7 398.6L293.8 403.4L292.4 402.7L293.1 399.7L290.3 398.1L292.6 395.2L291.9 392.2ZM287.8 400.9L291.5 403.6L288.1 407.7L284.4 409.6L282.8 413.4L278.2 414.8L273.7 413.4L277.1 409.6L282.8 406.6L286.2 403.2ZM192.6 310.2L199.5 310.2L201.8 315.9L207.5 312.5L215.5 314.3L223.4 317.1L226.9 321.0L231.0 322.6L229.2 324.4L232.6 328.9L237.1 332.1L230.3 331.2L226.9 327.8L221.2 328.5L217.7 329.4L213.2 326.7L209.1 327.6L209.7 324.4L206.3 319.8L200.6 317.5L197.2 317.5L194.9 314.8L199.0 313.4L193.8 311.8ZM232.1 321.0L237.1 321.0L241.0 318.0L240.6 320.5L237.1 322.8L232.6 322.1ZM142.4 305.0L144.7 304.3L148.1 302.0L151.5 301.1L156.1 297.0L160.2 292.4L165.2 296.5L162.5 299.3L164.8 306.1L161.8 307.3L159.5 311.8L159.1 317.5L154.9 317.5L151.5 315.7L148.1 315.9L144.7 311.8L142.4 308.4ZM111.1 295.6L116.1 296.5L121.8 302.2L129.8 308.4L132.1 313.0L135.5 315.9L135.1 321.6L132.1 321.6L126.4 317.5L123.0 311.8L118.9 304.5L115.0 300.4ZM133.7 323.9L136.7 322.1L141.2 323.5L146.5 323.0L150.8 324.4L154.9 326.0L154.9 328.3L147.0 327.4L140.1 326.2L136.2 325.3ZM166.4 321.0L168.6 321.0L168.2 315.2L170.9 318.7L173.7 319.4L172.5 315.7L170.2 313.0L174.8 310.5L170.9 310.5L168.0 307.7L169.8 307.3L175.5 307.5L178.9 305.0L177.8 306.1L173.2 306.1L169.3 305.4L167.0 307.3L166.8 310.7L165.9 315.7ZM175.5 331.9L177.8 329.4L183.5 327.6L182.3 328.9L177.8 331.7ZM158.4 327.6L165.2 327.6L174.4 327.4L173.2 328.5L165.2 328.5L160.2 328.9ZM184.6 303.8L186.9 305.0L186.9 308.4L185.8 310.2L184.6 307.3ZM185.8 315.2L192.2 315.2L191.5 316.8L186.9 316.4ZM168.6 266.2L172.5 266.2L172.8 270.7L170.9 274.2L172.1 276.4L176.6 277.6L176.6 279.9L173.2 277.6L169.8 277.1L168.6 275.3L167.5 271.9ZM172.1 292.4L175.5 288.5L180.1 286.0L182.3 290.1L181.7 294.0L180.1 295.2L176.6 293.6L174.8 291.3ZM172.1 281.5L174.8 282.1L178.9 279.9L180.1 283.3L177.8 285.6L175.0 287.2L173.2 285.6L172.1 284.4ZM161.1 289.0L166.4 284.4L166.4 282.6L164.1 285.6L160.7 288.3ZM169.8 250.9L172.1 251.3L169.3 258.2L167.7 255.9L168.2 252.9ZM141.7 264.6L143.5 262.5L147.0 263.2L145.8 266.2L142.4 266.6ZM216.1 213.9L217.7 218.2L215.5 221.6L215.0 226.2L213.2 228.0L210.2 229.2L206.3 229.4L203.4 231.9L201.8 229.6L196.0 230.3L192.6 230.8L192.6 229.4L196.0 227.3L202.9 227.1L205.9 223.9L209.7 223.2L212.7 219.4L213.2 215.9ZM213.2 213.6L215.5 211.4L220.5 212.5L225.7 209.5L223.0 207.9L217.1 204.5L216.6 209.1L213.9 210.2L213.2 212.5ZM190.3 231.9L192.6 231.0L194.4 233.1L192.6 236.9L190.8 237.2L189.9 233.7ZM196.0 231.2L199.9 230.1L201.1 231.2L198.3 232.1L196.7 233.5L195.6 232.1ZM217.7 184.4L220.0 187.4L220.7 194.2L223.4 196.5L220.0 201.1L220.7 202.9L217.7 203.4L217.7 198.8L217.7 193.1L217.3 188.5ZM76.2 286.3L80.3 291.3L78.5 294.5L76.2 294.5L75.7 290.1ZM702.9 194.2L708.6 192.9L718.5 191.5L719.4 188.1L716.0 187.4L715.0 184.4L711.8 181.7L710.5 180.5L711.4 177.1L706.4 176.9L708.2 174.6L704.1 174.6L701.8 177.6L702.9 181.0L704.5 183.3L708.6 184.6L708.2 186.7L705.2 186.9L705.9 189.0L703.6 190.1L708.2 191.0L705.7 191.7ZM701.8 189.2L701.3 185.1L702.7 183.7L700.7 182.4L696.8 182.4L692.7 184.6L693.8 186.9L692.0 189.7L693.6 190.8L697.2 190.1ZM664.1 162.5L672.6 163.6L681.7 161.6L684.4 159.5L681.2 157.2L674.4 157.2L667.5 158.8L663.0 157.0L660.7 158.8L665.3 160.0L661.2 160.4L665.3 161.6ZM532.8 140.1L542.0 141.7L560.2 147.4L573.9 155.9L569.4 164.6L559.1 166.2L551.1 162.3L537.4 161.1L547.7 156.6L548.8 152.0L535.1 148.6L519.1 147.9L512.3 142.9L521.4 139.9ZM448.3 145.1L468.9 141.7L478.0 146.3L483.7 149.7L471.2 151.3L457.5 152.0L448.3 148.6ZM510.0 133.7L532.8 134.2L542.0 129.2L567.1 123.5L573.9 120.0L544.2 118.9L514.6 121.2L505.4 124.6L519.1 129.2ZM430.1 144.0L441.5 145.1L450.6 140.6L446.1 136.0L432.4 138.3ZM496.3 137.2L510.0 138.1L532.8 137.8L531.7 135.6L510.0 134.9L496.3 133.7ZM450.6 137.2L473.5 137.6L475.7 134.9L464.3 133.7L448.3 134.4ZM580.1 199.5L587.6 201.5L594.5 201.8L595.2 199.5L592.7 195.4L588.3 190.8L584.7 193.1L581.9 196.5ZM521.9 258.4L527.1 255.7L534.0 256.3L543.1 261.1L546.1 262.3L538.5 263.0L537.4 261.1L531.7 258.2L528.3 257.3ZM545.6 266.4L548.8 263.0L555.7 263.2L559.3 265.9L554.5 266.8L551.1 266.8ZM11.1 145.1L19.1 147.0L24.8 144.0L21.4 139.4L30.5 134.9L48.8 132.6L44.2 136.0L28.2 139.4L19.1 142.9ZM740.6 126.9L747.5 131.4L754.3 133.3L763.4 129.2L777.1 125.7L761.2 124.6L747.5 125.7Z" fill="#4e5c4c" opacity=".75" filter="url(#mb3)"/><path d="M0.8 205.7L5.4 202.2L11.1 201.1L14.5 205.7L10.0 206.8L13.4 212.5L16.8 217.1L15.7 223.9L8.8 223.9L5.4 220.5L6.5 215.9L2.0 210.2Z" fill="#14202c" stroke="#8fcf8f" stroke-width="1"/><path d="M822.8 205.7L827.4 202.2L833.1 201.1L836.5 205.7L831.9 206.8L835.4 212.5L838.8 217.1L837.7 223.9L830.8 223.9L827.4 220.5L828.5 215.9L824.0 210.2Z" fill="#14202c" stroke="#8fcf8f" stroke-width="1"/><g clip-path="url(#landclip)"><g filter="url(#mb)"><ellipse cx="110" cy="213" rx="70" ry="22" fill="#7e7a63" opacity="1"/><ellipse cx="42" cy="217" rx="40" ry="18" fill="#7c7862" opacity="1"/><ellipse cx="31" cy="240" rx="30" ry="14" fill="#857e66" opacity="1"/><ellipse cx="3" cy="254" rx="18" ry="22" fill="#8c846c" opacity="1"/><ellipse cx="94" cy="233" rx="22" ry="8" fill="#7d7a6a" opacity="1"/><ellipse cx="122" cy="167" rx="110" ry="22" fill="#5c6850" opacity="1"/><ellipse cx="145" cy="244" rx="30" ry="18" fill="#66705a" opacity="1"/><ellipse cx="72" cy="263" rx="18" ry="20" fill="#6e7058" opacity="1"/><ellipse cx="126" cy="274" rx="16" ry="22" fill="#5a664e" opacity="1"/><ellipse cx="197" cy="365" rx="40" ry="24" fill="#84785c" opacity="1"/><ellipse cx="227" cy="377" rx="12" ry="26" fill="#687056" opacity="1"/><ellipse cx="743" cy="256" rx="80" ry="24" fill="#8e8668" opacity="1"/><ellipse cx="766" cy="304" rx="30" ry="18" fill="#55624a" opacity="1"/><ellipse cx="770" cy="359" rx="22" ry="22" fill="#767058" opacity="1"/><ellipse cx="750" cy="199" rx="50" ry="16" fill="#5e6a52" opacity="1"/><ellipse cx="487" cy="217" rx="45" ry="22" fill="#6a6e56" opacity="1"/><ellipse cx="464" cy="228" rx="20" ry="16" fill="#7a765e" opacity="1"/><ellipse cx="487" cy="171" rx="80" ry="20" fill="#58624e" opacity="1"/><ellipse cx="578" cy="327" rx="45" ry="30" fill="#4e5e48" opacity="1"/><ellipse cx="565" cy="388" rx="14" ry="40" fill="#74705a" opacity="1"/><ellipse cx="624" cy="139" rx="38" ry="28" fill="#c8c8c8" opacity="1"/></g><g filter="url(#mb3)"><path d="M560.2 130.3L589.9 123.5L647.0 121.2L669.8 128.0L665.3 141.7L651.6 149.7L624.2 157.7L615.0 166.8L605.9 162.3L599.0 150.9L589.9 139.4Z" fill="#ececec"/></g></g><path d="M-517.5 487.0L-483.2 487.2L-467.3 484.2L-449.0 481.9L-426.2 479.6L-403.3 478.0L-380.5 477.4L-357.7 478.5L-334.8 475.1L-312.0 475.1L-289.2 475.5L-277.7 470.5L-261.8 463.7L-252.6 456.8L-238.9 452.9L-243.5 456.8L-248.1 463.7L-245.8 472.8L-243.5 479.6L-254.9 484.2L-220.7 486.5L-197.8 486.5L-186.4 485.4L-170.4 480.8L-152.2 475.1L-133.9 471.7L-117.9 469.4L-106.5 468.2L-83.7 468.2L-60.8 468.2L-38.0 467.1L-19.7 467.1L-3.7 462.5L12.2 459.1L25.9 461.4L41.9 463.0L53.3 464.8L62.5 467.8L71.6 464.8L87.6 460.2L110.4 459.1L133.3 459.1L156.1 459.6L178.9 459.8L201.8 459.1L217.7 460.9L236.0 464.3L258.8 468.2L277.1 471.7L284.0 472.8L272.5 479.6L268.0 486.5L281.7 487.2L304.5 487.0L304.5 513.9L-517.5 513.9Z" fill="#eef1f4"/><path d="M304.5 487.0L338.8 487.2L354.7 484.2L373.0 481.9L395.8 479.6L418.7 478.0L441.5 477.4L464.3 478.5L487.2 475.1L510.0 475.1L532.8 475.5L544.2 470.5L560.2 463.7L569.4 456.8L583.1 452.9L578.5 456.8L573.9 463.7L576.2 472.8L578.5 479.6L567.1 484.2L601.3 486.5L624.2 486.5L635.6 485.4L651.6 480.8L669.8 475.1L688.1 471.7L704.1 469.4L715.5 468.2L738.3 468.2L761.2 468.2L784.0 467.1L802.3 467.1L818.2 462.5L834.2 459.1L847.9 461.4L863.9 463.0L875.3 464.8L884.5 467.8L893.6 464.8L909.6 460.2L932.4 459.1L955.2 459.1L978.1 459.6L1000.9 459.8L1023.7 459.1L1039.7 460.9L1058.0 464.3L1080.8 468.2L1099.1 471.7L1105.9 472.8L1094.5 479.6L1090.0 486.5L1103.7 487.2L1126.5 487.0L1126.5 513.9L304.5 513.9Z" fill="#eef1f4"/><g filter="url(#mb2)" opacity=".8"><ellipse cx="110" cy="126" rx="22" ry="3" fill="#9aa4ac" opacity=".5"/><ellipse cx="31" cy="128" rx="14" ry="3" fill="#9aa4ac" opacity=".5"/><ellipse cx="213" cy="135" rx="16" ry="2" fill="#9aa4ac" opacity=".5"/><ellipse cx="761" cy="128" rx="14" ry="3" fill="#9aa4ac" opacity=".5"/><ellipse cx="487" cy="130" rx="40" ry="4" fill="#9aa4ac" opacity=".5"/></g><path d="M0 100L0.0 147.2L3.0 146.7L6.0 146.3L9.0 145.9L12.0 145.5L15.0 145.2L18.0 144.8L21.0 144.5L24.0 144.3L27.0 144.0L30.0 143.8L33.0 143.6L36.0 143.4L39.0 143.2L42.0 143.1L45.0 143.0L48.0 142.8L51.0 142.8L54.0 142.7L57.0 142.7L60.0 142.6L63.0 142.6L66.0 142.6L69.0 142.7L72.0 142.7L75.0 142.8L78.0 142.9L81.0 143.0L84.0 143.2L87.0 143.3L90.0 143.5L93.0 143.7L96.0 143.9L99.0 144.2L102.0 144.4L105.0 144.7L108.0 145.0L111.0 145.4L114.0 145.8L117.0 146.2L120.0 146.6L123.0 147.0L126.0 147.5L129.0 148.1L132.0 148.6L135.0 149.2L138.0 149.8L141.0 150.5L144.0 151.2L147.0 152.0L150.0 152.8L153.0 153.6L156.0 154.5L159.0 155.5L162.0 156.5L165.0 157.6L168.0 158.7L171.0 159.9L174.0 161.2L177.0 162.6L180.0 164.1L183.0 165.7L186.0 167.4L189.0 169.2L192.0 171.1L195.0 173.2L198.0 175.4L201.0 177.7L204.0 180.3L207.0 183.0L210.0 185.9L213.0 189.1L216.0 192.5L219.0 196.2L222.0 200.2L225.0 204.4L228.0 209.1L231.0 214.1L234.0 219.5L237.0 225.3L240.0 231.5L243.0 238.2L246.0 245.4L249.0 253.1L252.0 261.2L255.0 269.7L258.0 278.6L261.0 287.8L264.0 297.2L267.0 306.8L270.0 316.3L273.0 325.8L276.0 335.1L279.0 344.1L282.0 352.8L285.0 361.0L288.0 368.8L291.0 376.2L294.0 383.0L297.0 389.4L300.0 395.4L303.0 400.9L306.0 406.1L309.0 410.8L312.0 415.2L315.0 419.3L318.0 423.1L321.0 426.6L324.0 429.8L327.0 432.8L330.0 435.6L333.0 438.2L336.0 440.6L339.0 442.9L342.0 445.0L345.0 447.0L348.0 448.8L351.0 450.5L354.0 452.2L357.0 453.7L360.0 455.1L363.0 456.4L366.0 457.7L369.0 458.8L372.0 460.0L375.0 461.0L378.0 462.0L381.0 462.9L384.0 463.8L387.0 464.6L390.0 465.3L393.0 466.1L396.0 466.8L399.0 467.4L402.0 468.0L405.0 468.6L408.0 469.1L411.0 469.6L414.0 470.1L417.0 470.5L420.0 470.9L423.0 471.3L426.0 471.6L429.0 472.0L432.0 472.3L435.0 472.5L438.0 472.8L441.0 473.0L444.0 473.2L447.0 473.4L450.0 473.6L453.0 473.7L456.0 473.9L459.0 474.0L462.0 474.0L465.0 474.1L468.0 474.1L471.0 474.2L474.0 474.2L477.0 474.2L480.0 474.1L483.0 474.1L486.0 474.0L489.0 473.9L492.0 473.8L495.0 473.6L498.0 473.5L501.0 473.3L504.0 473.1L507.0 472.9L510.0 472.6L513.0 472.4L516.0 472.1L519.0 471.7L522.0 471.4L525.0 471.0L528.0 470.6L531.0 470.2L534.0 469.8L537.0 469.3L540.0 468.7L543.0 468.2L546.0 467.6L549.0 467.0L552.0 466.3L555.0 465.6L558.0 464.8L561.0 464.0L564.0 463.2L567.0 462.3L570.0 461.3L573.0 460.3L576.0 459.2L579.0 458.1L582.0 456.9L585.0 455.5L588.0 454.2L591.0 452.7L594.0 451.1L597.0 449.4L600.0 447.6L603.0 445.7L606.0 443.6L609.0 441.4L612.0 439.1L615.0 436.5L618.0 433.8L621.0 430.9L624.0 427.7L627.0 424.3L630.0 420.6L633.0 416.6L636.0 412.4L639.0 407.7L642.0 402.7L645.0 397.3L648.0 391.5L651.0 385.3L654.0 378.5L657.0 371.4L660.0 363.7L663.0 355.6L666.0 347.1L669.0 338.2L672.0 329.0L675.0 319.6L678.0 310.0L681.0 300.5L684.0 291.0L687.0 281.7L690.0 272.7L693.0 264.0L696.0 255.8L699.0 248.0L702.0 240.6L705.0 233.7L708.0 227.3L711.0 221.4L714.0 215.8L717.0 210.7L720.0 206.0L723.0 201.6L726.0 197.5L729.0 193.7L732.0 190.2L735.0 187.0L738.0 184.0L741.0 181.2L744.0 178.6L747.0 176.1L750.0 173.9L753.0 171.8L756.0 169.8L759.0 168.0L762.0 166.3L765.0 164.6L768.0 163.1L771.0 161.7L774.0 160.4L777.0 159.1L780.0 157.9L783.0 156.8L786.0 155.8L789.0 154.8L792.0 153.9L795.0 153.0L798.0 152.2L801.0 151.4L804.0 150.7L807.0 150.0L810.0 149.4L813.0 148.8L816.0 148.2L819.0 147.7L822.0 147.2L822 100Z" fill="#000" opacity="0.28"/><path d="M0 100L0.0 132.0L3.0 131.7L6.0 131.4L9.0 131.1L12.0 130.9L15.0 130.6L18.0 130.4L21.0 130.2L24.0 130.0L27.0 129.8L30.0 129.7L33.0 129.6L36.0 129.4L39.0 129.3L42.0 129.2L45.0 129.1L48.0 129.1L51.0 129.0L54.0 129.0L57.0 129.0L60.0 128.9L63.0 128.9L66.0 128.9L69.0 129.0L72.0 129.0L75.0 129.1L78.0 129.1L81.0 129.2L84.0 129.3L87.0 129.4L90.0 129.5L93.0 129.6L96.0 129.8L99.0 130.0L102.0 130.1L105.0 130.3L108.0 130.5L111.0 130.8L114.0 131.0L117.0 131.3L120.0 131.6L123.0 131.9L126.0 132.2L129.0 132.5L132.0 132.9L135.0 133.3L138.0 133.7L141.0 134.2L144.0 134.7L147.0 135.2L150.0 135.7L153.0 136.3L156.0 136.9L159.0 137.5L162.0 138.2L165.0 138.9L168.0 139.7L171.0 140.6L174.0 141.4L177.0 142.4L180.0 143.4L183.0 144.5L186.0 145.6L189.0 146.9L192.0 148.2L195.0 149.6L198.0 151.2L201.0 152.8L204.0 154.6L207.0 156.5L210.0 158.6L213.0 160.9L216.0 163.3L219.0 166.0L222.0 168.9L225.0 172.1L228.0 175.5L231.0 179.3L234.0 183.4L237.0 188.0L240.0 192.9L243.0 198.3L246.0 204.2L249.0 210.6L252.0 217.6L255.0 225.1L258.0 233.1L261.0 241.7L264.0 250.7L267.0 260.1L270.0 269.7L273.0 279.5L276.0 289.4L279.0 299.2L282.0 308.8L285.0 318.2L288.0 327.2L291.0 335.8L294.0 344.0L297.0 351.7L300.0 359.0L303.0 365.8L306.0 372.1L309.0 378.1L312.0 383.6L315.0 388.8L318.0 393.6L321.0 398.0L324.0 402.2L327.0 406.1L330.0 409.7L333.0 413.1L336.0 416.2L339.0 419.2L342.0 421.9L345.0 424.5L348.0 426.9L351.0 429.2L354.0 431.3L357.0 433.3L360.0 435.1L363.0 436.9L366.0 438.6L369.0 440.1L372.0 441.6L375.0 442.9L378.0 444.2L381.0 445.5L384.0 446.6L387.0 447.7L390.0 448.7L393.0 449.7L396.0 450.6L399.0 451.4L402.0 452.2L405.0 453.0L408.0 453.7L411.0 454.4L414.0 455.0L417.0 455.6L420.0 456.1L423.0 456.6L426.0 457.1L429.0 457.5L432.0 457.9L435.0 458.3L438.0 458.6L441.0 458.9L444.0 459.2L447.0 459.5L450.0 459.7L453.0 459.9L456.0 460.0L459.0 460.2L462.0 460.3L465.0 460.4L468.0 460.4L471.0 460.5L474.0 460.5L477.0 460.4L480.0 460.4L483.0 460.3L486.0 460.2L489.0 460.1L492.0 459.9L495.0 459.8L498.0 459.5L501.0 459.3L504.0 459.0L507.0 458.7L510.0 458.4L513.0 458.1L516.0 457.7L519.0 457.2L522.0 456.8L525.0 456.3L528.0 455.8L531.0 455.2L534.0 454.6L537.0 453.9L540.0 453.2L543.0 452.5L546.0 451.7L549.0 450.9L552.0 450.0L555.0 449.1L558.0 448.1L561.0 447.0L564.0 445.9L567.0 444.7L570.0 443.4L573.0 442.0L576.0 440.6L579.0 439.1L582.0 437.5L585.0 435.7L588.0 433.9L591.0 432.0L594.0 429.9L597.0 427.7L600.0 425.3L603.0 422.8L606.0 420.1L609.0 417.2L612.0 414.2L615.0 410.9L618.0 407.3L621.0 403.5L624.0 399.5L627.0 395.1L630.0 390.4L633.0 385.4L636.0 380.0L639.0 374.2L642.0 368.0L645.0 361.3L648.0 354.2L651.0 346.6L654.0 338.6L657.0 330.1L660.0 321.3L663.0 312.0L666.0 302.5L669.0 292.7L672.0 282.9L675.0 273.0L678.0 263.3L681.0 253.8L684.0 244.7L687.0 236.0L690.0 227.8L693.0 220.1L696.0 212.9L699.0 206.3L702.0 200.3L705.0 194.7L708.0 189.6L711.0 184.9L714.0 180.7L717.0 176.8L720.0 173.2L723.0 169.9L726.0 167.0L729.0 164.2L732.0 161.7L735.0 159.4L738.0 157.2L741.0 155.2L744.0 153.4L747.0 151.7L750.0 150.1L753.0 148.7L756.0 147.3L759.0 146.1L762.0 144.9L765.0 143.8L768.0 142.7L771.0 141.8L774.0 140.9L777.0 140.0L780.0 139.2L783.0 138.5L786.0 137.8L789.0 137.1L792.0 136.5L795.0 135.9L798.0 135.3L801.0 134.8L804.0 134.3L807.0 133.9L810.0 133.4L813.0 133.0L816.0 132.7L819.0 132.3L822.0 132.0L822 100Z" fill="#000" opacity="0.24"/><path d="M0 100L0.0 116.7L3.0 116.6L6.0 116.4L9.0 116.3L12.0 116.2L15.0 116.1L18.0 115.9L21.0 115.8L24.0 115.8L27.0 115.7L30.0 115.6L33.0 115.5L36.0 115.5L39.0 115.4L42.0 115.4L45.0 115.3L48.0 115.3L51.0 115.3L54.0 115.3L57.0 115.2L60.0 115.2L63.0 115.2L66.0 115.2L69.0 115.2L72.0 115.3L75.0 115.3L78.0 115.3L81.0 115.4L84.0 115.4L87.0 115.5L90.0 115.5L93.0 115.6L96.0 115.6L99.0 115.7L102.0 115.8L105.0 115.9L108.0 116.0L111.0 116.1L114.0 116.2L117.0 116.4L120.0 116.5L123.0 116.7L126.0 116.8L129.0 117.0L132.0 117.2L135.0 117.4L138.0 117.6L141.0 117.8L144.0 118.0L147.0 118.3L150.0 118.5L153.0 118.8L156.0 119.1L159.0 119.4L162.0 119.8L165.0 120.1L168.0 120.5L171.0 121.0L174.0 121.4L177.0 121.9L180.0 122.4L183.0 122.9L186.0 123.5L189.0 124.2L192.0 124.8L195.0 125.6L198.0 126.4L201.0 127.3L204.0 128.2L207.0 129.2L210.0 130.3L213.0 131.6L216.0 132.9L219.0 134.4L222.0 136.1L225.0 137.9L228.0 139.9L231.0 142.2L234.0 144.7L237.0 147.6L240.0 150.8L243.0 154.4L246.0 158.6L249.0 163.2L252.0 168.5L255.0 174.5L258.0 181.3L261.0 188.8L264.0 197.1L267.0 206.2L270.0 216.0L273.0 226.3L276.0 237.1L279.0 248.1L282.0 259.2L285.0 270.2L288.0 280.9L291.0 291.3L294.0 301.3L297.0 310.7L300.0 319.7L303.0 328.1L306.0 336.0L309.0 343.4L312.0 350.3L315.0 356.8L318.0 362.8L321.0 368.4L324.0 373.6L327.0 378.4L330.0 383.0L333.0 387.2L336.0 391.2L339.0 394.9L342.0 398.3L345.0 401.6L348.0 404.6L351.0 407.4L354.0 410.1L357.0 412.6L360.0 414.9L363.0 417.1L366.0 419.2L369.0 421.2L372.0 423.0L375.0 424.7L378.0 426.4L381.0 427.9L384.0 429.4L387.0 430.7L390.0 432.0L393.0 433.2L396.0 434.4L399.0 435.4L402.0 436.4L405.0 437.4L408.0 438.3L411.0 439.1L414.0 439.9L417.0 440.6L420.0 441.3L423.0 441.9L426.0 442.5L429.0 443.1L432.0 443.6L435.0 444.0L438.0 444.5L441.0 444.9L444.0 445.2L447.0 445.5L450.0 445.8L453.0 446.0L456.0 446.2L459.0 446.4L462.0 446.5L465.0 446.7L468.0 446.7L471.0 446.8L474.0 446.8L477.0 446.7L480.0 446.7L483.0 446.6L486.0 446.5L489.0 446.3L492.0 446.1L495.0 445.9L498.0 445.6L501.0 445.3L504.0 445.0L507.0 444.6L510.0 444.2L513.0 443.7L516.0 443.2L519.0 442.7L522.0 442.1L525.0 441.5L528.0 440.9L531.0 440.1L534.0 439.4L537.0 438.6L540.0 437.7L543.0 436.8L546.0 435.8L549.0 434.7L552.0 433.6L555.0 432.4L558.0 431.2L561.0 429.8L564.0 428.4L567.0 426.9L570.0 425.3L573.0 423.6L576.0 421.8L579.0 419.9L582.0 417.9L585.0 415.7L588.0 413.4L591.0 411.0L594.0 408.3L597.0 405.6L600.0 402.6L603.0 399.4L606.0 396.1L609.0 392.4L612.0 388.6L615.0 384.4L618.0 380.0L621.0 375.3L624.0 370.2L627.0 364.7L630.0 358.8L633.0 352.5L636.0 345.8L639.0 338.6L642.0 330.8L645.0 322.6L648.0 313.8L651.0 304.5L654.0 294.7L657.0 284.5L660.0 273.9L663.0 262.9L666.0 251.9L669.0 240.8L672.0 230.0L675.0 219.4L678.0 209.4L681.0 200.1L684.0 191.5L687.0 183.7L690.0 176.7L693.0 170.5L696.0 165.0L699.0 160.1L702.0 155.8L705.0 152.0L708.0 148.6L711.0 145.7L714.0 143.0L717.0 140.7L720.0 138.6L723.0 136.7L726.0 135.0L729.0 133.4L732.0 132.0L735.0 130.8L738.0 129.6L741.0 128.5L744.0 127.6L747.0 126.7L750.0 125.9L753.0 125.1L756.0 124.4L759.0 123.7L762.0 123.1L765.0 122.6L768.0 122.0L771.0 121.6L774.0 121.1L777.0 120.7L780.0 120.3L783.0 119.9L786.0 119.6L789.0 119.2L792.0 118.9L795.0 118.6L798.0 118.4L801.0 118.1L804.0 117.9L807.0 117.6L810.0 117.4L813.0 117.2L816.0 117.0L819.0 116.9L822.0 116.7L822 100Z" fill="#000" opacity="0.24"/><path d="M-127.0 223.9L-128.2 210.2L-109.9 209.1L-116.8 197.7L-109.9 197.2L-101.9 192.0L-97.4 188.5L-87.1 185.1L-88.2 178.3L-82.5 177.1L-83.7 184.0L-74.5 185.1L-63.1 184.0L-58.5 178.3L-51.7 177.1L-52.8 172.5L-38.0 171.4L-54.0 171.4L-57.4 169.1L-57.4 164.6L-49.4 158.8L-56.3 158.2L-66.5 166.8L-64.3 171.4L-68.8 178.3L-74.5 181.7L-78.0 180.5L-81.4 173.7L-90.5 176.0L-95.1 171.4L-95.1 166.8L-83.7 162.3L-74.5 154.3L-63.1 148.6L-49.4 146.3L-35.7 148.6L-12.9 155.4L-15.2 157.7L-31.1 156.6L-26.6 161.1L-15.2 161.1L-6.0 157.7L-6.0 152.0L16.8 152.0L30.5 150.9L48.8 152.0L46.5 146.3L51.1 141.7L60.2 145.1L62.5 153.1L67.0 145.1L76.2 142.9L92.2 137.2L117.3 134.9L131.0 131.0L151.5 139.4L167.5 141.7L183.5 141.7L190.3 146.3L213.2 142.9L236.0 146.3L258.8 149.3L281.7 148.6L304.5 150.9L327.3 157.7L320.5 161.1L302.2 160.0L297.7 165.7L281.7 171.4L265.7 176.0L263.4 182.8L252.0 192.0L249.7 178.3L258.8 168.0L247.4 172.5L220.0 172.5L201.8 184.0L215.5 187.4L213.2 198.8L201.8 209.1L192.6 211.4L185.8 217.1L189.2 226.2L182.3 229.6L181.2 222.8L178.9 218.2L170.9 219.4L172.1 215.9L162.9 219.4L165.2 222.8L173.2 223.9L166.4 228.5L169.8 235.3L172.1 239.9L167.5 249.0L158.4 255.9L152.7 258.2L144.7 260.5L140.1 259.3L135.5 263.9L141.2 273.0L143.1 281.0L136.7 285.6L133.3 288.5L133.3 285.6L127.5 281.0L123.0 277.6L120.7 283.3L123.0 292.4L129.8 299.3L131.0 305.0L124.1 301.6L122.5 294.7L118.0 290.1L118.4 281.0L116.1 270.7L109.3 271.9L108.1 265.0L103.6 259.3L99.0 258.2L92.2 260.5L87.6 263.9L76.9 274.2L76.2 283.3L70.5 290.1L67.0 283.3L60.2 269.6L59.5 260.5L53.3 260.5L51.1 257.0L46.5 252.5L33.9 251.3L23.7 250.2L22.5 246.8L12.2 245.6L7.7 239.9L3.1 239.9L7.7 247.9L11.1 251.3L16.8 253.6L22.1 249.0L23.7 253.6L30.0 257.0L24.8 265.0L19.1 269.6L12.2 271.9L-3.7 279.4L-7.6 279.4L-9.0 271.9L-17.4 259.3L-26.6 244.5L-26.8 241.0L-32.3 239.9L-32.7 237.2L-28.2 236.9L-24.8 228.5L-24.3 224.6L-33.4 225.7L-36.9 225.1L-43.7 224.4L-46.0 219.4L-44.8 215.9L-40.3 214.8L-31.1 212.5L-24.3 213.6L-11.7 213.6L-19.7 206.8L-22.0 205.0L-17.4 201.1L-26.6 203.4L-30.0 206.8L-31.1 203.4L-36.9 202.2L-41.4 207.9L-42.6 212.5L-40.7 214.3L-47.1 215.2L-51.7 215.9L-54.4 216.2L-52.8 221.6L-55.1 225.1L-58.5 221.6L-62.0 215.9L-63.1 212.5L-73.4 205.7L-75.7 204.1L-78.4 205.2L-78.0 207.9L-74.5 211.4L-70.0 213.0L-64.3 216.6L-67.7 215.9L-68.8 219.4L-70.0 221.6L-70.6 217.1L-78.0 213.2L-83.0 209.1L-86.4 207.0L-89.4 208.6L-98.5 209.5L-99.2 212.5L-105.4 215.5L-107.2 219.4L-111.1 224.4L-119.1 226.2L-121.3 223.9ZM694.9 223.9L693.8 210.2L712.1 209.1L705.2 197.7L712.1 197.2L720.1 192.0L724.6 188.5L734.9 185.1L733.8 178.3L739.5 177.1L738.3 184.0L747.5 185.1L758.9 184.0L763.4 178.3L770.3 177.1L769.2 172.5L784.0 171.4L768.0 171.4L764.6 169.1L764.6 164.6L772.6 158.8L765.7 158.2L755.5 166.8L757.7 171.4L753.2 178.3L747.5 181.7L744.0 180.5L740.6 173.7L731.5 176.0L726.9 171.4L726.9 166.8L738.3 162.3L747.5 154.3L758.9 148.6L772.6 146.3L786.3 148.6L809.1 155.4L806.8 157.7L790.8 156.6L795.4 161.1L806.8 161.1L816.0 157.7L816.0 152.0L838.8 152.0L852.5 150.9L870.8 152.0L868.5 146.3L873.0 141.7L882.2 145.1L884.5 153.1L889.0 145.1L898.2 142.9L914.1 137.2L939.3 134.9L953.0 131.0L973.5 139.4L989.5 141.7L1005.5 141.7L1012.3 146.3L1035.2 142.9L1058.0 146.3L1080.8 149.3L1103.7 148.6L1126.5 150.9L1149.3 157.7L1142.5 161.1L1124.2 160.0L1119.6 165.7L1103.7 171.4L1087.7 176.0L1085.4 182.8L1074.0 192.0L1071.7 178.3L1080.8 168.0L1069.4 172.5L1042.0 172.5L1023.7 184.0L1037.4 187.4L1035.2 198.8L1023.7 209.1L1014.6 211.4L1007.8 217.1L1011.2 226.2L1004.3 229.6L1003.2 222.8L1000.9 218.2L992.9 219.4L994.1 215.9L984.9 219.4L987.2 222.8L995.2 223.9L988.3 228.5L991.8 235.3L994.1 239.9L989.5 249.0L980.4 255.9L974.6 258.2L966.7 260.5L962.1 259.3L957.5 263.9L963.2 273.0L965.1 281.0L958.7 285.6L955.2 288.5L955.2 285.6L949.5 281.0L945.0 277.6L942.7 283.3L945.0 292.4L951.8 299.3L953.0 305.0L946.1 301.6L944.5 294.7L939.9 290.1L940.4 281.0L938.1 270.7L931.3 271.9L930.1 265.0L925.6 259.3L921.0 258.2L914.1 260.5L909.6 263.9L898.8 274.2L898.2 283.3L892.5 290.1L889.0 283.3L882.2 269.6L881.5 260.5L875.3 260.5L873.0 257.0L868.5 252.5L855.9 251.3L845.6 250.2L844.5 246.8L834.2 245.6L829.7 239.9L825.1 239.9L829.7 247.9L833.1 251.3L838.8 253.6L844.0 249.0L845.6 253.6L852.0 257.0L846.8 265.0L841.1 269.6L834.2 271.9L818.2 279.4L814.4 279.4L813.0 271.9L804.5 259.3L795.4 244.5L795.2 241.0L789.7 239.9L789.2 237.2L793.8 236.9L797.2 228.5L797.7 224.6L788.6 225.7L785.1 225.1L778.3 224.4L776.0 219.4L777.1 215.9L781.7 214.8L790.8 212.5L797.7 213.6L810.3 213.6L802.3 206.8L800.0 205.0L804.5 201.1L795.4 203.4L792.0 206.8L790.8 203.4L785.1 202.2L780.6 207.9L779.4 212.5L781.3 214.3L774.9 215.2L770.3 215.9L767.6 216.2L769.2 221.6L766.9 225.1L763.4 221.6L760.0 215.9L758.9 212.5L748.6 205.7L746.3 204.1L743.6 205.2L744.0 207.9L747.5 211.4L752.0 213.0L757.7 216.6L754.3 215.9L753.2 219.4L752.0 221.6L751.3 217.1L744.0 213.2L739.0 209.1L735.6 207.0L732.6 208.6L723.5 209.5L722.8 212.5L716.6 215.5L714.8 219.4L710.9 224.4L702.9 226.2L700.7 223.9ZM-120.0 226.7L-111.1 228.0L-99.6 224.4L-83.7 223.2L-81.4 230.8L-72.2 234.6L-60.8 237.6L-60.8 233.5L-54.0 234.2L-40.3 237.6L-32.7 237.2L-32.3 239.9L-28.9 246.8L-25.4 254.7L-21.6 260.5L-18.6 267.3L-16.3 273.0L-8.3 279.9L-7.6 282.1L-4.9 284.4L10.0 281.0L9.5 285.6L3.1 297.0L-6.0 305.0L-11.7 312.5L-16.3 318.7L-17.4 324.4L-14.0 332.4L-14.0 342.6L-22.0 348.4L-26.6 354.1L-25.4 363.2L-31.6 367.8L-32.3 373.5L-36.9 379.2L-44.8 385.6L-56.3 386.7L-60.8 387.9L-64.5 386.5L-65.4 381.5L-72.2 370.0L-73.4 359.8L-79.1 349.5L-78.0 338.1L-75.7 328.9L-79.1 321.0L-84.8 313.0L-84.8 300.4L-87.1 298.1L-92.8 298.6L-96.2 294.0L-104.2 295.2L-113.3 297.0L-123.6 298.4L-132.8 292.4L-137.3 286.7L-140.7 283.3L-145.3 274.8L-143.7 265.0L-145.3 260.5L-143.0 254.7L-139.6 249.0L-136.2 244.9L-129.3 241.0L-128.6 236.5L-122.0 230.8ZM702.0 226.7L710.9 228.0L722.3 224.4L738.3 223.2L740.6 230.8L749.7 234.6L761.2 237.6L761.2 233.5L768.0 234.2L781.7 237.6L789.2 237.2L789.7 239.9L793.1 246.8L796.6 254.7L800.4 260.5L803.4 267.3L805.7 273.0L813.7 279.9L814.4 282.1L817.1 284.4L831.9 281.0L831.5 285.6L825.1 297.0L816.0 305.0L810.3 312.5L805.7 318.7L804.5 324.4L808.0 332.4L808.0 342.6L800.0 348.4L795.4 354.1L796.6 363.2L790.4 367.8L789.7 373.5L785.1 379.2L777.1 385.6L765.7 386.7L761.2 387.9L757.5 386.5L756.6 381.5L749.7 370.0L748.6 359.8L742.9 349.5L744.0 338.1L746.3 328.9L742.9 321.0L737.2 313.0L737.2 300.4L734.9 298.1L729.2 298.6L725.8 294.0L717.8 295.2L708.6 297.0L698.4 298.4L689.2 292.4L684.7 286.7L681.2 283.3L676.7 274.8L678.3 265.0L676.7 260.5L679.0 254.7L682.4 249.0L685.8 244.9L692.7 241.0L693.3 236.5L700.0 230.8ZM331.9 158.6L341.0 156.6L345.6 155.4L336.5 152.0L357.0 145.8L393.5 149.3L407.2 150.9L423.2 148.6L441.5 149.7L452.9 153.1L466.6 153.1L482.6 153.1L496.3 153.1L500.9 144.5L510.0 150.9L519.1 154.3L528.3 149.7L529.4 155.4L519.1 157.7L514.6 162.3L503.1 166.8L499.7 173.7L504.3 178.3L514.6 179.4L527.1 182.8L528.3 187.8L535.1 191.3L535.1 184.0L540.8 179.4L536.3 174.1L538.5 166.2L547.7 166.4L555.7 169.1L557.9 174.4L567.1 170.9L573.9 177.1L578.5 182.8L587.6 189.7L578.5 193.8L563.7 193.8L555.7 199.9L567.1 196.5L568.2 201.1L576.2 204.5L564.8 209.1L562.5 205.7L555.7 208.6L554.5 212.5L546.5 215.5L545.4 218.7L542.0 221.6L542.0 228.5L536.3 231.2L530.5 235.3L529.9 239.9L532.8 246.8L531.7 250.9L528.7 249.0L526.4 244.5L523.7 239.9L514.6 239.2L511.1 241.7L500.9 241.0L494.0 244.5L492.9 251.3L492.2 258.2L496.3 265.0L499.7 266.8L506.6 266.2L508.9 260.5L516.8 259.3L515.7 266.2L513.4 271.9L519.1 272.3L525.5 274.2L524.4 283.3L527.1 287.9L532.8 287.4L538.5 289.0L537.9 291.3L534.0 288.3L531.7 291.7L526.0 289.4L520.3 285.6L515.7 278.7L506.6 276.4L499.7 271.4L494.0 272.3L483.7 268.4L474.6 262.7L474.6 257.0L466.6 249.0L458.6 241.0L453.6 236.0L454.1 239.9L458.6 245.6L463.2 252.5L465.5 255.9L459.8 251.3L454.1 244.5L450.6 238.8L447.9 233.7L440.4 229.6L436.9 224.4L432.8 218.2L431.7 211.4L432.4 202.9L430.8 197.9L435.8 199.9L434.6 196.5L430.1 194.2L423.7 190.8L418.0 184.0L411.8 178.3L403.8 174.8L395.8 171.9L382.1 169.8L373.0 172.5L368.4 169.1L363.9 174.8L354.7 179.4L342.2 183.3L349.0 174.8L344.5 171.4L336.5 168.0L339.9 164.6L347.9 162.3L338.8 161.1ZM538.5 289.0L543.1 283.7L551.1 281.0L552.2 283.7L555.7 281.0L560.2 284.2L569.4 284.4L574.4 284.0L578.5 289.0L585.3 294.7L593.3 295.6L599.0 298.8L601.3 307.3L605.9 310.7L613.9 314.1L624.2 314.8L631.0 319.4L635.6 323.2L635.6 328.9L629.9 334.7L626.4 340.4L626.4 349.0L622.3 357.5L617.3 360.9L609.3 363.2L604.3 368.9L604.1 373.5L599.0 379.2L593.3 386.0L586.5 387.9L582.4 386.0L585.3 391.7L583.1 396.3L573.9 397.4L572.8 402.0L567.1 402.0L569.8 406.1L565.9 411.1L561.4 413.4L564.8 418.0L557.9 423.7L559.1 428.3L565.9 433.5L559.1 435.1L551.1 431.7L544.7 428.3L543.1 420.3L545.4 413.4L548.8 404.3L547.0 395.2L550.0 388.3L552.2 379.2L552.7 370.0L555.0 360.9L555.0 350.6L550.0 347.2L542.0 341.1L538.5 334.7L534.0 325.5L530.1 319.8L532.8 314.8L530.5 310.7L532.8 306.6L535.6 304.5L539.0 299.3L538.5 292.4ZM152.7 358.6L153.8 367.8L156.1 376.9L156.1 386.0L162.9 388.3L175.5 386.0L181.2 382.2L188.1 380.8L193.8 380.3L199.5 383.3L202.9 387.9L208.1 383.7L208.6 389.5L213.2 394.0L221.2 396.8L227.6 397.4L236.0 394.0L238.3 386.0L242.9 379.2L244.0 371.2L238.3 363.2L234.9 358.6L229.2 352.9L226.9 349.5L225.3 342.6L221.2 340.4L218.9 333.1L217.1 338.1L216.6 344.9L214.3 348.4L210.9 347.2L206.3 344.5L202.9 342.6L205.9 336.3L201.8 335.8L196.0 334.0L192.6 336.3L189.9 339.2L189.2 342.6L185.8 342.6L182.3 340.4L178.9 343.8L175.5 347.9L172.5 349.5L170.9 352.9L165.2 354.1L159.5 355.7L154.9 357.9ZM548.8 129.8L560.2 125.7L573.9 121.6L601.3 120.3L635.6 117.7L658.4 118.9L676.7 122.3L688.1 122.3L672.1 128.0L673.3 133.7L669.8 139.4L665.3 144.0L664.1 148.1L656.1 152.0L642.4 153.1L631.0 158.4L623.0 161.1L618.5 168.0L613.9 171.4L605.9 169.6L599.0 163.4L593.3 156.6L594.5 150.9L599.0 148.6L591.1 146.7L589.9 142.9L583.1 136.0L564.8 134.9L553.4 132.6ZM-517.5 487.0L-483.2 487.2L-467.3 484.2L-449.0 481.9L-426.2 479.6L-403.3 478.0L-380.5 477.4L-357.7 478.5L-334.8 475.1L-312.0 475.1L-289.2 475.5L-277.7 470.5L-261.8 463.7L-252.6 456.8L-238.9 452.9L-243.5 456.8L-248.1 463.7L-245.8 472.8L-243.5 479.6L-254.9 484.2L-220.7 486.5L-197.8 486.5L-186.4 485.4L-170.4 480.8L-152.2 475.1L-133.9 471.7L-117.9 469.4L-106.5 468.2L-83.7 468.2L-60.8 468.2L-38.0 467.1L-19.7 467.1L-3.7 462.5L12.2 459.1L25.9 461.4L41.9 463.0L53.3 464.8L62.5 467.8L71.6 464.8L87.6 460.2L110.4 459.1L133.3 459.1L156.1 459.6L178.9 459.8L201.8 459.1L217.7 460.9L236.0 464.3L258.8 468.2L277.1 471.7L284.0 472.8L272.5 479.6L268.0 486.5L281.7 487.2L304.5 487.0M304.5 487.0L338.8 487.2L354.7 484.2L373.0 481.9L395.8 479.6L418.7 478.0L441.5 477.4L464.3 478.5L487.2 475.1L510.0 475.1L532.8 475.5L544.2 470.5L560.2 463.7L569.4 456.8L583.1 452.9L578.5 456.8L573.9 463.7L576.2 472.8L578.5 479.6L567.1 484.2L601.3 486.5L624.2 486.5L635.6 485.4L651.6 480.8L669.8 475.1L688.1 471.7L704.1 469.4L715.5 468.2L738.3 468.2L761.2 468.2L784.0 467.1L802.3 467.1L818.2 462.5L834.2 459.1L847.9 461.4L863.9 463.0L875.3 464.8L884.5 467.8L893.6 464.8L909.6 460.2L932.4 459.1L955.2 459.1L978.1 459.6L1000.9 459.8L1023.7 459.1L1039.7 460.9L1058.0 464.3L1080.8 468.2L1099.1 471.7L1105.9 472.8L1094.5 479.6L1090.0 486.5L1103.7 487.2L1126.5 487.0" fill="none" stroke="#8fcf8f" stroke-width="1" stroke-linejoin="round"/></g><path d="M0 103.500h822M0 514.500h822" stroke="#d8d8d8" stroke-width="1"/><path d="M30.5 104v410M98.5 104v410M167.5 104v410M236.5 104v410M304.5 104v410M372.5 104v410M441.5 104v410M510.5 104v410M578.5 104v410M646.5 104v410M715.5 104v410M784.5 104v410M0 171.5h822M0 240.5h822M0 308.5h822M0 376.5h822M0 445.5h822" stroke="#d8d8d8" stroke-width="1" stroke-dasharray="2 3.300" fill="none" opacity=".8"/><text x="3" y="167.5" textLength="15" lengthAdjust="spacingAndGlyphs" font-family="Liberation Sans,sans-serif" font-weight="bold" font-size="15" fill="#dedede" stroke="#0a0a0a" stroke-width="1.800" paint-order="stroke">60</text><text x="3" y="235.5" textLength="15" lengthAdjust="spacingAndGlyphs" font-family="Liberation Sans,sans-serif" font-weight="bold" font-size="15" fill="#dedede" stroke="#0a0a0a" stroke-width="1.800" paint-order="stroke">30</text><text x="3" y="304.5" textLength="7" lengthAdjust="spacingAndGlyphs" font-family="Liberation Sans,sans-serif" font-weight="bold" font-size="15" fill="#dedede" stroke="#0a0a0a" stroke-width="1.800" paint-order="stroke">0</text><text x="3" y="372.5" textLength="19" lengthAdjust="spacingAndGlyphs" font-family="Liberation Sans,sans-serif" font-weight="bold" font-size="15" fill="#dedede" stroke="#0a0a0a" stroke-width="1.800" paint-order="stroke">-30</text><text x="3" y="441.5" textLength="19" lengthAdjust="spacingAndGlyphs" font-family="Liberation Sans,sans-serif" font-weight="bold" font-size="15" fill="#dedede" stroke="#0a0a0a" stroke-width="1.800" paint-order="stroke">-60</text><text x="33" y="509.5" textLength="14" lengthAdjust="spacingAndGlyphs" font-family="Liberation Sans,sans-serif" font-weight="bold" font-size="15" fill="#dedede" stroke="#0a0a0a" stroke-width="1.800" paint-order="stroke">60</text><text x="101" y="509.5" textLength="15" lengthAdjust="spacingAndGlyphs" font-family="Liberation Sans,sans-serif" font-weight="bold" font-size="15" fill="#dedede" stroke="#0a0a0a" stroke-width="1.800" paint-order="stroke">90</text><text x="170" y="509.5" textLength="23" lengthAdjust="spacingAndGlyphs" font-family="Liberation Sans,sans-serif" font-weight="bold" font-size="15" fill="#dedede" stroke="#0a0a0a" stroke-width="1.800" paint-order="stroke">120</text><text x="238" y="509.5" textLength="23" lengthAdjust="spacingAndGlyphs" font-family="Liberation Sans,sans-serif" font-weight="bold" font-size="15" fill="#dedede" stroke="#0a0a0a" stroke-width="1.800" paint-order="stroke">150</text><text x="307" y="509.5" textLength="23" lengthAdjust="spacingAndGlyphs" font-family="Liberation Sans,sans-serif" font-weight="bold" font-size="15" fill="#dedede" stroke="#0a0a0a" stroke-width="1.800" paint-order="stroke">180</text><text x="373" y="509.5" textLength="30" lengthAdjust="spacingAndGlyphs" font-family="Liberation Sans,sans-serif" font-weight="bold" font-size="15" fill="#dedede" stroke="#0a0a0a" stroke-width="1.800" paint-order="stroke">-150</text><text x="442" y="509.5" textLength="30" lengthAdjust="spacingAndGlyphs" font-family="Liberation Sans,sans-serif" font-weight="bold" font-size="15" fill="#dedede" stroke="#0a0a0a" stroke-width="1.800" paint-order="stroke">-120</text><text x="514" y="509.5" textLength="18" lengthAdjust="spacingAndGlyphs" font-family="Liberation Sans,sans-serif" font-weight="bold" font-size="15" fill="#dedede" stroke="#0a0a0a" stroke-width="1.800" paint-order="stroke">-90</text><text x="583" y="509.5" textLength="18" lengthAdjust="spacingAndGlyphs" font-family="Liberation Sans,sans-serif" font-weight="bold" font-size="15" fill="#dedede" stroke="#0a0a0a" stroke-width="1.800" paint-order="stroke">-60</text><text x="651" y="509.5" textLength="18" lengthAdjust="spacingAndGlyphs" font-family="Liberation Sans,sans-serif" font-weight="bold" font-size="15" fill="#dedede" stroke="#0a0a0a" stroke-width="1.800" paint-order="stroke">-30</text><text x="717" y="509.5" textLength="7" lengthAdjust="spacingAndGlyphs" font-family="Liberation Sans,sans-serif" font-weight="bold" font-size="15" fill="#dedede" stroke="#0a0a0a" stroke-width="1.800" paint-order="stroke">0</text><text x="787" y="509.5" textLength="15" lengthAdjust="spacingAndGlyphs" font-family="Liberation Sans,sans-serif" font-weight="bold" font-size="15" fill="#dedede" stroke="#0a0a0a" stroke-width="1.800" paint-order="stroke">30</text><circle cx="224.5" cy="277.5" r="2.5" fill="none" stroke="#ff1010" stroke-width="1.100"/><circle cx="224.5" cy="277.5" r="5" fill="none" stroke="#ff1010" stroke-width="1.100"/><circle cx="224.5" cy="277.5" r="7.5" fill="none" stroke="#ff1010" stroke-width="1.100"/><circle cx="224.5" cy="277.5" r="10" fill="none" stroke="#ff1010" stroke-width="1.100"/><circle cx="224.5" cy="277.5" r="12.5" fill="none" stroke="#ff1010" stroke-width="1.100"/><circle cx="224.5" cy="277.5" r="15" fill="none" stroke="#ff1010" stroke-width="1.100"/><circle cx="224.5" cy="277.5" r="17.5" fill="none" stroke="#ff1010" stroke-width="1.100"/><circle cx="224.5" cy="277.5" r="20" fill="none" stroke="#ff1010" stroke-width="1.100"/><circle cx="224.5" cy="277.5" r="20" fill="#ff0000" opacity=".18"/><text x="227" y="272.5" textLength="137" lengthAdjust="spacingAndGlyphs" font-family="Liberation Sans,sans-serif" font-weight="bold" font-size="13" fill="#ff1818">Guam_2_GU2_Leolut</text><g transform="translate(495.5,200)"><path d="M6 14.500C4 10.500 1 8.500 1 5.500a5 5 0 0 1 10 0c0 3-3 5-5 9z" fill="#f0b020" stroke="#f4f4f4" stroke-width="1.200"/><circle cx="6" cy="5.300" r="1.800" fill="#fff6d0"/></g><g transform="translate(533.5,212)"><path d="M6 14.500C4 10.500 1 8.500 1 5.500a5 5 0 0 1 10 0c0 3-3 5-5 9z" fill="#f0b020" stroke="#f4f4f4" stroke-width="1.200"/><circle cx="6" cy="5.300" r="1.800" fill="#fff6d0"/></g><text x="504" y="201.5" textLength="82" lengthAdjust="spacingAndGlyphs" font-family="Liberation Sans,sans-serif" font-weight="bold" font-size="13" fill="#30e8f8">Bloomington</text><text x="542" y="214.5" textLength="115" lengthAdjust="spacingAndGlyphs" font-family="Liberation Sans,sans-serif" font-weight="bold" font-size="13" fill="#ff1818">White_House_DC</text><path d="M765 581l4.500 1.500v13l6.500-3.500-3-1.500-2-4.500 9.500 3.500v4.500l-11 6.500-4.500-2.500z" fill="#fff"/><text x="786" y="596.5" font-family="Liberation Sans,sans-serif" font-size="17.500" textLength="31" lengthAdjust="spacingAndGlyphs" fill="#fff">bing</text></svg>
<div style="left:233px;top:798px;width:1691px;height:25px;background:#fff;border-bottom:1px solid #cfcfcf;"></div>
<div style="left:233px;top:798px;width:92px;height:1px;background:#8c8c8c;"></div>
<div style="left:325px;top:798px;width:90px;height:23px;background:#f0f0f0;border-right:1px solid #666;border-bottom:1px solid #666;"></div>
<svg width="16" height="16" viewBox="0 0 16 16" style="left:236px;top:802px;overflow:visible"><circle cx="8" cy="8" r="7.300" fill="#1a2ea8" stroke="#0a0a0a" stroke-width="1"/><path d="M3 4c2-2 4-2.500 6-2 1 2-1 3-2 4s-1 3-3 3c-1-1-2-3-1-5zM10 8c2-1 4 0 4.500 1-.5 2-2 4-4 4.500-1-1-1.500-4-.5-5.500z" fill="#3f9a34"/><path d="M2 11c1 1 3 2 4 3-2 0-3.500-1.500-4-3z" fill="#3f9a34"/></svg>
<svg width="16" height="16" viewBox="0 0 16 16" style="left:327px;top:802px;overflow:visible"><rect x="0" y="0" width="16" height="16" fill="#00a0b8"/><path d="M0 0h16v2.500h-3L12 4l2 5 1.500 4-1 2.500-2-.5-2-5-3-3L5 4 1 2.500z" fill="#1a4a1a"/><path d="M12 0h4v4z" fill="#e8f0ff"/><path d="M0 14h8l-2 2H0z" fill="#0090a8"/></svg>
<span id="tab1" class="t" style="left:254px;top:801.0px;line-height:19px;font-size:12px;color:#000;font-weight:normal;font-family:'Liberation Serif',serif;letter-spacing:0.667px;">3D Graph...</span>
<span id="tab2" class="t" style="left:345px;top:801.0px;line-height:19px;font-size:12px;color:#000;font-weight:normal;font-family:'Liberation Serif',serif;letter-spacing:0.667px;">2D Graph...</span>
<div style="left:8px;top:824px;width:1920px;height:31px;background:#f7f7f3;"></div>
<span id="tl_cap" class="t" style="left:10px;top:830.5px;line-height:20px;font-size:13px;color:#000;font-weight:normal;font-family:'Liberation Sans',sans-serif;letter-spacing:-0.136px;">Timeline View 1</span>
<svg width="60" height="14" style="left:1868px;top:834px"><path d="M5 5h8l-4 4z" fill="#222"/><path d="M26.5 2.5h4v5h-4zM29.5 2.5v5M25 7.5h7M28.5 8v4" fill="none" stroke="#222"/><path d="M44 3l8 8M52 3l-8 8" stroke="#222" stroke-width="1"/></svg>
<div style="left:8px;top:855px;width:1917px;height:155px;background:#fff;border:2px solid #9a9a9a;border-top:3px solid #6e6e6e;border-left:4px solid #777;border-right:1px solid #e0e0e0;border-bottom:2px solid #e4e4e4;"></div>
<svg width="16" height="16" viewBox="0 0 16 16" style="left:14px;top:860px;overflow:visible"><path d="M1.500 1.500h13v13h-13z" fill="#e8dc8a" stroke="#6a6a2a" stroke-width="1"/><path d="M1.500 1.500h7v3h6" fill="none" stroke="#6a6a2a" stroke-width="1"/><path d="M4 7.500h8M4 9.500h8M4 11.500h8" stroke="#8a8a4a" stroke-width=".9"/></svg>
<svg width="16" height="16" viewBox="0 0 16 16" style="left:50px;top:860px;overflow:visible"><rect x="1.500" y="2.500" width="13" height="12" rx="2" fill="#fff" stroke="#1a4a9a" stroke-width="1.300"/><path d="M1.500 6h13M1.500 9h13M1.500 12h13M8 6v9M11.500 6v9" stroke="#1a4a9a" stroke-width=".9"/><path d="M2 4h3M3.500 2.500v3" stroke="#fff" stroke-width="3"/><path d="M1 4h4M3 2v4" stroke="#111" stroke-width="1.200"/><path d="M5 9h5M5 12h3" stroke="#111" stroke-width="1.800"/></svg>
<svg width="16" height="16" viewBox="0 0 16 16" style="left:69px;top:860px;overflow:visible"><rect x="0.500" y="1.500" width="15" height="13" fill="#f4f4f4" stroke="#dcdcdc" stroke-width=".8"/><path d="M5 5v5M3 8l2 2.500L7 8M11 11V6M9 8l2-2.500L13 8" stroke="#444" stroke-width="1.500" fill="none"/></svg>
<svg width="16" height="16" viewBox="0 0 16 16" style="left:105px;top:860px;overflow:visible"><rect x="1.500" y="2.500" width="13" height="11" rx="2" fill="#fff" stroke="#1a4a9a" stroke-width="1.300"/><path d="M1.500 6h13M6 2.500v4M10 2.500v4" stroke="#1a4a9a" stroke-width=".9"/><path d="M1 4h4M3 2v4" stroke="#111" stroke-width="1.200"/><g transform="translate(1.500,5.500) scale(.85)"><path d="M1 7.500C3.500 3.500 6 2.500 8.500 2.500S13.500 4 15.500 7C13 9.500 11 10.500 8.500 10.500S3.500 9.500 1 7.500z" fill="#f0e6c8" stroke="#b0641e" stroke-width="1.3"/><circle cx="8.300" cy="6.500" r="3.200" fill="#4e9a2a" stroke="#2c5c14" stroke-width=".8"/><circle cx="8.300" cy="6.500" r="1.300" fill="#142808"/></g></svg>
<svg width="16" height="16" viewBox="0 0 16 16" style="left:256px;top:860px;overflow:visible"><path d="M10.500 2.500L3.500 12" stroke="#f0b020" stroke-width="3.200"/><path d="M11.500 1.500l-1.500 2" stroke="#e89090" stroke-width="3.200"/><path d="M2.500 10.500l-1 4 3.500-2z" fill="#f4dcb0" stroke="#a87820" stroke-width=".6"/><path d="M1.500 14.500l1.200-.6-.8-.8z" fill="#111"/></svg>
<svg width="16" height="16" viewBox="0 0 16 16" style="left:270px;top:860px;overflow:visible"><path d="M1.500 1.500h13v13h-13z" fill="#6e6e5e" stroke="#2a2a20" stroke-width="1"/><rect x="3.500" y="1.500" width="9" height="6.500" fill="#f4f4f4" stroke="#2a2a20" stroke-width=".7"/><rect x="4.500" y="10.500" width="7" height="4" fill="#d8d8c8" stroke="#2a2a20" stroke-width=".7"/><rect x="9" y="11.300" width="1.700" height="2.600" fill="#2a2a20"/></svg>
<svg width="16" height="16" viewBox="0 0 16 16" style="left:286px;top:860px;overflow:visible"><rect x="0.500" y="1.500" width="15" height="13" fill="#f4f4f4" stroke="#dcdcdc" stroke-width=".8"/><path d="M5 5v5M3 8l2 2.500L7 8M11 11V6M9 8l2-2.500L13 8" stroke="#444" stroke-width="1.500" fill="none"/></svg>
<svg width="16" height="16" viewBox="0 0 16 16" style="left:319px;top:860px;overflow:visible"><path d="M1 4.500h2.500V2h2v2.500H8v2H5.500V9h-2V6.500H1z" fill="#fff" stroke="#111" stroke-width="1"/><circle cx="11" cy="5" r="3.800" fill="#fff" stroke="#111" stroke-width="1.200"/><path d="M11 2.500V5l2 1" stroke="#111" stroke-width="1" fill="none"/><g transform="translate(1.500,7.500) scale(.85)"><path d="M1 7.500C3.500 3.500 6 2.500 8.500 2.500S13.500 4 15.500 7C13 9.500 11 10.500 8.500 10.500S3.500 9.500 1 7.500z" fill="#f0e6c8" stroke="#b0641e" stroke-width="1.3"/><circle cx="8.300" cy="6.500" r="3.200" fill="#4e9a2a" stroke="#2c5c14" stroke-width=".8"/><circle cx="8.300" cy="6.500" r="1.300" fill="#142808"/></g></svg>
<svg width="16" height="16" viewBox="0 0 16 16" style="left:492px;top:860px;overflow:visible"><path d="M10.500 2.500L3.500 12" stroke="#f0b020" stroke-width="3.200"/><path d="M11.500 1.500l-1.500 2" stroke="#e89090" stroke-width="3.200"/><path d="M2.500 10.500l-1 4 3.500-2z" fill="#f4dcb0" stroke="#a87820" stroke-width=".6"/><path d="M1.500 14.500l1.200-.6-.8-.8z" fill="#111"/></svg>
<svg width="16" height="16" viewBox="0 0 16 16" style="left:507px;top:860px;overflow:visible"><path d="M1.500 1.500h13v13h-13z" fill="#6e6e5e" stroke="#2a2a20" stroke-width="1"/><rect x="3.500" y="1.500" width="9" height="6.500" fill="#f4f4f4" stroke="#2a2a20" stroke-width=".7"/><rect x="4.500" y="10.500" width="7" height="4" fill="#d8d8c8" stroke="#2a2a20" stroke-width=".7"/><rect x="9" y="11.300" width="1.700" height="2.600" fill="#2a2a20"/></svg>
<svg width="16" height="16" viewBox="0 0 16 16" style="left:523px;top:860px;overflow:visible"><rect x="0.500" y="1.500" width="15" height="13" fill="#f4f4f4" stroke="#dcdcdc" stroke-width=".8"/><path d="M5 5v5M3 8l2 2.500L7 8M11 11V6M9 8l2-2.500L13 8" stroke="#444" stroke-width="1.500" fill="none"/></svg>
<svg width="16" height="16" viewBox="0 0 16 16" style="left:556px;top:860px;overflow:visible"><path d="M5 1l4.500 9M11 1L6.500 10" stroke="#333" stroke-width="1.300"/><circle cx="5.300" cy="12.500" r="2.100" fill="none" stroke="#1a3ad0" stroke-width="1.400"/><circle cx="10.700" cy="12.500" r="2.100" fill="none" stroke="#1a3ad0" stroke-width="1.400"/></svg>
<svg width="16" height="16" viewBox="0 0 16 16" style="left:575px;top:860px;overflow:visible"><path d="M1.500 1.500h6l2 2v7h-8z" fill="#fff" stroke="#222" stroke-width="1"/><path d="M3 5h4.500M3 7h4.500" stroke="#2a4ad0" stroke-width=".9"/><path d="M6.500 5.500h6l2 2v7h-8z" fill="#fff" stroke="#222" stroke-width="1"/><path d="M8 9h4.500M8 11h4.500M8 13h4.500" stroke="#2a4ad0" stroke-width=".9"/></svg>
<svg width="16" height="16" viewBox="0 0 16 16" style="left:593px;top:860px;overflow:visible"><rect x="1.500" y="3.500" width="11" height="11" rx="1" fill="#a8701c" stroke="#3a2608" stroke-width="1"/><rect x="4.500" y="1.500" width="5" height="3" fill="#bbb" stroke="#333" stroke-width=".8"/><rect x="7.500" y="7.500" width="7" height="7" fill="#fff" stroke="#222" stroke-width="1"/><path d="M9 10h4M9 12h4" stroke="#2a4ad0" stroke-width=".9"/></svg>
<svg width="16" height="16" viewBox="0 0 16 16" style="left:611px;top:860px;overflow:visible"><path d="M2 2l12 12M14 2L2 14" stroke="#e02818" stroke-width="2.200" stroke-linecap="round"/></svg>
<svg width="16" height="16" viewBox="0 0 16 16" style="left:647px;top:860px;overflow:visible"><circle cx="8" cy="8" r="7.500" fill="#dce8fc"/><circle cx="8" cy="8" r="6.300" fill="#1a54d0"/><text x="8" y="12" font-size="11" font-weight="bold" text-anchor="middle" font-family="Liberation Sans,sans-serif" fill="#fff">?</text></svg>
<div style="left:40px;top:861px;width:2px;height:15px;background:#b4b4b4;"></div>
<div style="left:94px;top:861px;width:2px;height:15px;background:#b4b4b4;"></div>
<div style="left:309px;top:861px;width:2px;height:15px;background:#b4b4b4;"></div>
<div style="left:547px;top:861px;width:2px;height:15px;background:#b4b4b4;"></div>
<div style="left:637px;top:861px;width:2px;height:15px;background:#b4b4b4;"></div>
<div style="left:123px;top:858px;width:134px;height:21px;background:#fff;border:1px solid #d4d4d4;"></div>
<span id="tl_c1" class="t" style="left:128px;top:858.5px;line-height:20px;font-size:13px;color:#000;font-weight:normal;font-family:'Liberation Sans',sans-serif;letter-spacing:-0.447px;">Scenario Availability</span>
<svg width="8" height="5" style="left:241px;top:866px"><path d="M0 0h8L4 5z" fill="#000"/></svg>
<div style="left:338px;top:858px;width:156px;height:21px;background:#fff;border:1px solid #d4d4d4;"></div>
<span id="tl_c2" class="t" style="left:343px;top:858.5px;line-height:20px;font-size:13px;color:#000;font-weight:normal;font-family:'Liberation Sans',sans-serif;letter-spacing:-0.700px;">Scenario Analysis Period</span>
<svg width="8" height="5" style="left:478px;top:866px"><path d="M0 0h8L4 5z" fill="#000"/></svg>
<div style="left:12px;top:880px;width:1912px;height:15px;background:#ece9d8;"></div>
<div style="left:17px;top:882px;width:1885px;height:9px;background:linear-gradient(#1f74f2,#0053e0 50%,#0048c8);"></div>
<div style="left:1902px;top:882px;width:17px;height:9px;background:#474747;"></div>
<svg width="12" height="12" style="left:233px;top:881px"><path d="M2.5 1h6l1 3-3 6h-2l-3-6z" fill="#fff" stroke="#dde" stroke-width=".5"/></svg>
<div style="left:16px;top:894px;width:1905px;height:22px;background:linear-gradient(#8fbdeb,#86b4e4 60%,#7aa9d9);border:1px solid #1d5fca;"></div>
<svg width="1905" height="22" style="left:16px;top:894px"><path d="M13.5 1v3M26.5 1v3M40.5 1v3M53.5 1v3M66.5 1v3M79.5 1v4M93.5 1v3M106.5 1v3M119.5 1v3M132.5 1v3M145.5 1v3M159.5 1v6M172.5 1v3M185.5 1v3M198.5 1v3M211.5 1v3M225.5 1v3M238.5 1v4M251.5 1v3M264.5 1v3M278.5 1v3M291.5 1v3M304.5 1v3M317.5 1v6M330.5 1v3M344.5 1v3M357.5 1v3M370.5 1v3M383.5 1v3M397.5 1v4M410.5 1v3M423.5 1v3M436.5 1v3M449.5 1v3M463.5 1v3M476.5 1v6M489.5 1v3M502.5 1v3M515.5 1v3M529.5 1v3M542.5 1v3M555.5 1v4M568.5 1v3M582.5 1v3M595.5 1v3M608.5 1v3M621.5 1v3M634.5 1v6M648.5 1v3M661.5 1v3M674.5 1v3M687.5 1v3M700.5 1v3M714.5 1v4M727.5 1v3M740.5 1v3M753.5 1v3M767.5 1v3M780.5 1v3M793.5 1v6M806.5 1v3M819.5 1v3M833.5 1v3M846.5 1v3M859.5 1v3M872.5 1v4M886.5 1v3M899.5 1v3M912.5 1v3M925.5 1v3M938.5 1v3M952.5 1v6M965.5 1v3M978.5 1v3M991.5 1v3M1004.5 1v3M1018.5 1v3M1031.5 1v4M1044.5 1v3M1057.5 1v3M1071.5 1v3M1084.5 1v3M1097.5 1v3M1110.5 1v6M1123.5 1v3M1137.5 1v3M1150.5 1v3M1163.5 1v3M1176.5 1v3M1190.5 1v4M1203.5 1v3M1216.5 1v3M1229.5 1v3M1242.5 1v3M1256.5 1v3M1269.5 1v6M1282.5 1v3M1295.5 1v3M1308.5 1v3M1322.5 1v3M1335.5 1v3M1348.5 1v4M1361.5 1v3M1375.5 1v3M1388.5 1v3M1401.5 1v3M1414.5 1v3M1427.5 1v6M1441.5 1v3M1454.5 1v3M1467.5 1v3M1480.5 1v3M1494.5 1v3M1507.5 1v4M1520.5 1v3M1533.5 1v3M1546.5 1v3M1560.5 1v3M1573.5 1v3M1586.5 1v6M1599.5 1v3M1612.5 1v3M1626.5 1v3M1639.5 1v3M1652.5 1v3M1665.5 1v4M1679.5 1v3M1692.5 1v3M1705.5 1v3M1718.5 1v3M1731.5 1v3M1745.5 1v6M1758.5 1v3M1771.5 1v3M1784.5 1v3M1798.5 1v3M1811.5 1v3M1824.5 1v4M1837.5 1v3M1850.5 1v3M1864.5 1v3M1877.5 1v3M1890.5 1v3" stroke="#2a64b8" fill="none"/></svg>
<span id="r1_0" class="t" style="left:158px;top:899.0px;line-height:17px;font-size:11px;color:#1c3f78;font-weight:normal;font-family:'Liberation Sans',sans-serif;letter-spacing:0.094px;">06:00</span>
<span id="r1_1" class="t" style="left:317px;top:899.0px;line-height:17px;font-size:11px;color:#1c3f78;font-weight:normal;font-family:'Liberation Sans',sans-serif;letter-spacing:0.094px;">08:00</span>
<span id="r1_2" class="t" style="left:475px;top:899.0px;line-height:17px;font-size:11px;color:#1c3f78;font-weight:normal;font-family:'Liberation Sans',sans-serif;letter-spacing:0.094px;">10:00</span>
<span id="r1_3" class="t" style="left:634px;top:899.0px;line-height:17px;font-size:11px;color:#1c3f78;font-weight:normal;font-family:'Liberation Sans',sans-serif;letter-spacing:0.094px;">12:00</span>
<span id="r1_4" class="t" style="left:792px;top:899.0px;line-height:17px;font-size:11px;color:#1c3f78;font-weight:normal;font-family:'Liberation Sans',sans-serif;letter-spacing:0.094px;">14:00</span>
<span id="r1_5" class="t" style="left:951px;top:899.0px;line-height:17px;font-size:11px;color:#1c3f78;font-weight:normal;font-family:'Liberation Sans',sans-serif;letter-spacing:0.094px;">16:00</span>
<span id="r1_6" class="t" style="left:1110px;top:899.0px;line-height:17px;font-size:11px;color:#1c3f78;font-weight:normal;font-family:'Liberation Sans',sans-serif;letter-spacing:0.094px;">18:00</span>
<span id="r1_7" class="t" style="left:1268px;top:899.0px;line-height:17px;font-size:11px;color:#1c3f78;font-weight:normal;font-family:'Liberation Sans',sans-serif;letter-spacing:0.094px;">20:00</span>
<span id="r1_8" class="t" style="left:1427px;top:899.0px;line-height:17px;font-size:11px;color:#1c3f78;font-weight:normal;font-family:'Liberation Sans',sans-serif;letter-spacing:0.094px;">22:00</span>
<span id="r1_9" class="t" style="left:1585px;top:899.0px;line-height:17px;font-size:11px;color:#1c3f78;font-weight:normal;font-family:'Liberation Sans',sans-serif;letter-spacing:0.094px;">00:00</span>
<span id="r1_10" class="t" style="left:1744px;top:899.0px;line-height:17px;font-size:11px;color:#1c3f78;font-weight:normal;font-family:'Liberation Sans',sans-serif;letter-spacing:0.094px;">02:00</span>
<span id="r1_a" class="t" style="left:21px;top:899.0px;line-height:17px;font-size:11px;color:#1c3f78;font-weight:normal;font-family:'Liberation Sans',sans-serif;letter-spacing:-0.125px;">0</span>
<span id="r1_b" class="t" style="left:1905px;top:899.0px;line-height:17px;font-size:11px;color:#1c3f78;font-weight:normal;font-family:'Liberation Sans',sans-serif;letter-spacing:-0.125px;">04</span>
<div style="left:17px;top:899px;width:3px;height:13px;background:#fff;border:1px solid #1d5fca;border-left:none;"></div>
<div style="left:1916px;top:899px;width:3px;height:13px;background:#fff;border:1px solid #1d5fca;border-right:none;"></div>
<div style="left:239px;top:896px;width:2px;height:19px;background:#1d5fca;"></div>
<svg width="16" height="16" style="left:232px;top:897px"><circle cx="8" cy="8" r="6.3" fill="#c9ccd4" stroke="#8a8f9a"/><circle cx="8" cy="8" r="4.2" fill="#1648c0"/></svg>
<div style="left:12px;top:916px;width:1912px;height:22px;background:#add8e6;"></div>
<div style="left:213px;top:916px;width:1px;height:22px;background:#e8f4f8;"></div>
<span id="tl_date" class="t" style="left:29px;top:916.0px;line-height:20px;font-size:13px;color:#000;font-weight:bold;font-family:'Liberation Sans',sans-serif;letter-spacing:0.066px;">11 Nov 2022 06:48:43.366</span>
<svg width="1710" height="22" style="left:214px;top:916px"><path d="M0.5 8v14M12.5 17v5M24.5 17v5M36.5 17v5M48.5 17v5M59.5 17v5M71.5 17v5M83.5 17v5M95.5 17v5M107.5 17v5M119.5 17v5M131.5 17v5M143.5 8v14M154.5 17v5M166.5 17v5M178.5 17v5M190.5 17v5M202.5 17v5M214.5 17v5M226.5 17v5M238.5 17v5M250.5 17v5M261.5 17v5M273.5 17v5M285.5 8v14M297.5 17v5M309.5 17v5M321.5 17v5M333.5 17v5M345.5 17v5M356.5 17v5M368.5 17v5M380.5 17v5M392.5 17v5M404.5 17v5M416.5 17v5M428.5 8v14M440.5 17v5M452.5 17v5M463.5 17v5M475.5 17v5M487.5 17v5M499.5 17v5M511.5 17v5M523.5 17v5M535.5 17v5M547.5 17v5M559.5 17v5M570.5 8v14M582.5 17v5M594.5 17v5M606.5 17v5M618.5 17v5M630.5 17v5M642.5 17v5M654.5 17v5M665.5 17v5M677.5 17v5M689.5 17v5M701.5 17v5M713.5 8v14M725.5 17v5M737.5 17v5M749.5 17v5M761.5 17v5M772.5 17v5M784.5 17v5M796.5 17v5M808.5 17v5M820.5 17v5M832.5 17v5M844.5 17v5M856.5 8v14M867.5 17v5M879.5 17v5M891.5 17v5M903.5 17v5M915.5 17v5M927.5 17v5M939.5 17v5M951.5 17v5M963.5 17v5M974.5 17v5M986.5 17v5M998.5 8v14M1010.5 17v5M1022.5 17v5M1034.5 17v5M1046.5 17v5M1058.5 17v5M1070.5 17v5M1081.5 17v5M1093.5 17v5M1105.5 17v5M1117.5 17v5M1129.5 17v5M1141.5 8v14M1153.5 17v5M1165.5 17v5M1176.5 17v5M1188.5 17v5M1200.5 17v5M1212.5 17v5M1224.5 17v5M1236.5 17v5M1248.5 17v5M1260.5 17v5M1272.5 17v5M1283.5 8v14M1295.5 17v5M1307.5 17v5M1319.5 17v5M1331.5 17v5M1343.5 17v5M1355.5 17v5M1367.5 17v5M1378.5 17v5M1390.5 17v5M1402.5 17v5M1414.5 17v5M1426.5 8v14M1438.5 17v5M1450.5 17v5M1462.5 17v5M1474.5 17v5M1485.5 17v5M1497.5 17v5M1509.5 17v5M1521.5 17v5M1533.5 17v5M1545.5 17v5M1557.5 17v5M1569.5 8v14M1580.5 17v5M1592.5 17v5M1604.5 17v5M1616.5 17v5M1628.5 17v5M1640.5 17v5M1652.5 17v5M1664.5 17v5M1676.5 17v5M1687.5 17v5M1699.5 17v5" stroke="#3c4a52" fill="none"/></svg>
<span id="r2_0" class="t" style="left:217px;top:917.0px;line-height:17px;font-size:11px;color:#111;font-weight:normal;font-family:'Liberation Sans',sans-serif;letter-spacing:-0.306px;">04:00</span>
<span id="r2_1" class="t" style="left:360px;top:917.0px;line-height:17px;font-size:11px;color:#111;font-weight:normal;font-family:'Liberation Sans',sans-serif;letter-spacing:-0.306px;">06:00</span>
<span id="r2_2" class="t" style="left:502px;top:917.0px;line-height:17px;font-size:11px;color:#111;font-weight:normal;font-family:'Liberation Sans',sans-serif;letter-spacing:-0.306px;">08:00</span>
<span id="r2_3" class="t" style="left:645px;top:917.0px;line-height:17px;font-size:11px;color:#111;font-weight:normal;font-family:'Liberation Sans',sans-serif;letter-spacing:-0.306px;">10:00</span>
<span id="r2_4" class="t" style="left:787px;top:917.0px;line-height:17px;font-size:11px;color:#111;font-weight:normal;font-family:'Liberation Sans',sans-serif;letter-spacing:-0.306px;">12:00</span>
<span id="r2_5" class="t" style="left:930px;top:917.0px;line-height:17px;font-size:11px;color:#111;font-weight:normal;font-family:'Liberation Sans',sans-serif;letter-spacing:-0.306px;">14:00</span>
<span id="r2_6" class="t" style="left:1073px;top:917.0px;line-height:17px;font-size:11px;color:#111;font-weight:normal;font-family:'Liberation Sans',sans-serif;letter-spacing:-0.306px;">16:00</span>
<span id="r2_7" class="t" style="left:1215px;top:917.0px;line-height:17px;font-size:11px;color:#111;font-weight:normal;font-family:'Liberation Sans',sans-serif;letter-spacing:-0.306px;">18:00</span>
<span id="r2_8" class="t" style="left:1358px;top:917.0px;line-height:17px;font-size:11px;color:#111;font-weight:normal;font-family:'Liberation Sans',sans-serif;letter-spacing:-0.306px;">20:00</span>
<span id="r2_9" class="t" style="left:1500px;top:917.0px;line-height:17px;font-size:11px;color:#111;font-weight:normal;font-family:'Liberation Sans',sans-serif;letter-spacing:-0.306px;">22:00</span>
<span id="r2_10" class="t" style="left:1643px;top:917.0px;line-height:17px;font-size:11px;color:#111;font-weight:normal;font-family:'Liberation Sans',sans-serif;letter-spacing:-0.306px;">00:00</span>
<span id="r2_11" class="t" style="left:1786px;top:917.0px;line-height:17px;font-size:11px;color:#111;font-weight:normal;font-family:'Liberation Sans',sans-serif;letter-spacing:-0.306px;">02:00</span>
<div style="left:12px;top:938px;width:201px;height:21px;background:#fff;border-bottom:1px solid #d8d8d8;"></div>
<svg width="16" height="16" viewBox="0 0 16 16" style="left:15px;top:940px;overflow:visible"><circle cx="5" cy="4.500" r="3" fill="#ffb400" stroke="#e85a00" stroke-width="1"/><path d="M0.500 13.500L6 5l3.500 4.500L12 7l4 6.500z" fill="#9a9ccc" stroke="#1a1a1a" stroke-width="1"/><path d="M6 6.500l-2 4 2-1 1 2 1-3z" fill="#fff" opacity=".7"/><rect x="0.500" y="13.500" width="15.500" height="2" fill="#00aee8"/></svg>
<span id="tl_row" class="t" style="left:34px;top:939.0px;line-height:20px;font-size:13px;color:#000;font-weight:normal;font-family:'Liberation Sans',sans-serif;letter-spacing:-0.689px;">STK_Fundamentals Availability</span>
<svg width="16" height="16" viewBox="0 0 16 16" style="left:196px;top:941px;overflow:visible"><rect x="0" y="2" width="16" height="11" fill="#d4d4d4"/><path d="M1.500 7.500C4 4.500 6 4 8 4s4 .5 6.500 3.500C12 10.500 10 11 8 11s-4-.5-6.500-3.500z" fill="#bbb" stroke="#777" stroke-width="1"/><circle cx="8" cy="7.500" r="2.600" fill="#777"/><circle cx="8" cy="7.500" r="1" fill="#333"/></svg>
<div style="left:214px;top:938px;width:1710px;height:21px;background:#808080;"></div>
<div style="left:215px;top:938px;width:1707px;height:21px;background:#d98312;border:1px solid #6fa6e6;border-top-color:#c9d8e8;"></div>
<span id="tl_int" class="t" style="left:221px;top:939.0px;line-height:17px;font-size:11px;color:#111;font-weight:bold;font-family:'Liberation Sans',sans-serif;letter-spacing:-0.296px;">STK_Fundamentals AvailabilityIntervals</span>
<div style="left:214px;top:959px;width:1710px;height:49px;background:#808080;"></div>
<div style="left:413px;top:926px;width:1px;height:82px;background:#f0a898;"></div>
<svg width="18" height="14" style="left:404px;top:915px"><path d="M2.5 2.5h13v4l-6.500 5.500-6.500-5.500z" fill="#f4f4f4" stroke="#9a9a9a"/></svg>
<div style="left:8px;top:1010px;width:1920px;height:22px;background:#f0f0f0;"></div>
<div style="left:1112px;top:1013px;width:1px;height:18px;background:#a9a48a;"></div>
<div style="left:1136px;top:1013px;width:1px;height:18px;background:#a9a48a;"></div>
<div style="left:1160px;top:1013px;width:1px;height:18px;background:#a9a48a;"></div>
<div style="left:1368px;top:1013px;width:1px;height:18px;background:#a9a48a;"></div>
<div style="left:1522px;top:1013px;width:1px;height:18px;background:#a9a48a;"></div>
<div style="left:1740px;top:1013px;width:1px;height:18px;background:#a9a48a;"></div>
<svg width="16" height="16" viewBox="0 0 16 16" style="left:1117px;top:1014px;overflow:visible"><path d="M8 1L15.500 15H0.500z" fill="#ffe000" stroke="#111" stroke-width="1.200" stroke-linejoin="round"/><path d="M8 5.500v5" stroke="#111" stroke-width="1.800"/><circle cx="8" cy="12.700" r="1.100" fill="#111"/></svg>
<svg width="16" height="16" viewBox="0 0 16 16" style="left:1141px;top:1014px;overflow:visible"><path d="M1.500 6.500a9.500 9.500 0 0 1 13 0M3.500 9a6.500 6.500 0 0 1 9 0M5.500 11.300a3.500 3.500 0 0 1 5 0" stroke="#1e8a1e" stroke-width="1.700" fill="none"/><circle cx="8" cy="13.800" r="1.500" fill="#1e8a1e"/></svg>
<span id="sb1" class="t" style="left:1164px;top:1012.5px;line-height:20px;font-size:13px;color:#000;font-weight:normal;font-family:'Liberation Sans',sans-serif;letter-spacing:0.247px;">Bloomington</span>
<span id="sb2" class="t" style="left:1372px;top:1012.5px;line-height:20px;font-size:13px;color:#000;font-weight:normal;font-family:'Liberation Sans',sans-serif;letter-spacing:-0.222px;">(-14.23358, 51.68380)</span>
<span id="sb3" class="t" style="left:1526px;top:1012.5px;line-height:20px;font-size:13px;color:#000;font-weight:normal;font-family:'Liberation Sans',sans-serif;letter-spacing:-0.095px;">11 Nov 2022 06:48:43.367</span>
<span id="sb4" class="t" style="left:1744px;top:1012.5px;line-height:20px;font-size:13px;color:#000;font-weight:normal;font-family:'Liberation Sans',sans-serif;letter-spacing:-0.165px;">Time Step: 0.10 sec</span>
</body></html>
